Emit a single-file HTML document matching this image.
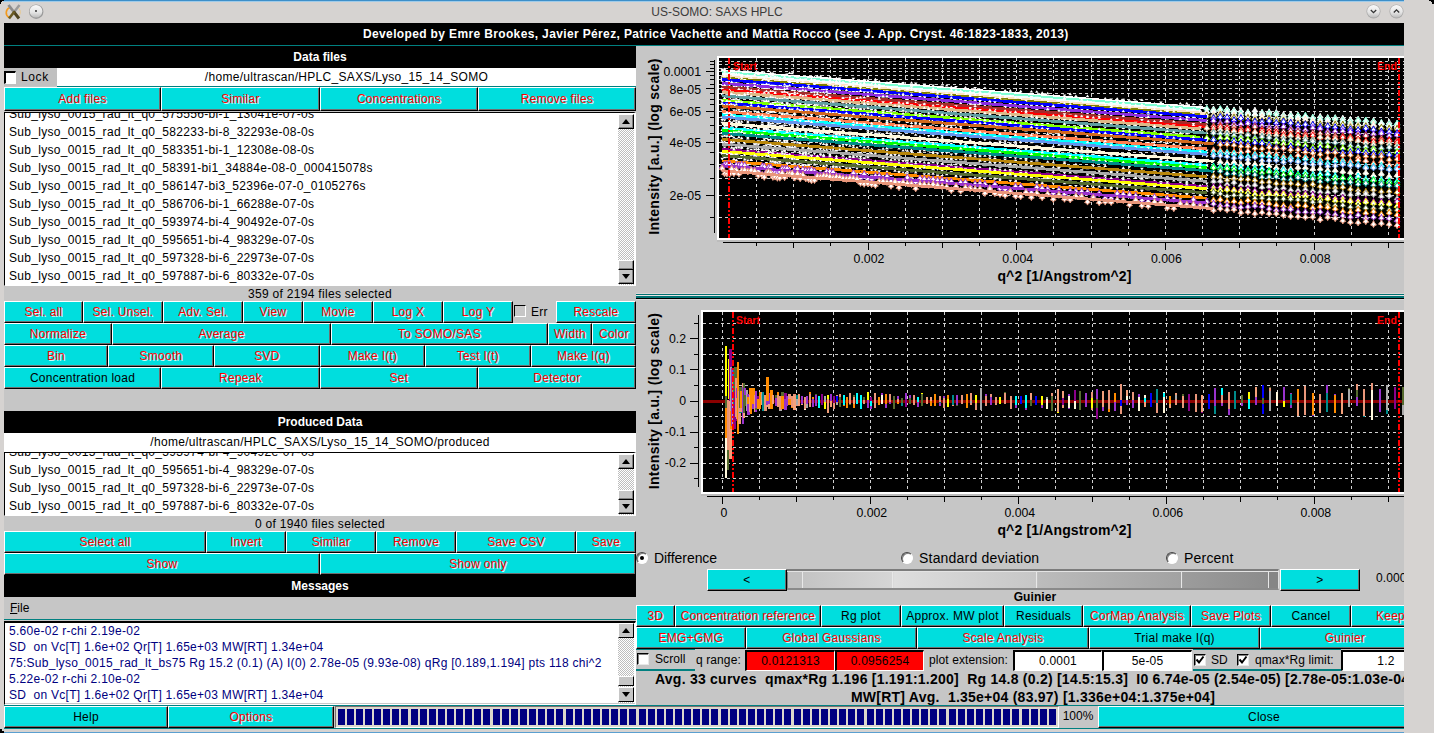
<!DOCTYPE html><html><head><meta charset="utf-8"><style>
*{margin:0;padding:0;box-sizing:border-box}
html,body{width:1434px;height:733px;overflow:hidden;background:#d6d3d1;font-family:"Liberation Sans", sans-serif;font-size:12px;position:relative}
.b{position:absolute;background:#00dede;border-top:1px solid #fff;border-left:1px solid #fff;border-right:1px solid #000;border-bottom:1px solid #000;box-shadow:inset -1px -1px 0 #6e6e6e;text-align:center;white-space:pre;font-size:12px;overflow:hidden;letter-spacing:0.25px}
</style></head><body>

<div style="position:absolute;left:4px;top:0px;width:1400px;height:1px;background:#3d8fc9"></div>
<div style="position:absolute;left:3px;top:1px;width:1401px;height:1px;background:#9fcbe9"></div>
<div style="position:absolute;left:0px;top:2px;width:1434px;height:20px;line-height:20px;text-align:center;white-space:pre;color:#3c3c3c;font-size:12px;">US-SOMO: SAXS HPLC</div>
<div style="position:absolute;left:4px;top:23px;width:1400px;height:708px;background:#c6c6c6"></div>
<div style="position:absolute;left:4px;top:23px;width:1400px;height:22px;line-height:22px;text-align:center;white-space:pre;background:#000;color:#fff;font-weight:bold;"></div>
<div style="position:absolute;left:363px;top:26px;white-space:pre;color:#fff;font-weight:bold;letter-spacing:0.36px;line-height:16px;">Developed by Emre Brookes, Javier Pérez, Patrice Vachette and Mattia Rocco (see J. App. Cryst. 46:1823-1833, 2013)</div>
<div style="position:absolute;left:4px;top:45px;width:1400px;height:1px;background:#008080"></div>
<div style="position:absolute;left:4px;top:46px;width:632px;height:22px;line-height:22px;text-align:center;white-space:pre;background:#000;color:#fff;font-weight:bold;">Data files</div>
<div style="position:absolute;left:4px;top:68px;width:53px;height:18px;background:#c0c0c0"></div>
<div style="position:absolute;left:4px;top:71px;width:12px;height:13px;background:#fff;border-top:2px solid #000;border-left:2px solid #000;border-right:1px solid #fff;border-bottom:1px solid #fff"></div>
<div style="position:absolute;left:21px;top:69px;white-space:pre;line-height:16px;letter-spacing:0.6px">Lock</div>
<div style="position:absolute;left:57px;top:68px;width:579px;height:18px;background:#fff"></div>
<div style="position:absolute;left:57px;top:68px;width:579px;height:18px;line-height:18px;text-align:center;white-space:pre;letter-spacing:0.3px;">/home/ultrascan/HPLC_SAXS/Lyso_15_14_SOMO</div>
<div style="position:absolute;left:57px;top:86px;width:579px;height:1px;background:#008080"></div>
<div class="b" style="left:4px;top:87px;width:157px;height:24px;line-height:22px;color:red;text-shadow:1px 1px 0 rgba(255,255,255,0.85);">Add files</div>
<div class="b" style="left:161px;top:87px;width:159px;height:24px;line-height:22px;color:red;text-shadow:1px 1px 0 rgba(255,255,255,0.85);">Similar</div>
<div class="b" style="left:320px;top:87px;width:158px;height:24px;line-height:22px;color:red;text-shadow:1px 1px 0 rgba(255,255,255,0.85);">Concentrations</div>
<div class="b" style="left:478px;top:87px;width:158px;height:24px;line-height:22px;color:red;text-shadow:1px 1px 0 rgba(255,255,255,0.85);">Remove files</div>
<div style="position:absolute;left:4px;top:112px;width:632px;height:174px;background:#fff;border-top:1px solid #000;border-left:1px solid #000;border-right:2px solid #fff;border-bottom:1px solid #fff;overflow:hidden"><div style="position:absolute;left:4px;top:-8px"><div style="height:18px;line-height:18px;white-space:pre;letter-spacing:0.3px">Sub_lyso_0015_rad_lt_q0_575556-bi-1_13041e-07-0s</div><div style="height:18px;line-height:18px;white-space:pre;letter-spacing:0.3px">Sub_lyso_0015_rad_lt_q0_582233-bi-8_32293e-08-0s</div><div style="height:18px;line-height:18px;white-space:pre;letter-spacing:0.3px">Sub_lyso_0015_rad_lt_q0_583351-bi-1_12308e-08-0s</div><div style="height:18px;line-height:18px;white-space:pre;letter-spacing:0.3px">Sub_lyso_0015_rad_lt_q0_58391-bi1_34884e-08-0_000415078s</div><div style="height:18px;line-height:18px;white-space:pre;letter-spacing:0.3px">Sub_lyso_0015_rad_lt_q0_586147-bi3_52396e-07-0_0105276s</div><div style="height:18px;line-height:18px;white-space:pre;letter-spacing:0.3px">Sub_lyso_0015_rad_lt_q0_586706-bi-1_66288e-07-0s</div><div style="height:18px;line-height:18px;white-space:pre;letter-spacing:0.3px">Sub_lyso_0015_rad_lt_q0_593974-bi-4_90492e-07-0s</div><div style="height:18px;line-height:18px;white-space:pre;letter-spacing:0.3px">Sub_lyso_0015_rad_lt_q0_595651-bi-4_98329e-07-0s</div><div style="height:18px;line-height:18px;white-space:pre;letter-spacing:0.3px">Sub_lyso_0015_rad_lt_q0_597328-bi-6_22973e-07-0s</div><div style="height:18px;line-height:18px;white-space:pre;letter-spacing:0.3px">Sub_lyso_0015_rad_lt_q0_597887-bi-6_80332e-07-0s</div></div></div>
<div style="position:absolute;left:618px;top:114px;width:16px;height:171px;background:repeating-conic-gradient(#bdbdbd 0 25%,#fff 0 50%) 0 0/2px 2px"></div>
<div style="position:absolute;left:618px;top:114px;width:16px;height:15px;background:#c6c6c6;border-top:1px solid #fff;border-left:1px solid #fff;border-right:1px solid #000;border-bottom:1px solid #000;box-shadow:inset -1px -1px 0 #808080"><div style="position:absolute;left:3px;top:4px;width:0;height:0;border-left:4px solid transparent;border-right:4px solid transparent;border-bottom:5px solid #000"></div></div>
<div style="position:absolute;left:618px;top:269px;width:16px;height:15px;background:#c6c6c6;border-top:1px solid #fff;border-left:1px solid #fff;border-right:1px solid #000;border-bottom:1px solid #000;box-shadow:inset -1px -1px 0 #808080"><div style="position:absolute;left:3px;top:4px;width:0;height:0;border-left:4px solid transparent;border-right:4px solid transparent;border-top:5px solid #000"></div></div>
<div style="position:absolute;left:618px;top:260px;width:16px;height:10px;background:#c6c6c6;border-top:1px solid #fff;border-left:1px solid #fff;border-right:1px solid #000;border-bottom:1px solid #000;box-shadow:inset -1px -1px 0 #808080"></div>
<div style="position:absolute;left:4px;top:287px;width:632px;height:15px;line-height:15px;text-align:center;white-space:pre;line-height:15px;letter-spacing:0.3px">359 of 2194 files selected</div>
<div class="b" style="left:4px;top:301px;width:79px;height:22px;line-height:20px;color:red;text-shadow:1px 1px 0 rgba(255,255,255,0.85);">Sel. all</div>
<div class="b" style="left:83px;top:301px;width:80px;height:22px;line-height:20px;color:red;text-shadow:1px 1px 0 rgba(255,255,255,0.85);">Sel. Unsel.</div>
<div class="b" style="left:163px;top:301px;width:80px;height:22px;line-height:20px;color:red;text-shadow:1px 1px 0 rgba(255,255,255,0.85);">Adv. Sel.</div>
<div class="b" style="left:243px;top:301px;width:60px;height:22px;line-height:20px;color:red;text-shadow:1px 1px 0 rgba(255,255,255,0.85);">View</div>
<div class="b" style="left:303px;top:301px;width:70px;height:22px;line-height:20px;color:red;text-shadow:1px 1px 0 rgba(255,255,255,0.85);">Movie</div>
<div class="b" style="left:373px;top:301px;width:70px;height:22px;line-height:20px;color:red;text-shadow:1px 1px 0 rgba(255,255,255,0.85);">Log X</div>
<div class="b" style="left:443px;top:301px;width:70px;height:22px;line-height:20px;color:red;text-shadow:1px 1px 0 rgba(255,255,255,0.85);">Log Y</div>
<div class="b" style="left:556px;top:301px;width:80px;height:22px;line-height:20px;color:red;text-shadow:1px 1px 0 rgba(255,255,255,0.85);">Rescale</div>
<div style="position:absolute;left:514px;top:305px;width:12px;height:12px;background:transparent;border-top:1px solid #000;border-left:1px solid #000;border-right:1px solid #fff;border-bottom:1px solid #fff"></div>
<div style="position:absolute;left:531px;top:304px;white-space:pre;line-height:16px;letter-spacing:0.3px">Err</div>
<div class="b" style="left:4px;top:323px;width:108px;height:22px;line-height:20px;color:red;text-shadow:1px 1px 0 rgba(255,255,255,0.85);">Normalize</div>
<div class="b" style="left:112px;top:323px;width:219px;height:22px;line-height:20px;color:red;text-shadow:1px 1px 0 rgba(255,255,255,0.85);">Average</div>
<div class="b" style="left:331px;top:323px;width:217px;height:22px;line-height:20px;color:red;text-shadow:1px 1px 0 rgba(255,255,255,0.85);">To SOMO/SAS</div>
<div class="b" style="left:548px;top:323px;width:44px;height:22px;line-height:20px;color:red;text-shadow:1px 1px 0 rgba(255,255,255,0.85);">Width</div>
<div class="b" style="left:592px;top:323px;width:44px;height:22px;line-height:20px;color:red;text-shadow:1px 1px 0 rgba(255,255,255,0.85);">Color</div>
<div class="b" style="left:4px;top:345px;width:104px;height:22px;line-height:20px;color:red;text-shadow:1px 1px 0 rgba(255,255,255,0.85);">Bin</div>
<div class="b" style="left:108px;top:345px;width:106px;height:22px;line-height:20px;color:red;text-shadow:1px 1px 0 rgba(255,255,255,0.85);">Smooth</div>
<div class="b" style="left:214px;top:345px;width:106px;height:22px;line-height:20px;color:red;text-shadow:1px 1px 0 rgba(255,255,255,0.85);">SVD</div>
<div class="b" style="left:320px;top:345px;width:105px;height:22px;line-height:20px;color:red;text-shadow:1px 1px 0 rgba(255,255,255,0.85);">Make I(t)</div>
<div class="b" style="left:425px;top:345px;width:106px;height:22px;line-height:20px;color:red;text-shadow:1px 1px 0 rgba(255,255,255,0.85);">Test I(t)</div>
<div class="b" style="left:531px;top:345px;width:105px;height:22px;line-height:20px;color:red;text-shadow:1px 1px 0 rgba(255,255,255,0.85);">Make I(q)</div>
<div class="b" style="left:4px;top:367px;width:157px;height:22px;line-height:20px;color:#000;">Concentration load</div>
<div class="b" style="left:161px;top:367px;width:159px;height:22px;line-height:20px;color:red;text-shadow:1px 1px 0 rgba(255,255,255,0.85);">Repeak</div>
<div class="b" style="left:320px;top:367px;width:158px;height:22px;line-height:20px;color:red;text-shadow:1px 1px 0 rgba(255,255,255,0.85);">Set</div>
<div class="b" style="left:478px;top:367px;width:158px;height:22px;line-height:20px;color:red;text-shadow:1px 1px 0 rgba(255,255,255,0.85);">Detector</div>
<div style="position:absolute;left:4px;top:411px;width:632px;height:22px;line-height:22px;text-align:center;white-space:pre;background:#000;color:#fff;font-weight:bold;">Produced Data</div>
<div style="position:absolute;left:4px;top:433px;width:632px;height:19px;background:#fff"></div>
<div style="position:absolute;left:4px;top:433px;width:632px;height:19px;line-height:19px;text-align:center;white-space:pre;letter-spacing:0.3px;">/home/ultrascan/HPLC_SAXS/Lyso_15_14_SOMO/produced</div>
<div style="position:absolute;left:4px;top:452px;width:632px;height:64px;background:#fff;border-top:1px solid #000;border-left:1px solid #000;border-right:2px solid #fff;border-bottom:1px solid #fff;overflow:hidden"><div style="position:absolute;left:4px;top:-10px"><div style="height:18px;line-height:18px;white-space:pre;letter-spacing:0.3px">Sub_lyso_0015_rad_lt_q0_593974-bi-4_90492e-07-0s</div><div style="height:18px;line-height:18px;white-space:pre;letter-spacing:0.3px">Sub_lyso_0015_rad_lt_q0_595651-bi-4_98329e-07-0s</div><div style="height:18px;line-height:18px;white-space:pre;letter-spacing:0.3px">Sub_lyso_0015_rad_lt_q0_597328-bi-6_22973e-07-0s</div><div style="height:18px;line-height:18px;white-space:pre;letter-spacing:0.3px">Sub_lyso_0015_rad_lt_q0_597887-bi-6_80332e-07-0s</div></div></div>
<div style="position:absolute;left:618px;top:454px;width:16px;height:61px;background:repeating-conic-gradient(#bdbdbd 0 25%,#fff 0 50%) 0 0/2px 2px"></div>
<div style="position:absolute;left:618px;top:454px;width:16px;height:15px;background:#c6c6c6;border-top:1px solid #fff;border-left:1px solid #fff;border-right:1px solid #000;border-bottom:1px solid #000;box-shadow:inset -1px -1px 0 #808080"><div style="position:absolute;left:3px;top:4px;width:0;height:0;border-left:4px solid transparent;border-right:4px solid transparent;border-bottom:5px solid #000"></div></div>
<div style="position:absolute;left:618px;top:499px;width:16px;height:15px;background:#c6c6c6;border-top:1px solid #fff;border-left:1px solid #fff;border-right:1px solid #000;border-bottom:1px solid #000;box-shadow:inset -1px -1px 0 #808080"><div style="position:absolute;left:3px;top:4px;width:0;height:0;border-left:4px solid transparent;border-right:4px solid transparent;border-top:5px solid #000"></div></div>
<div style="position:absolute;left:618px;top:490px;width:16px;height:10px;background:#c6c6c6;border-top:1px solid #fff;border-left:1px solid #fff;border-right:1px solid #000;border-bottom:1px solid #000;box-shadow:inset -1px -1px 0 #808080"></div>
<div style="position:absolute;left:4px;top:517px;width:632px;height:15px;line-height:15px;text-align:center;white-space:pre;line-height:15px;letter-spacing:0.3px">0 of 1940 files selected</div>
<div class="b" style="left:4px;top:531px;width:202px;height:22px;line-height:20px;color:red;text-shadow:1px 1px 0 rgba(255,255,255,0.85);">Select all</div>
<div class="b" style="left:206px;top:531px;width:80px;height:22px;line-height:20px;color:red;text-shadow:1px 1px 0 rgba(255,255,255,0.85);">Invert</div>
<div class="b" style="left:286px;top:531px;width:90px;height:22px;line-height:20px;color:red;text-shadow:1px 1px 0 rgba(255,255,255,0.85);">Similar</div>
<div class="b" style="left:376px;top:531px;width:80px;height:22px;line-height:20px;color:red;text-shadow:1px 1px 0 rgba(255,255,255,0.85);">Remove</div>
<div class="b" style="left:456px;top:531px;width:120px;height:22px;line-height:20px;color:red;text-shadow:1px 1px 0 rgba(255,255,255,0.85);">Save CSV</div>
<div class="b" style="left:576px;top:531px;width:60px;height:22px;line-height:20px;color:red;text-shadow:1px 1px 0 rgba(255,255,255,0.85);">Save</div>
<div class="b" style="left:4px;top:553px;width:316px;height:22px;line-height:20px;color:red;text-shadow:1px 1px 0 rgba(255,255,255,0.85);">Show</div>
<div class="b" style="left:320px;top:553px;width:316px;height:22px;line-height:20px;color:red;text-shadow:1px 1px 0 rgba(255,255,255,0.85);">Show only</div>
<div style="position:absolute;left:4px;top:575px;width:632px;height:22px;line-height:22px;text-align:center;white-space:pre;background:#000;color:#fff;font-weight:bold;">Messages</div>
<div style="position:absolute;left:10px;top:599px;white-space:pre;line-height:18px;"><u>F</u>ile</div>
<div style="position:absolute;left:4px;top:619px;width:632px;height:1px;background:#008080"></div>
<div style="position:absolute;left:4px;top:621px;width:632px;height:84px;background:#fff;border-top:2px solid #000;border-left:1px solid #000;border-right:1px solid #fff;border-bottom:1px solid #fff;box-shadow:inset 0 -1px 0 #c8c8c8;overflow:hidden;color:#000080"><div style="position:absolute;left:4px;top:0px"><div style="height:16px;line-height:16px;white-space:pre;letter-spacing:0.28px">5.60e-02 r-chi 2.19e-02</div><div style="height:16px;line-height:16px;white-space:pre;letter-spacing:0.28px">SD  on Vc[T] 1.6e+02 Qr[T] 1.65e+03 MW[RT] 1.34e+04</div><div style="height:16px;line-height:16px;white-space:pre;letter-spacing:0.28px">75:Sub_lyso_0015_rad_lt_bs75 Rg 15.2 (0.1) (A) I(0) 2.78e-05 (9.93e-08) qRg [0.189,1.194] pts 118 chi^2</div><div style="height:16px;line-height:16px;white-space:pre;letter-spacing:0.28px">5.22e-02 r-chi 2.10e-02</div><div style="height:16px;line-height:16px;white-space:pre;letter-spacing:0.28px">SD  on Vc[T] 1.6e+02 Qr[T] 1.65e+03 MW[RT] 1.34e+04</div></div></div>
<div style="position:absolute;left:618px;top:623px;width:16px;height:80px;background:repeating-conic-gradient(#bdbdbd 0 25%,#fff 0 50%) 0 0/2px 2px"></div>
<div style="position:absolute;left:618px;top:623px;width:16px;height:15px;background:#c6c6c6;border-top:1px solid #fff;border-left:1px solid #fff;border-right:1px solid #000;border-bottom:1px solid #000"><div style="position:absolute;left:3px;top:4px;border-left:4px solid transparent;border-right:4px solid transparent;border-bottom:5px solid #000"></div></div>
<div style="position:absolute;left:618px;top:687px;width:16px;height:15px;background:#c6c6c6;border-top:1px solid #fff;border-left:1px solid #fff;border-right:1px solid #000;border-bottom:1px solid #000"><div style="position:absolute;left:3px;top:4px;border-left:4px solid transparent;border-right:4px solid transparent;border-top:5px solid #000"></div></div>
<div style="position:absolute;left:618px;top:676px;width:16px;height:10px;background:#c6c6c6;border-top:1px solid #fff;border-left:1px solid #fff;border-right:1px solid #000;border-bottom:1px solid #000"></div>
<div style="position:absolute;left:4px;top:705px;width:1400px;height:1px;background:#008080"></div>
<div class="b" style="left:4px;top:706px;width:164px;height:22px;line-height:20px;color:#000;">Help</div>
<div class="b" style="left:168px;top:706px;width:166px;height:22px;line-height:20px;color:red;text-shadow:1px 1px 0 rgba(255,255,255,0.85);">Options</div>
<div style="position:absolute;left:335px;top:706px;width:724px;height:22px;background:#dcd8cc;border-top:1px solid #7a7070;border-left:1px solid #7a7070;border-bottom:1px solid #fff;border-right:1px solid #fff;overflow:hidden"><div style="position:absolute;left:1.5px;top:2px;width:7px;height:16px;background:#000080"></div><div style="position:absolute;left:10.6px;top:2px;width:7px;height:16px;background:#000080"></div><div style="position:absolute;left:19.7px;top:2px;width:7px;height:16px;background:#000080"></div><div style="position:absolute;left:28.9px;top:2px;width:7px;height:16px;background:#000080"></div><div style="position:absolute;left:38.0px;top:2px;width:7px;height:16px;background:#000080"></div><div style="position:absolute;left:47.1px;top:2px;width:7px;height:16px;background:#000080"></div><div style="position:absolute;left:56.2px;top:2px;width:7px;height:16px;background:#000080"></div><div style="position:absolute;left:65.3px;top:2px;width:7px;height:16px;background:#000080"></div><div style="position:absolute;left:74.5px;top:2px;width:7px;height:16px;background:#000080"></div><div style="position:absolute;left:83.6px;top:2px;width:7px;height:16px;background:#000080"></div><div style="position:absolute;left:92.7px;top:2px;width:7px;height:16px;background:#000080"></div><div style="position:absolute;left:101.8px;top:2px;width:7px;height:16px;background:#000080"></div><div style="position:absolute;left:110.9px;top:2px;width:7px;height:16px;background:#000080"></div><div style="position:absolute;left:120.1px;top:2px;width:7px;height:16px;background:#000080"></div><div style="position:absolute;left:129.2px;top:2px;width:7px;height:16px;background:#000080"></div><div style="position:absolute;left:138.3px;top:2px;width:7px;height:16px;background:#000080"></div><div style="position:absolute;left:147.4px;top:2px;width:7px;height:16px;background:#000080"></div><div style="position:absolute;left:156.5px;top:2px;width:7px;height:16px;background:#000080"></div><div style="position:absolute;left:165.7px;top:2px;width:7px;height:16px;background:#000080"></div><div style="position:absolute;left:174.8px;top:2px;width:7px;height:16px;background:#000080"></div><div style="position:absolute;left:183.9px;top:2px;width:7px;height:16px;background:#000080"></div><div style="position:absolute;left:193.0px;top:2px;width:7px;height:16px;background:#000080"></div><div style="position:absolute;left:202.1px;top:2px;width:7px;height:16px;background:#000080"></div><div style="position:absolute;left:211.3px;top:2px;width:7px;height:16px;background:#000080"></div><div style="position:absolute;left:220.4px;top:2px;width:7px;height:16px;background:#000080"></div><div style="position:absolute;left:229.5px;top:2px;width:7px;height:16px;background:#000080"></div><div style="position:absolute;left:238.6px;top:2px;width:7px;height:16px;background:#000080"></div><div style="position:absolute;left:247.7px;top:2px;width:7px;height:16px;background:#000080"></div><div style="position:absolute;left:256.9px;top:2px;width:7px;height:16px;background:#000080"></div><div style="position:absolute;left:266.0px;top:2px;width:7px;height:16px;background:#000080"></div><div style="position:absolute;left:275.1px;top:2px;width:7px;height:16px;background:#000080"></div><div style="position:absolute;left:284.2px;top:2px;width:7px;height:16px;background:#000080"></div><div style="position:absolute;left:293.3px;top:2px;width:7px;height:16px;background:#000080"></div><div style="position:absolute;left:302.5px;top:2px;width:7px;height:16px;background:#000080"></div><div style="position:absolute;left:311.6px;top:2px;width:7px;height:16px;background:#000080"></div><div style="position:absolute;left:320.7px;top:2px;width:7px;height:16px;background:#000080"></div><div style="position:absolute;left:329.8px;top:2px;width:7px;height:16px;background:#000080"></div><div style="position:absolute;left:338.9px;top:2px;width:7px;height:16px;background:#000080"></div><div style="position:absolute;left:348.1px;top:2px;width:7px;height:16px;background:#000080"></div><div style="position:absolute;left:357.2px;top:2px;width:7px;height:16px;background:#000080"></div><div style="position:absolute;left:366.3px;top:2px;width:7px;height:16px;background:#000080"></div><div style="position:absolute;left:375.4px;top:2px;width:7px;height:16px;background:#000080"></div><div style="position:absolute;left:384.5px;top:2px;width:7px;height:16px;background:#000080"></div><div style="position:absolute;left:393.7px;top:2px;width:7px;height:16px;background:#000080"></div><div style="position:absolute;left:402.8px;top:2px;width:7px;height:16px;background:#000080"></div><div style="position:absolute;left:411.9px;top:2px;width:7px;height:16px;background:#000080"></div><div style="position:absolute;left:421.0px;top:2px;width:7px;height:16px;background:#000080"></div><div style="position:absolute;left:430.1px;top:2px;width:7px;height:16px;background:#000080"></div><div style="position:absolute;left:439.3px;top:2px;width:7px;height:16px;background:#000080"></div><div style="position:absolute;left:448.4px;top:2px;width:7px;height:16px;background:#000080"></div><div style="position:absolute;left:457.5px;top:2px;width:7px;height:16px;background:#000080"></div><div style="position:absolute;left:466.6px;top:2px;width:7px;height:16px;background:#000080"></div><div style="position:absolute;left:475.7px;top:2px;width:7px;height:16px;background:#000080"></div><div style="position:absolute;left:484.9px;top:2px;width:7px;height:16px;background:#000080"></div><div style="position:absolute;left:494.0px;top:2px;width:7px;height:16px;background:#000080"></div><div style="position:absolute;left:503.1px;top:2px;width:7px;height:16px;background:#000080"></div><div style="position:absolute;left:512.2px;top:2px;width:7px;height:16px;background:#000080"></div><div style="position:absolute;left:521.3px;top:2px;width:7px;height:16px;background:#000080"></div><div style="position:absolute;left:530.5px;top:2px;width:7px;height:16px;background:#000080"></div><div style="position:absolute;left:539.6px;top:2px;width:7px;height:16px;background:#000080"></div><div style="position:absolute;left:548.7px;top:2px;width:7px;height:16px;background:#000080"></div><div style="position:absolute;left:557.8px;top:2px;width:7px;height:16px;background:#000080"></div><div style="position:absolute;left:566.9px;top:2px;width:7px;height:16px;background:#000080"></div><div style="position:absolute;left:576.1px;top:2px;width:7px;height:16px;background:#000080"></div><div style="position:absolute;left:585.2px;top:2px;width:7px;height:16px;background:#000080"></div><div style="position:absolute;left:594.3px;top:2px;width:7px;height:16px;background:#000080"></div><div style="position:absolute;left:603.4px;top:2px;width:7px;height:16px;background:#000080"></div><div style="position:absolute;left:612.5px;top:2px;width:7px;height:16px;background:#000080"></div><div style="position:absolute;left:621.7px;top:2px;width:7px;height:16px;background:#000080"></div><div style="position:absolute;left:630.8px;top:2px;width:7px;height:16px;background:#000080"></div><div style="position:absolute;left:639.9px;top:2px;width:7px;height:16px;background:#000080"></div><div style="position:absolute;left:649.0px;top:2px;width:7px;height:16px;background:#000080"></div><div style="position:absolute;left:658.1px;top:2px;width:7px;height:16px;background:#000080"></div><div style="position:absolute;left:667.3px;top:2px;width:7px;height:16px;background:#000080"></div><div style="position:absolute;left:676.4px;top:2px;width:7px;height:16px;background:#000080"></div><div style="position:absolute;left:685.5px;top:2px;width:7px;height:16px;background:#000080"></div><div style="position:absolute;left:694.6px;top:2px;width:7px;height:16px;background:#000080"></div><div style="position:absolute;left:703.7px;top:2px;width:7px;height:16px;background:#000080"></div><div style="position:absolute;left:712.9px;top:2px;width:7px;height:16px;background:#000080"></div></div>
<div style="position:absolute;left:1058px;top:706px;width:40px;height:21px;line-height:21px;text-align:center;white-space:pre;">100%</div>
<div class="b" style="left:1098px;top:706px;width:332px;height:22px;line-height:20px;color:#000;">Close</div>
<div style="position:absolute;left:4px;top:728px;width:1400px;height:1px;background:#008080"></div>
<!--PLOTS-->
<div style="position:absolute;left:636px;top:293px;width:768px;height:1px;background:#dcd6d6"></div>
<div style="position:absolute;left:636px;top:294px;width:768px;height:1px;background:#007272"></div>
<div style="position:absolute;left:636px;top:295px;width:768px;height:1px;background:#e6e6e6"></div>
<div style="position:absolute;left:636px;top:296px;width:768px;height:2px;background:#007272"></div>
<div style="position:absolute;left:636px;top:298px;width:768px;height:1px;background:#000"></div>
<div style="position:absolute;left:636px;top:299px;width:768px;height:1px;background:#d8d8d8"></div>
<svg width="768" height="500" style="position:absolute;left:636px;top:46px" viewBox="636 46 768 500"><defs><clipPath id="c1"><rect x="719" y="58" width="685" height="180"/></clipPath><clipPath id="c2"><rect x="703" y="312" width="701" height="180"/></clipPath></defs><rect x="717" y="56" width="700" height="184" fill="#fff"/><rect x="719" y="58" width="700" height="180" fill="#000"/><rect x="717" y="240" width="700" height="2" fill="#bcbcbc"/><g clip-path="url(#c1)"><path d="M756.5 58V238 M793.5 58V238 M830.5 58V238 M868.5 58V238 M905.5 58V238 M942.5 58V238 M979.5 58V238 M1016.5 58V238 M1053.5 58V238 M1091.5 58V238 M1128.5 58V238 M1165.5 58V238 M1202.5 58V238 M1239.5 58V238 M1276.5 58V238 M1314.5 58V238 M1351.5 58V238 M1388.5 58V238 M719 217.5H1404 M719 195.5H1404 M719 178.5H1404 M719 164.5H1404 M719 152.5H1404 M719 142.5H1404 M719 133.5H1404 M719 125.5H1404 M719 117.5H1404 M719 111.5H1404 M719 104.5H1404 M719 99.5H1404 M719 93.5H1404 M719 88.5H1404 M719 84.5H1404 M719 79.5H1404 M719 75.5H1404 M719 71.5H1404 M719 68.5H1404 M719 64.5H1404 M719 61.5H1404" stroke="#d0d0d0" stroke-width="1" stroke-dasharray="3 3"/></g><defs><marker id="m0" markerUnits="userSpaceOnUse" markerWidth="10" markerHeight="10" refX="5" refY="5" overflow="visible"><path d="M5 1.5L6 3.5 7.9 6 6 6.6 5 8.5 4 6.6 2.1 6 4 3.5z" fill="#fff" stroke="#ffffff" stroke-width="1"/></marker><marker id="m1" markerUnits="userSpaceOnUse" markerWidth="10" markerHeight="10" refX="5" refY="5" overflow="visible"><path d="M5 1.5L6 3.5 7.9 6 6 6.6 5 8.5 4 6.6 2.1 6 4 3.5z" fill="#fff" stroke="#7fffd4" stroke-width="1"/></marker><marker id="m2" markerUnits="userSpaceOnUse" markerWidth="10" markerHeight="10" refX="5" refY="5" overflow="visible"><path d="M5 1.5L6 3.5 7.9 6 6 6.6 5 8.5 4 6.6 2.1 6 4 3.5z" fill="#fff" stroke="#f0ffff" stroke-width="1"/></marker><marker id="m3" markerUnits="userSpaceOnUse" markerWidth="10" markerHeight="10" refX="5" refY="5" overflow="visible"><path d="M5 1.5L6 3.5 7.9 6 6 6.6 5 8.5 4 6.6 2.1 6 4 3.5z" fill="#fff" stroke="#ffe4c4" stroke-width="1"/></marker><marker id="m4" markerUnits="userSpaceOnUse" markerWidth="10" markerHeight="10" refX="5" refY="5" overflow="visible"><path d="M5 1.5L6 3.5 7.9 6 6 6.6 5 8.5 4 6.6 2.1 6 4 3.5z" fill="#fff" stroke="#808000" stroke-width="1"/></marker><marker id="m5" markerUnits="userSpaceOnUse" markerWidth="10" markerHeight="10" refX="5" refY="5" overflow="visible"><path d="M5 1.5L6 3.5 7.9 6 6 6.6 5 8.5 4 6.6 2.1 6 4 3.5z" fill="#fff" stroke="#0000ff" stroke-width="1"/></marker><marker id="m6" markerUnits="userSpaceOnUse" markerWidth="10" markerHeight="10" refX="5" refY="5" overflow="visible"><path d="M5 1.5L6 3.5 7.9 6 6 6.6 5 8.5 4 6.6 2.1 6 4 3.5z" fill="#fff" stroke="#8a2be2" stroke-width="1"/></marker><marker id="m7" markerUnits="userSpaceOnUse" markerWidth="10" markerHeight="10" refX="5" refY="5" overflow="visible"><path d="M5 1.5L6 3.5 7.9 6 6 6.6 5 8.5 4 6.6 2.1 6 4 3.5z" fill="#fff" stroke="#a52a2a" stroke-width="1"/></marker><marker id="m8" markerUnits="userSpaceOnUse" markerWidth="10" markerHeight="10" refX="5" refY="5" overflow="visible"><path d="M5 1.5L6 3.5 7.9 6 6 6.6 5 8.5 4 6.6 2.1 6 4 3.5z" fill="#fff" stroke="#ff0000" stroke-width="1"/></marker><marker id="m9" markerUnits="userSpaceOnUse" markerWidth="10" markerHeight="10" refX="5" refY="5" overflow="visible"><path d="M5 1.5L6 3.5 7.9 6 6 6.6 5 8.5 4 6.6 2.1 6 4 3.5z" fill="#fff" stroke="#deb887" stroke-width="1"/></marker><marker id="m10" markerUnits="userSpaceOnUse" markerWidth="10" markerHeight="10" refX="5" refY="5" overflow="visible"><path d="M5 1.5L6 3.5 7.9 6 6 6.6 5 8.5 4 6.6 2.1 6 4 3.5z" fill="#fff" stroke="#5f9ea0" stroke-width="1"/></marker><marker id="m11" markerUnits="userSpaceOnUse" markerWidth="10" markerHeight="10" refX="5" refY="5" overflow="visible"><path d="M5 1.5L6 3.5 7.9 6 6 6.6 5 8.5 4 6.6 2.1 6 4 3.5z" fill="#fff" stroke="#7fff00" stroke-width="1"/></marker><marker id="m12" markerUnits="userSpaceOnUse" markerWidth="10" markerHeight="10" refX="5" refY="5" overflow="visible"><path d="M5 1.5L6 3.5 7.9 6 6 6.6 5 8.5 4 6.6 2.1 6 4 3.5z" fill="#fff" stroke="#0000ff" stroke-width="1"/></marker><marker id="m13" markerUnits="userSpaceOnUse" markerWidth="10" markerHeight="10" refX="5" refY="5" overflow="visible"><path d="M5 1.5L6 3.5 7.9 6 6 6.6 5 8.5 4 6.6 2.1 6 4 3.5z" fill="#fff" stroke="#d2691e" stroke-width="1"/></marker><marker id="m14" markerUnits="userSpaceOnUse" markerWidth="10" markerHeight="10" refX="5" refY="5" overflow="visible"><path d="M5 1.5L6 3.5 7.9 6 6 6.6 5 8.5 4 6.6 2.1 6 4 3.5z" fill="#fff" stroke="#ff7f50" stroke-width="1"/></marker><marker id="m15" markerUnits="userSpaceOnUse" markerWidth="10" markerHeight="10" refX="5" refY="5" overflow="visible"><path d="M5 1.5L6 3.5 7.9 6 6 6.6 5 8.5 4 6.6 2.1 6 4 3.5z" fill="#fff" stroke="#00ffff" stroke-width="1"/></marker><marker id="m16" markerUnits="userSpaceOnUse" markerWidth="10" markerHeight="10" refX="5" refY="5" overflow="visible"><path d="M5 1.5L6 3.5 7.9 6 6 6.6 5 8.5 4 6.6 2.1 6 4 3.5z" fill="#fff" stroke="#6495ed" stroke-width="1"/></marker><marker id="m17" markerUnits="userSpaceOnUse" markerWidth="10" markerHeight="10" refX="5" refY="5" overflow="visible"><path d="M5 1.5L6 3.5 7.9 6 6 6.6 5 8.5 4 6.6 2.1 6 4 3.5z" fill="#fff" stroke="#fff8dc" stroke-width="1"/></marker><marker id="m18" markerUnits="userSpaceOnUse" markerWidth="10" markerHeight="10" refX="5" refY="5" overflow="visible"><path d="M5 1.5L6 3.5 7.9 6 6 6.6 5 8.5 4 6.6 2.1 6 4 3.5z" fill="#fff" stroke="#00ffff" stroke-width="1"/></marker><marker id="m19" markerUnits="userSpaceOnUse" markerWidth="10" markerHeight="10" refX="5" refY="5" overflow="visible"><path d="M5 1.5L6 3.5 7.9 6 6 6.6 5 8.5 4 6.6 2.1 6 4 3.5z" fill="#fff" stroke="#00ff00" stroke-width="1"/></marker><marker id="m20" markerUnits="userSpaceOnUse" markerWidth="10" markerHeight="10" refX="5" refY="5" overflow="visible"><path d="M5 1.5L6 3.5 7.9 6 6 6.6 5 8.5 4 6.6 2.1 6 4 3.5z" fill="#fff" stroke="#008b8b" stroke-width="1"/></marker><marker id="m21" markerUnits="userSpaceOnUse" markerWidth="10" markerHeight="10" refX="5" refY="5" overflow="visible"><path d="M5 1.5L6 3.5 7.9 6 6 6.6 5 8.5 4 6.6 2.1 6 4 3.5z" fill="#fff" stroke="#b8860b" stroke-width="1"/></marker><marker id="m22" markerUnits="userSpaceOnUse" markerWidth="10" markerHeight="10" refX="5" refY="5" overflow="visible"><path d="M5 1.5L6 3.5 7.9 6 6 6.6 5 8.5 4 6.6 2.1 6 4 3.5z" fill="#fff" stroke="#a9a9a9" stroke-width="1"/></marker><marker id="m23" markerUnits="userSpaceOnUse" markerWidth="10" markerHeight="10" refX="5" refY="5" overflow="visible"><path d="M5 1.5L6 3.5 7.9 6 6 6.6 5 8.5 4 6.6 2.1 6 4 3.5z" fill="#fff" stroke="#8b008b" stroke-width="1"/></marker><marker id="m24" markerUnits="userSpaceOnUse" markerWidth="10" markerHeight="10" refX="5" refY="5" overflow="visible"><path d="M5 1.5L6 3.5 7.9 6 6 6.6 5 8.5 4 6.6 2.1 6 4 3.5z" fill="#fff" stroke="#ffff00" stroke-width="1"/></marker><marker id="m25" markerUnits="userSpaceOnUse" markerWidth="10" markerHeight="10" refX="5" refY="5" overflow="visible"><path d="M5 1.5L6 3.5 7.9 6 6 6.6 5 8.5 4 6.6 2.1 6 4 3.5z" fill="#fff" stroke="#556b2f" stroke-width="1"/></marker><marker id="m26" markerUnits="userSpaceOnUse" markerWidth="10" markerHeight="10" refX="5" refY="5" overflow="visible"><path d="M5 1.5L6 3.5 7.9 6 6 6.6 5 8.5 4 6.6 2.1 6 4 3.5z" fill="#fff" stroke="#ff8c00" stroke-width="1"/></marker><marker id="m27" markerUnits="userSpaceOnUse" markerWidth="10" markerHeight="10" refX="5" refY="5" overflow="visible"><path d="M5 1.5L6 3.5 7.9 6 6 6.6 5 8.5 4 6.6 2.1 6 4 3.5z" fill="#fff" stroke="#9932cc" stroke-width="1"/></marker><marker id="m28" markerUnits="userSpaceOnUse" markerWidth="10" markerHeight="10" refX="5" refY="5" overflow="visible"><path d="M5 1.5L6 3.5 7.9 6 6 6.6 5 8.5 4 6.6 2.1 6 4 3.5z" fill="#fff" stroke="#e9967a" stroke-width="1"/></marker><marker id="wd" markerUnits="userSpaceOnUse" markerWidth="10" markerHeight="10" refX="5" refY="5" overflow="visible"><path d="M3.2 4.6H6.8L5 7.2Z" fill="#fff"/></marker><marker id="wu" markerUnits="userSpaceOnUse" markerWidth="10" markerHeight="10" refX="5" refY="5" overflow="visible"><path d="M5 2.8L6.8 5.4H3.2Z" fill="#fff"/></marker></defs><g clip-path="url(#c1)"><polyline points="722.2,69.0 726.9,72.6 729.6,72.8 731.7,69.9 751.2,75.4 754.7,74.9 758.4,75.6 764.3,76.4 766.4,75.6 770.7,77.0 772.9,73.5 777.4,76.8 784.6,77.5 787.1,73.9 794.8,78.4 805.8,80.0 811.5,80.1 823.6,77.5 826.7,77.3 833.1,81.7 836.4,82.5 839.7,78.0 853.4,78.1 867.9,80.0 871.6,84.6 883.1,86.1 887.0,85.6 891.0,81.3 903.1,82.4 915.7,83.0 920.0,87.6 924.3,84.0 933.1,84.8 942.1,86.0 956.0,86.3 960.7,91.7 975.1,87.5 1015.5,95.7 1026.0,96.9 1058.9,98.8 1064.5,94.8 1081.7,101.1 1093.3,101.8 1111.2,98.8 1123.3,99.2 1129.5,101.0 1135.7,101.0 1148.2,105.3 1154.5,106.8 1160.9,101.9 1200.1,106.2" fill="none" stroke="none" marker-start="url(#wd)" marker-mid="url(#wd)" marker-end="url(#wd)"/><polyline points="724.6,69.8 733.9,74.0 736.3,70.2 738.9,70.1 741.7,74.6 744.7,70.1 747.8,75.0 762.3,75.8 768.5,71.7 775.1,77.3 779.8,78.0 782.2,76.8 789.6,73.6 792.2,73.8 797.5,78.0 800.2,78.8 802.9,79.8 808.6,80.0 814.5,80.8 817.4,76.9 820.5,76.9 829.9,77.7 843.0,82.1 846.4,81.8 849.9,82.0 857.0,82.8 860.5,83.8 864.2,80.6 875.4,80.0 879.2,84.4 895.0,86.2 899.0,85.9 907.3,87.2 911.5,83.4 928.7,89.7 937.6,89.6 946.7,86.1 951.3,90.8 965.4,88.1 970.2,91.8 980.0,92.7 984.9,88.7 989.9,93.5 994.9,94.7 1000.0,93.6 1005.1,91.1 1010.3,91.3 1020.7,91.9 1031.4,92.1 1036.8,92.4 1042.2,93.5 1047.7,94.0 1053.3,97.7 1070.2,94.8 1075.9,96.7 1087.5,96.8 1099.2,101.4 1105.2,99.2 1117.2,99.4 1141.9,100.7 1167.3,107.9 1173.8,108.3 1180.3,104.1 1186.8,104.0 1193.4,104.9 1206.8,108.1" fill="none" stroke="none" marker-start="url(#wu)" marker-mid="url(#wu)" marker-end="url(#wu)"/><polyline points="722.2,70.9 722.7,70.9 723.3,71.0 723.9,71.0 724.6,71.1 725.3,71.1 726.1,71.2 726.9,71.3 727.8,71.3 728.7,71.4 729.6,71.5 730.6,71.5 731.7,71.6 732.8,71.7 733.9,71.8 735.1,71.9 736.3,72.0 737.6,72.1 738.9,72.2 740.3,72.3 741.7,72.4 743.2,72.5 744.7,72.6 746.2,72.8 747.8,72.9 749.5,73.0 751.2,73.1 752.9,73.3 754.7,73.4 756.5,73.5 758.4,73.7 760.4,73.8 762.3,74.0 764.3,74.1 766.4,74.3 768.5,74.5 770.7,74.6 772.9,74.8 775.1,75.0 777.4,75.2 779.8,75.3 782.2,75.5 784.6,75.7 787.1,75.9 789.6,76.1 792.2,76.3 794.8,76.5 797.5,76.7 800.2,76.9 802.9,77.1 805.8,77.3 808.6,77.6 811.5,77.8 814.5,78.0 817.4,78.2 820.5,78.5 823.6,78.7 826.7,78.9 829.9,79.2 833.1,79.4 836.4,79.7 839.7,79.9 843.0,80.2 846.4,80.5 849.9,80.7 853.4,81.0 857.0,81.3 860.5,81.6 864.2,81.8 867.9,82.1 871.6,82.4 875.4,82.7 879.2,83.0 883.1,83.3 887.0,83.6 891.0,83.9 895.0,84.2 899.0,84.5 903.1,84.8 907.3,85.2 911.5,85.5 915.7,85.8 920.0,86.1 924.3,86.5 928.7,86.8 933.1,87.1 937.6,87.5 942.1,87.8 946.7,88.2 951.3,88.5 956.0,88.9 960.7,89.3 965.4,89.6 970.2,90.0 975.1,90.4 980.0,90.7 984.9,91.1 989.9,91.5 994.9,91.9 1000.0,92.3 1005.1,92.7 1010.3,93.1 1015.5,93.5 1020.7,93.9 1026.0,94.3 1031.4,94.7 1036.8,95.1 1042.2,95.5 1047.7,96.0 1053.3,96.4 1058.9,96.8 1064.5,97.3 1070.2,97.7 1075.9,98.1 1081.7,98.6 1087.5,99.0 1093.3,99.5 1099.2,99.9 1105.2,100.4 1111.2,100.9 1117.2,101.3 1123.3,101.8 1129.5,102.3 1135.7,102.7 1141.9,103.2 1148.2,103.7 1154.5,104.2 1160.9,104.7 1167.3,105.2 1173.8,105.7 1180.3,106.2 1186.8,106.7 1193.4,107.2 1200.1,107.7 1206.8,108.2" fill="none" stroke="#ffffff" stroke-width="2.8" shape-rendering="crispEdges"/><polyline points="1213.5,109.5 1220.3,109.4 1227.1,109.2 1234.0,110.4 1240.9,111.0 1247.9,112.3 1254.9,110.7 1262.0,112.7 1269.1,112.2 1276.3,112.8 1283.5,115.0 1290.7,114.7 1298.0,115.4 1305.4,116.6 1312.8,117.7 1320.2,116.8 1327.7,117.9 1335.2,118.1 1342.8,118.7 1350.4,119.9 1358.1,119.7 1365.8,120.6 1373.5,121.0 1381.4,123.1 1389.2,122.9 1397.1,124.1" fill="none" stroke="none" marker-start="url(#m0)" marker-mid="url(#m0)" marker-end="url(#m0)"/><polyline points="722.2,70.1 724.6,71.1 726.9,74.4 731.7,71.5 736.3,75.2 744.7,76.6 751.2,73.2 766.4,73.3 768.5,77.6 777.4,78.7 789.6,79.8 792.2,76.6 794.8,76.0 797.5,75.8 800.2,80.1 808.6,77.3 811.5,76.5 817.4,77.1 843.0,83.3 849.9,81.0 860.5,81.1 864.2,85.1 883.1,86.4 895.0,88.2 907.3,88.9 911.5,85.3 928.7,91.0 937.6,86.6 942.1,86.5 956.0,92.4 960.7,89.3 970.2,93.1 989.9,91.7 994.9,95.5 1000.0,96.5 1005.1,96.1 1026.0,97.4 1031.4,93.5 1058.9,99.7 1070.2,97.3 1075.9,101.6 1081.7,102.7 1087.5,99.1 1093.3,103.4 1117.2,105.7 1135.7,101.4 1160.9,103.9 1173.8,109.3 1180.3,110.1 1186.8,106.8" fill="none" stroke="none" marker-start="url(#wd)" marker-mid="url(#wd)" marker-end="url(#wd)"/><polyline points="729.6,74.3 733.9,71.9 738.9,71.4 741.7,75.4 747.8,71.8 754.7,77.5 758.4,73.2 762.3,73.0 764.3,73.3 770.7,73.5 772.9,73.9 775.1,74.9 779.8,78.2 782.2,79.5 784.6,75.9 787.1,75.6 802.9,80.6 805.8,81.3 814.5,77.8 820.5,82.9 823.6,81.8 826.7,79.1 829.9,79.2 833.1,83.8 836.4,79.0 839.7,84.2 846.4,83.8 853.4,84.9 857.0,84.5 867.9,84.8 871.6,86.5 875.4,81.4 879.2,82.1 887.0,83.2 891.0,83.6 899.0,84.3 903.1,83.7 915.7,89.2 920.0,89.2 924.3,90.5 933.1,91.4 946.7,91.7 951.3,87.7 965.4,92.9 975.1,93.8 980.0,90.5 984.9,94.0 1010.3,93.0 1015.5,93.2 1020.7,93.6 1036.8,98.5 1042.2,95.2 1047.7,99.9 1053.3,99.6 1064.5,97.4 1099.2,104.3 1105.2,103.1 1111.2,105.1 1123.3,100.8 1129.5,102.3 1141.9,106.1 1148.2,104.0 1154.5,104.1 1167.3,109.5 1193.4,110.8 1200.1,107.3" fill="none" stroke="none" marker-start="url(#wu)" marker-mid="url(#wu)" marker-end="url(#wu)"/><polyline points="722.2,72.4 722.7,72.4 723.3,72.5 723.9,72.5 724.6,72.6 725.3,72.6 726.1,72.7 726.9,72.8 727.8,72.8 728.7,72.9 729.6,73.0 730.6,73.0 731.7,73.1 732.8,73.2 733.9,73.3 735.1,73.4 736.3,73.5 737.6,73.6 738.9,73.7 740.3,73.8 741.7,73.9 743.2,74.0 744.7,74.1 746.2,74.3 747.8,74.4 749.5,74.5 751.2,74.6 752.9,74.8 754.7,74.9 756.5,75.0 758.4,75.2 760.4,75.3 762.3,75.5 764.3,75.6 766.4,75.8 768.5,76.0 770.7,76.1 772.9,76.3 775.1,76.5 777.4,76.7 779.8,76.8 782.2,77.0 784.6,77.2 787.1,77.4 789.6,77.6 792.2,77.8 794.8,78.0 797.5,78.2 800.2,78.4 802.9,78.6 805.8,78.8 808.6,79.1 811.5,79.3 814.5,79.5 817.4,79.7 820.5,80.0 823.6,80.2 826.7,80.4 829.9,80.7 833.1,80.9 836.4,81.2 839.7,81.4 843.0,81.7 846.4,82.0 849.9,82.2 853.4,82.5 857.0,82.8 860.5,83.1 864.2,83.3 867.9,83.6 871.6,83.9 875.4,84.2 879.2,84.5 883.1,84.8 887.0,85.1 891.0,85.4 895.0,85.7 899.0,86.0 903.1,86.3 907.3,86.7 911.5,87.0 915.7,87.3 920.0,87.6 924.3,88.0 928.7,88.3 933.1,88.6 937.6,89.0 942.1,89.3 946.7,89.7 951.3,90.0 956.0,90.4 960.7,90.8 965.4,91.1 970.2,91.5 975.1,91.9 980.0,92.2 984.9,92.6 989.9,93.0 994.9,93.4 1000.0,93.8 1005.1,94.2 1010.3,94.6 1015.5,95.0 1020.7,95.4 1026.0,95.8 1031.4,96.2 1036.8,96.6 1042.2,97.0 1047.7,97.5 1053.3,97.9 1058.9,98.3 1064.5,98.8 1070.2,99.2 1075.9,99.6 1081.7,100.1 1087.5,100.5 1093.3,101.0 1099.2,101.4 1105.2,101.9 1111.2,102.4 1117.2,102.8 1123.3,103.3 1129.5,103.8 1135.7,104.2 1141.9,104.7 1148.2,105.2 1154.5,105.7 1160.9,106.2 1167.3,106.7 1173.8,107.2 1180.3,107.7 1186.8,108.2 1193.4,108.7 1200.1,109.2" fill="none" stroke="#7fffd4" stroke-width="2.8" shape-rendering="crispEdges"/><polyline points="1206.8,108.8 1213.5,110.6 1220.3,109.2 1227.1,110.7 1234.0,111.7 1240.9,113.8 1247.9,113.4 1254.9,114.7 1262.0,113.9 1269.1,113.7 1276.3,114.3 1283.5,117.1 1290.7,116.9 1298.0,116.2 1305.4,115.8 1312.8,117.9 1320.2,119.0 1327.7,118.8 1335.2,118.9 1342.8,120.8 1350.4,122.2 1358.1,120.5 1365.8,120.5 1373.5,122.1 1381.4,123.0 1389.2,124.4 1397.1,123.5" fill="none" stroke="none" marker-start="url(#m1)" marker-mid="url(#m1)" marker-end="url(#m1)"/><polyline points="726.9,76.3 731.7,73.1 733.9,73.0 741.7,74.4 744.7,78.2 747.8,78.9 751.2,78.2 766.4,75.3 768.5,79.3 770.7,75.6 775.1,76.2 777.4,81.0 782.2,80.9 800.2,83.1 802.9,82.0 805.8,78.9 808.6,83.0 814.5,79.4 820.5,84.4 823.6,80.8 829.9,79.9 833.1,81.1 839.7,80.6 853.4,82.2 857.0,82.2 860.5,82.9 867.9,83.8 879.2,84.2 883.1,88.2 887.0,89.2 891.0,89.7 895.0,89.9 903.1,90.3 907.3,90.2 911.5,86.7 920.0,92.1 924.3,92.6 937.6,92.8 946.7,90.4 965.4,95.4 989.9,92.6 994.9,94.1 1000.0,98.0 1005.1,97.7 1015.5,98.4 1026.0,100.0 1031.4,96.5 1036.8,97.1 1047.7,101.8 1053.3,101.4 1058.9,101.7 1087.5,105.0 1093.3,104.6 1099.2,105.6 1105.2,105.7 1111.2,102.4 1135.7,108.7 1180.3,107.5 1200.1,113.4" fill="none" stroke="none" marker-start="url(#wd)" marker-mid="url(#wd)" marker-end="url(#wd)"/><polyline points="722.2,77.3 724.6,72.1 729.6,73.2 736.3,78.2 738.9,77.0 754.7,75.4 758.4,74.6 762.3,79.0 764.3,79.0 772.9,76.0 779.8,81.7 784.6,77.5 787.1,81.3 789.6,76.9 792.2,82.1 794.8,82.4 797.5,77.4 811.5,79.9 817.4,83.1 826.7,83.9 836.4,81.5 843.0,85.4 846.4,85.3 849.9,81.9 864.2,83.5 871.6,84.4 875.4,84.9 899.0,89.9 915.7,91.3 928.7,92.2 933.1,89.2 942.1,93.4 951.3,90.7 956.0,94.9 960.7,91.5 970.2,92.3 975.1,91.0 980.0,92.7 984.9,96.3 1010.3,99.3 1020.7,98.9 1042.2,100.5 1064.5,98.5 1070.2,104.0 1075.9,103.8 1081.7,100.4 1117.2,102.6 1123.3,103.6 1129.5,107.5 1141.9,105.1 1148.2,109.4 1154.5,109.6 1160.9,110.9 1167.3,106.6 1173.8,107.9 1186.8,111.6 1193.4,112.8" fill="none" stroke="none" marker-start="url(#wu)" marker-mid="url(#wu)" marker-end="url(#wu)"/><polyline points="722.2,74.4 722.7,74.4 723.3,74.5 723.9,74.5 724.6,74.6 725.3,74.6 726.1,74.7 726.9,74.8 727.8,74.8 728.7,74.9 729.6,75.0 730.6,75.0 731.7,75.1 732.8,75.2 733.9,75.3 735.1,75.4 736.3,75.5 737.6,75.6 738.9,75.7 740.3,75.8 741.7,75.9 743.2,76.0 744.7,76.1 746.2,76.3 747.8,76.4 749.5,76.5 751.2,76.6 752.9,76.8 754.7,76.9 756.5,77.0 758.4,77.2 760.4,77.3 762.3,77.5 764.3,77.6 766.4,77.8 768.5,78.0 770.7,78.1 772.9,78.3 775.1,78.5 777.4,78.7 779.8,78.8 782.2,79.0 784.6,79.2 787.1,79.4 789.6,79.6 792.2,79.8 794.8,80.0 797.5,80.2 800.2,80.4 802.9,80.6 805.8,80.8 808.6,81.1 811.5,81.3 814.5,81.5 817.4,81.7 820.5,82.0 823.6,82.2 826.7,82.4 829.9,82.7 833.1,82.9 836.4,83.2 839.7,83.4 843.0,83.7 846.4,84.0 849.9,84.2 853.4,84.5 857.0,84.8 860.5,85.1 864.2,85.3 867.9,85.6 871.6,85.9 875.4,86.2 879.2,86.5 883.1,86.8 887.0,87.1 891.0,87.4 895.0,87.7 899.0,88.0 903.1,88.3 907.3,88.7 911.5,89.0 915.7,89.3 920.0,89.6 924.3,90.0 928.7,90.3 933.1,90.6 937.6,91.0 942.1,91.3 946.7,91.7 951.3,92.0 956.0,92.4 960.7,92.8 965.4,93.1 970.2,93.5 975.1,93.9 980.0,94.2 984.9,94.6 989.9,95.0 994.9,95.4 1000.0,95.8 1005.1,96.2 1010.3,96.6 1015.5,97.0 1020.7,97.4 1026.0,97.8 1031.4,98.2 1036.8,98.6 1042.2,99.0 1047.7,99.5 1053.3,99.9 1058.9,100.3 1064.5,100.8 1070.2,101.2 1075.9,101.6 1081.7,102.1 1087.5,102.5 1093.3,103.0 1099.2,103.4 1105.2,103.9 1111.2,104.4 1117.2,104.8 1123.3,105.3 1129.5,105.8 1135.7,106.2 1141.9,106.7 1148.2,107.2 1154.5,107.7 1160.9,108.2 1167.3,108.7 1173.8,109.2 1180.3,109.7 1186.8,110.2 1193.4,110.7 1200.1,111.2" fill="none" stroke="#f0ffff" stroke-width="2.8" shape-rendering="crispEdges"/><polyline points="1206.8,112.0 1213.5,111.3 1220.3,113.2 1227.1,113.2 1234.0,112.7 1240.9,115.8 1247.9,114.1 1254.9,114.3 1262.0,114.7 1269.1,117.0 1276.3,118.3 1283.5,118.6 1290.7,117.9 1298.0,118.1 1305.4,117.8 1312.8,120.4 1320.2,120.7 1327.7,120.6 1335.2,122.2 1342.8,122.1 1350.4,124.3 1358.1,124.2 1365.8,123.3 1373.5,126.0 1381.4,123.8 1389.2,126.0 1397.1,126.2" fill="none" stroke="none" marker-start="url(#m2)" marker-mid="url(#m2)" marker-end="url(#m2)"/><polyline points="722.2,78.4 729.6,75.6 731.7,74.1 741.7,75.4 744.7,80.6 751.2,76.6 758.4,81.1 764.3,81.8 766.4,81.8 768.5,78.0 770.7,77.9 779.8,82.1 782.2,83.6 784.6,83.9 789.6,79.9 792.2,78.7 794.8,84.2 808.6,81.0 811.5,85.5 814.5,85.3 817.4,81.9 820.5,85.0 823.6,81.3 826.7,86.6 829.9,87.1 833.1,82.4 836.4,83.0 839.7,86.9 846.4,83.2 853.4,88.3 867.9,89.9 871.6,90.3 875.4,86.7 883.1,86.5 887.0,86.2 891.0,91.3 915.7,88.7 920.0,93.7 928.7,93.4 942.1,95.3 946.7,91.9 951.3,96.6 970.2,92.7 975.1,93.7 980.0,93.5 1000.0,95.1 1026.0,100.8 1036.8,102.2 1047.7,98.9 1064.5,101.2 1075.9,101.3 1093.3,102.0 1099.2,106.9 1105.2,103.5 1111.2,104.6 1123.3,105.5 1129.5,110.1 1141.9,106.2 1154.5,107.4 1160.9,112.3 1180.3,109.5 1186.8,110.0 1206.8,113.6" fill="none" stroke="none" marker-start="url(#wd)" marker-mid="url(#wd)" marker-end="url(#wd)"/><polyline points="724.6,74.3 726.9,78.1 733.9,79.3 736.3,74.5 738.9,74.7 747.8,76.3 754.7,76.6 762.3,80.8 772.9,81.8 775.1,77.8 777.4,78.0 787.1,79.7 797.5,83.7 800.2,79.9 802.9,80.7 805.8,84.6 843.0,82.8 849.9,84.4 857.0,84.3 860.5,88.9 864.2,84.4 879.2,86.8 895.0,91.6 899.0,91.9 903.1,92.6 907.3,92.0 911.5,88.9 924.3,93.4 933.1,90.5 937.6,95.1 956.0,91.3 960.7,96.5 965.4,93.5 984.9,94.6 989.9,98.8 994.9,99.7 1005.1,99.8 1010.3,96.7 1015.5,101.2 1020.7,101.5 1031.4,101.8 1042.2,102.8 1053.3,103.2 1058.9,104.8 1070.2,105.5 1081.7,106.2 1087.5,102.0 1117.2,108.4 1135.7,105.8 1148.2,110.5 1167.3,108.3 1173.8,112.9 1193.4,110.1 1200.1,110.9" fill="none" stroke="none" marker-start="url(#wu)" marker-mid="url(#wu)" marker-end="url(#wu)"/><polyline points="722.2,76.2 722.7,76.2 723.3,76.3 723.9,76.3 724.6,76.4 725.3,76.4 726.1,76.5 726.9,76.6 727.8,76.6 728.7,76.7 729.6,76.8 730.6,76.8 731.7,76.9 732.8,77.0 733.9,77.1 735.1,77.2 736.3,77.3 737.6,77.4 738.9,77.5 740.3,77.6 741.7,77.7 743.2,77.8 744.7,77.9 746.2,78.1 747.8,78.2 749.5,78.3 751.2,78.4 752.9,78.6 754.7,78.7 756.5,78.8 758.4,79.0 760.4,79.1 762.3,79.3 764.3,79.4 766.4,79.6 768.5,79.8 770.7,79.9 772.9,80.1 775.1,80.3 777.4,80.5 779.8,80.6 782.2,80.8 784.6,81.0 787.1,81.2 789.6,81.4 792.2,81.6 794.8,81.8 797.5,82.0 800.2,82.2 802.9,82.4 805.8,82.6 808.6,82.9 811.5,83.1 814.5,83.3 817.4,83.5 820.5,83.8 823.6,84.0 826.7,84.2 829.9,84.5 833.1,84.7 836.4,85.0 839.7,85.2 843.0,85.5 846.4,85.8 849.9,86.0 853.4,86.3 857.0,86.6 860.5,86.9 864.2,87.1 867.9,87.4 871.6,87.7 875.4,88.0 879.2,88.3 883.1,88.6 887.0,88.9 891.0,89.2 895.0,89.5 899.0,89.8 903.1,90.1 907.3,90.5 911.5,90.8 915.7,91.1 920.0,91.4 924.3,91.8 928.7,92.1 933.1,92.4 937.6,92.8 942.1,93.1 946.7,93.5 951.3,93.8 956.0,94.2 960.7,94.6 965.4,94.9 970.2,95.3 975.1,95.7 980.0,96.0 984.9,96.4 989.9,96.8 994.9,97.2 1000.0,97.6 1005.1,98.0 1010.3,98.4 1015.5,98.8 1020.7,99.2 1026.0,99.6 1031.4,100.0 1036.8,100.4 1042.2,100.8 1047.7,101.3 1053.3,101.7 1058.9,102.1 1064.5,102.6 1070.2,103.0 1075.9,103.4 1081.7,103.9 1087.5,104.3 1093.3,104.8 1099.2,105.2 1105.2,105.7 1111.2,106.2 1117.2,106.6 1123.3,107.1 1129.5,107.6 1135.7,108.0 1141.9,108.5 1148.2,109.0 1154.5,109.5 1160.9,110.0 1167.3,110.5 1173.8,111.0 1180.3,111.5 1186.8,112.0 1193.4,112.5 1200.1,113.0 1206.8,113.5" fill="none" stroke="#ffe4c4" stroke-width="2.8" shape-rendering="crispEdges"/><polyline points="1213.5,115.2 1220.3,113.0 1227.1,116.2 1234.0,115.5 1240.9,116.4 1247.9,117.3 1254.9,118.4 1262.0,117.4 1269.1,118.1 1276.3,120.4 1283.5,118.1 1290.7,120.5 1298.0,121.1 1305.4,119.7 1312.8,122.1 1320.2,123.0 1327.7,124.3 1335.2,123.0 1342.8,125.7 1350.4,124.8 1358.1,125.3 1365.8,127.2 1373.5,125.0 1381.4,127.8 1389.2,128.2 1397.1,127.9" fill="none" stroke="none" marker-start="url(#m3)" marker-mid="url(#m3)" marker-end="url(#m3)"/><polyline points="722.2,80.1 729.6,81.1 731.7,80.8 736.3,81.4 738.9,80.7 744.7,81.4 747.8,82.4 772.9,80.4 775.1,83.8 782.2,84.4 784.6,80.9 792.2,81.5 800.2,86.1 805.8,86.3 808.6,87.1 811.5,83.1 814.5,83.2 820.5,84.2 833.1,89.2 836.4,85.1 839.7,84.7 843.0,88.7 846.4,85.6 857.0,91.1 867.9,87.5 875.4,88.0 879.2,87.2 903.1,93.3 920.0,90.4 933.1,91.6 937.6,91.7 946.7,93.2 951.3,97.3 956.0,93.9 960.7,97.7 965.4,94.2 970.2,94.6 1026.0,102.7 1031.4,98.9 1036.8,105.0 1047.7,101.1 1053.3,106.1 1064.5,105.7 1070.2,102.7 1075.9,107.2 1081.7,106.8 1093.3,107.7 1099.2,108.5 1117.2,105.9 1135.7,112.2 1148.2,108.5 1167.3,110.1 1193.4,115.6 1200.1,116.3" fill="none" stroke="none" marker-start="url(#wd)" marker-mid="url(#wd)" marker-end="url(#wd)"/><polyline points="724.6,76.3 726.9,81.1 733.9,81.0 741.7,76.8 751.2,78.4 754.7,82.8 758.4,78.1 762.3,83.5 764.3,79.3 766.4,84.0 768.5,83.5 770.7,80.1 777.4,84.0 779.8,80.7 787.1,85.4 789.6,81.4 794.8,82.1 797.5,80.8 802.9,82.5 817.4,83.4 823.6,88.4 826.7,88.0 829.9,83.5 849.9,84.8 853.4,86.5 860.5,85.8 864.2,86.2 871.6,90.7 883.1,92.5 887.0,93.1 891.0,88.9 895.0,92.8 899.0,89.7 907.3,89.6 911.5,90.5 915.7,90.2 924.3,92.1 928.7,96.5 942.1,97.5 975.1,95.4 980.0,96.1 984.9,99.7 989.9,96.8 994.9,100.7 1000.0,97.6 1005.1,97.9 1010.3,101.5 1015.5,98.2 1020.7,98.7 1042.2,99.8 1058.9,101.2 1087.5,107.5 1105.2,106.0 1111.2,105.8 1123.3,106.6 1129.5,106.5 1141.9,108.7 1154.5,110.0 1160.9,114.3 1173.8,114.4 1180.3,114.5 1186.8,116.4" fill="none" stroke="none" marker-start="url(#wu)" marker-mid="url(#wu)" marker-end="url(#wu)"/><polyline points="722.2,77.9 722.7,77.9 723.3,78.0 723.9,78.0 724.6,78.1 725.3,78.1 726.1,78.2 726.9,78.3 727.8,78.3 728.7,78.4 729.6,78.5 730.6,78.5 731.7,78.6 732.8,78.7 733.9,78.8 735.1,78.9 736.3,79.0 737.6,79.1 738.9,79.2 740.3,79.3 741.7,79.4 743.2,79.5 744.7,79.6 746.2,79.8 747.8,79.9 749.5,80.0 751.2,80.1 752.9,80.3 754.7,80.4 756.5,80.5 758.4,80.7 760.4,80.8 762.3,81.0 764.3,81.1 766.4,81.3 768.5,81.5 770.7,81.6 772.9,81.8 775.1,82.0 777.4,82.2 779.8,82.3 782.2,82.5 784.6,82.7 787.1,82.9 789.6,83.1 792.2,83.3 794.8,83.5 797.5,83.7 800.2,83.9 802.9,84.1 805.8,84.3 808.6,84.6 811.5,84.8 814.5,85.0 817.4,85.2 820.5,85.5 823.6,85.7 826.7,85.9 829.9,86.2 833.1,86.4 836.4,86.7 839.7,86.9 843.0,87.2 846.4,87.5 849.9,87.7 853.4,88.0 857.0,88.3 860.5,88.6 864.2,88.8 867.9,89.1 871.6,89.4 875.4,89.7 879.2,90.0 883.1,90.3 887.0,90.6 891.0,90.9 895.0,91.2 899.0,91.5 903.1,91.8 907.3,92.2 911.5,92.5 915.7,92.8 920.0,93.1 924.3,93.5 928.7,93.8 933.1,94.1 937.6,94.5 942.1,94.8 946.7,95.2 951.3,95.5 956.0,95.9 960.7,96.3 965.4,96.6 970.2,97.0 975.1,97.4 980.0,97.7 984.9,98.1 989.9,98.5 994.9,98.9 1000.0,99.3 1005.1,99.7 1010.3,100.1 1015.5,100.5 1020.7,100.9 1026.0,101.3 1031.4,101.7 1036.8,102.1 1042.2,102.5 1047.7,103.0 1053.3,103.4 1058.9,103.8 1064.5,104.3 1070.2,104.7 1075.9,105.1 1081.7,105.6 1087.5,106.0 1093.3,106.5 1099.2,106.9 1105.2,107.4 1111.2,107.9 1117.2,108.3 1123.3,108.8 1129.5,109.3 1135.7,109.7 1141.9,110.2 1148.2,110.7 1154.5,111.2 1160.9,111.7 1167.3,112.2 1173.8,112.7 1180.3,113.2 1186.8,113.7 1193.4,114.2 1200.1,114.7" fill="none" stroke="#808000" stroke-width="2.8" shape-rendering="crispEdges"/><polyline points="1206.8,115.4 1213.5,117.3 1220.3,114.8 1227.1,117.5 1234.0,117.6 1240.9,119.0 1247.9,118.0 1254.9,120.4 1262.0,121.0 1269.1,118.7 1276.3,120.2 1283.5,120.4 1290.7,122.9 1298.0,123.7 1305.4,123.8 1312.8,124.7 1320.2,124.4 1327.7,126.0 1335.2,124.6 1342.8,124.6 1350.4,127.2 1358.1,126.9 1365.8,126.2 1373.5,129.3 1381.4,127.7 1389.2,128.7 1397.1,128.8" fill="none" stroke="none" marker-start="url(#m4)" marker-mid="url(#m4)" marker-end="url(#m4)"/><polyline points="724.6,78.0 729.6,78.0 733.9,83.0 744.7,79.4 751.2,84.0 758.4,84.9 764.3,84.5 768.5,80.2 770.7,82.0 772.9,85.6 775.1,85.3 777.4,85.9 784.6,85.6 787.1,86.5 789.6,82.3 792.2,83.5 794.8,87.1 800.2,87.5 802.9,88.2 805.8,88.3 808.6,84.7 811.5,88.2 814.5,84.0 817.4,85.4 820.5,89.4 829.9,85.7 836.4,86.0 843.0,86.4 846.4,86.5 849.9,91.7 857.0,92.5 864.2,88.9 875.4,93.5 879.2,90.1 883.1,90.6 887.0,90.7 891.0,95.1 895.0,95.4 903.1,94.9 907.3,91.9 911.5,92.8 924.3,97.3 928.7,94.1 933.1,97.9 946.7,95.3 960.7,100.7 980.0,97.4 989.9,101.3 1005.1,100.1 1015.5,103.5 1026.0,100.1 1031.4,105.9 1042.2,105.7 1047.7,106.4 1058.9,103.6 1075.9,108.9 1081.7,105.0 1093.3,106.6 1099.2,110.1 1117.2,112.0 1141.9,114.0 1167.3,111.4 1186.8,116.5 1200.1,118.7" fill="none" stroke="none" marker-start="url(#wd)" marker-mid="url(#wd)" marker-end="url(#wd)"/><polyline points="722.2,81.0 726.9,81.8 731.7,81.7 736.3,82.2 738.9,79.6 741.7,79.1 747.8,83.9 754.7,83.8 762.3,81.2 766.4,80.1 779.8,86.0 782.2,86.0 797.5,82.6 823.6,89.6 826.7,90.1 833.1,86.1 839.7,86.7 853.4,86.8 860.5,87.8 867.9,93.4 871.6,88.8 899.0,90.8 915.7,91.7 920.0,92.9 937.6,94.1 942.1,94.8 951.3,95.4 956.0,99.2 965.4,101.1 970.2,97.0 975.1,101.3 984.9,102.4 994.9,99.1 1000.0,99.1 1010.3,103.6 1020.7,104.3 1036.8,105.9 1053.3,106.3 1064.5,104.2 1070.2,104.9 1087.5,110.2 1105.2,110.8 1111.2,107.7 1123.3,107.7 1129.5,108.1 1135.7,113.5 1148.2,114.4 1154.5,115.0 1160.9,111.9 1173.8,112.1 1180.3,117.2 1193.4,114.1 1206.8,117.4" fill="none" stroke="none" marker-start="url(#wu)" marker-mid="url(#wu)" marker-end="url(#wu)"/><polyline points="722.2,79.5 722.7,79.5 723.3,79.6 723.9,79.6 724.6,79.7 725.3,79.7 726.1,79.8 726.9,79.9 727.8,79.9 728.7,80.0 729.6,80.1 730.6,80.1 731.7,80.2 732.8,80.3 733.9,80.4 735.1,80.5 736.3,80.6 737.6,80.7 738.9,80.8 740.3,80.9 741.7,81.0 743.2,81.1 744.7,81.2 746.2,81.4 747.8,81.5 749.5,81.6 751.2,81.7 752.9,81.9 754.7,82.0 756.5,82.1 758.4,82.3 760.4,82.4 762.3,82.6 764.3,82.7 766.4,82.9 768.5,83.1 770.7,83.2 772.9,83.4 775.1,83.6 777.4,83.8 779.8,83.9 782.2,84.1 784.6,84.3 787.1,84.5 789.6,84.7 792.2,84.9 794.8,85.1 797.5,85.3 800.2,85.5 802.9,85.7 805.8,85.9 808.6,86.2 811.5,86.4 814.5,86.6 817.4,86.8 820.5,87.1 823.6,87.3 826.7,87.5 829.9,87.8 833.1,88.0 836.4,88.3 839.7,88.5 843.0,88.8 846.4,89.1 849.9,89.3 853.4,89.6 857.0,89.9 860.5,90.2 864.2,90.4 867.9,90.7 871.6,91.0 875.4,91.3 879.2,91.6 883.1,91.9 887.0,92.2 891.0,92.5 895.0,92.8 899.0,93.1 903.1,93.4 907.3,93.8 911.5,94.1 915.7,94.4 920.0,94.7 924.3,95.1 928.7,95.4 933.1,95.7 937.6,96.1 942.1,96.4 946.7,96.8 951.3,97.1 956.0,97.5 960.7,97.9 965.4,98.2 970.2,98.6 975.1,99.0 980.0,99.3 984.9,99.7 989.9,100.1 994.9,100.5 1000.0,100.9 1005.1,101.3 1010.3,101.7 1015.5,102.1 1020.7,102.5 1026.0,102.9 1031.4,103.3 1036.8,103.7 1042.2,104.1 1047.7,104.6 1053.3,105.0 1058.9,105.4 1064.5,105.9 1070.2,106.3 1075.9,106.7 1081.7,107.2 1087.5,107.6 1093.3,108.1 1099.2,108.5 1105.2,109.0 1111.2,109.5 1117.2,109.9 1123.3,110.4 1129.5,110.9 1135.7,111.3 1141.9,111.8 1148.2,112.3 1154.5,112.8 1160.9,113.3 1167.3,113.8 1173.8,114.3 1180.3,114.8 1186.8,115.3 1193.4,115.8 1200.1,116.3 1206.8,116.8" fill="none" stroke="#0000ff" stroke-width="2.8" shape-rendering="crispEdges"/><polyline points="1213.5,118.2 1220.3,117.0 1227.1,117.4 1234.0,120.2 1240.9,118.1 1247.9,121.4 1254.9,121.6 1262.0,122.0 1269.1,120.7 1276.3,123.0 1283.5,121.5 1290.7,122.8 1298.0,125.0 1305.4,124.3 1312.8,124.7 1320.2,126.9 1327.7,126.2 1335.2,127.3 1342.8,127.9 1350.4,129.3 1358.1,130.1 1365.8,128.3 1373.5,129.5 1381.4,131.5 1389.2,131.8 1397.1,133.1" fill="none" stroke="none" marker-start="url(#m5)" marker-mid="url(#m5)" marker-end="url(#m5)"/><polyline points="722.2,84.6 724.6,85.0 726.9,86.0 733.9,86.0 736.3,85.8 747.8,83.8 751.2,87.8 754.7,83.2 758.4,87.3 762.3,84.1 768.5,84.1 770.7,85.2 772.9,85.2 775.1,89.5 787.1,85.7 792.2,90.9 811.5,87.8 814.5,92.8 817.4,88.3 826.7,89.2 843.0,94.9 853.4,91.3 857.0,91.6 864.2,91.6 867.9,92.0 875.4,92.8 879.2,93.4 883.1,97.8 891.0,94.9 895.0,94.7 907.3,95.6 920.0,96.3 924.3,96.7 942.1,98.6 946.7,103.0 965.4,100.8 970.2,100.8 980.0,100.5 984.9,104.9 994.9,101.7 1000.0,103.2 1015.5,108.0 1020.7,109.1 1026.0,105.5 1031.4,105.1 1036.8,110.2 1047.7,111.0 1064.5,107.8 1075.9,108.3 1081.7,109.4 1093.3,114.1 1105.2,114.0 1111.2,115.0 1117.2,112.1 1129.5,113.0 1141.9,117.4 1154.5,113.8 1160.9,114.4 1167.3,119.8 1173.8,116.3 1180.3,121.1 1186.8,116.4 1193.4,117.2 1206.8,120.1" fill="none" stroke="none" marker-start="url(#wd)" marker-mid="url(#wd)" marker-end="url(#wd)"/><polyline points="729.6,86.5 731.7,82.7 738.9,86.2 741.7,87.5 744.7,87.5 764.3,89.3 766.4,84.8 777.4,88.9 779.8,89.8 782.2,90.8 784.6,85.2 789.6,86.1 794.8,91.1 797.5,91.9 800.2,91.6 802.9,87.8 805.8,91.8 808.6,87.3 820.5,93.0 823.6,92.9 829.9,93.2 833.1,90.3 836.4,90.0 839.7,90.8 846.4,90.8 849.9,95.5 860.5,91.5 871.6,92.1 887.0,93.8 899.0,95.1 903.1,94.8 911.5,95.5 915.7,100.9 928.7,100.7 933.1,102.1 937.6,97.3 951.3,98.4 956.0,102.7 960.7,104.2 975.1,100.4 989.9,101.9 1005.1,107.8 1010.3,108.1 1042.2,106.6 1053.3,106.4 1058.9,111.1 1070.2,108.4 1087.5,113.9 1099.2,115.1 1123.3,111.9 1135.7,116.4 1148.2,113.2 1200.1,122.9" fill="none" stroke="none" marker-start="url(#wu)" marker-mid="url(#wu)" marker-end="url(#wu)"/><polyline points="722.2,83.3 722.7,83.3 723.3,83.4 723.9,83.4 724.6,83.5 725.3,83.5 726.1,83.6 726.9,83.7 727.8,83.7 728.7,83.8 729.6,83.9 730.6,83.9 731.7,84.0 732.8,84.1 733.9,84.2 735.1,84.3 736.3,84.4 737.6,84.5 738.9,84.6 740.3,84.7 741.7,84.8 743.2,84.9 744.7,85.0 746.2,85.2 747.8,85.3 749.5,85.4 751.2,85.5 752.9,85.7 754.7,85.8 756.5,85.9 758.4,86.1 760.4,86.2 762.3,86.4 764.3,86.5 766.4,86.7 768.5,86.9 770.7,87.0 772.9,87.2 775.1,87.4 777.4,87.6 779.8,87.7 782.2,87.9 784.6,88.1 787.1,88.3 789.6,88.5 792.2,88.7 794.8,88.9 797.5,89.1 800.2,89.3 802.9,89.5 805.8,89.7 808.6,90.0 811.5,90.2 814.5,90.4 817.4,90.6 820.5,90.9 823.6,91.1 826.7,91.3 829.9,91.6 833.1,91.8 836.4,92.1 839.7,92.3 843.0,92.6 846.4,92.9 849.9,93.1 853.4,93.4 857.0,93.7 860.5,94.0 864.2,94.2 867.9,94.5 871.6,94.8 875.4,95.1 879.2,95.4 883.1,95.7 887.0,96.0 891.0,96.3 895.0,96.6 899.0,96.9 903.1,97.2 907.3,97.6 911.5,97.9 915.7,98.2 920.0,98.5 924.3,98.9 928.7,99.2 933.1,99.5 937.6,99.9 942.1,100.2 946.7,100.6 951.3,100.9 956.0,101.3 960.7,101.7 965.4,102.0 970.2,102.4 975.1,102.8 980.0,103.1 984.9,103.5 989.9,103.9 994.9,104.3 1000.0,104.7 1005.1,105.1 1010.3,105.5 1015.5,105.9 1020.7,106.3 1026.0,106.7 1031.4,107.1 1036.8,107.5 1042.2,107.9 1047.7,108.4 1053.3,108.8 1058.9,109.2 1064.5,109.7 1070.2,110.1 1075.9,110.5 1081.7,111.0 1087.5,111.4 1093.3,111.9 1099.2,112.3 1105.2,112.8 1111.2,113.3 1117.2,113.7 1123.3,114.2 1129.5,114.7 1135.7,115.1 1141.9,115.6 1148.2,116.1 1154.5,116.6 1160.9,117.1 1167.3,117.6 1173.8,118.1 1180.3,118.6 1186.8,119.1 1193.4,119.6 1200.1,120.1 1206.8,120.6" fill="none" stroke="#8a2be2" stroke-width="2.8" shape-rendering="crispEdges"/><polyline points="1213.5,120.7 1220.3,122.8 1227.1,121.4 1234.0,124.0 1240.9,124.0 1247.9,123.3 1254.9,125.1 1262.0,125.5 1269.1,126.8 1276.3,127.0 1283.5,126.7 1290.7,128.5 1298.0,128.8 1305.4,130.0 1312.8,127.9 1320.2,128.6 1327.7,131.4 1335.2,131.3 1342.8,131.1 1350.4,131.7 1358.1,133.5 1365.8,134.6 1373.5,134.1 1381.4,133.3 1389.2,135.8 1397.1,134.9" fill="none" stroke="none" marker-start="url(#m6)" marker-mid="url(#m6)" marker-end="url(#m6)"/><polyline points="729.6,86.4 736.3,89.8 738.9,91.2 744.7,87.4 747.8,86.4 758.4,88.4 764.3,91.7 766.4,88.5 768.5,92.0 770.7,93.1 777.4,88.8 782.2,89.5 794.8,95.5 797.5,94.1 800.2,90.7 811.5,92.2 814.5,91.6 817.4,92.0 829.9,93.3 843.0,98.5 849.9,98.8 857.0,100.3 860.5,100.2 871.6,101.0 879.2,96.9 891.0,98.2 899.0,102.8 903.1,103.0 907.3,99.3 915.7,103.6 924.3,100.8 937.6,100.9 946.7,107.0 956.0,107.3 965.4,107.9 970.2,103.6 975.1,104.2 984.9,108.8 989.9,106.0 1005.1,106.5 1015.5,112.0 1036.8,109.4 1042.2,114.2 1053.3,111.4 1064.5,111.2 1070.2,116.5 1087.5,116.5 1099.2,118.9 1117.2,120.2 1129.5,120.7 1141.9,121.3 1154.5,123.2 1167.3,123.2 1173.8,124.5 1200.1,122.1" fill="none" stroke="none" marker-start="url(#wd)" marker-mid="url(#wd)" marker-end="url(#wd)"/><polyline points="722.2,88.7 724.6,85.9 726.9,88.8 731.7,89.4 733.9,90.3 741.7,90.0 751.2,90.6 754.7,86.7 762.3,91.6 772.9,93.7 775.1,89.0 779.8,90.3 784.6,89.5 787.1,89.2 789.6,93.6 792.2,91.1 802.9,91.0 805.8,91.4 808.6,96.6 820.5,97.1 823.6,93.3 826.7,92.3 833.1,98.2 836.4,97.5 839.7,98.5 846.4,99.0 853.4,99.3 864.2,100.6 867.9,96.7 875.4,101.8 883.1,96.9 887.0,97.0 895.0,102.8 911.5,103.7 920.0,104.1 928.7,105.2 933.1,104.7 942.1,105.7 951.3,106.8 960.7,104.2 980.0,104.3 994.9,110.7 1000.0,109.9 1010.3,110.7 1020.7,112.1 1026.0,108.8 1031.4,113.8 1047.7,109.7 1058.9,111.2 1075.9,115.6 1081.7,113.6 1093.3,114.0 1105.2,118.2 1111.2,118.4 1123.3,116.6 1135.7,121.7 1148.2,117.5 1160.9,123.2 1180.3,119.6 1186.8,120.0 1193.4,124.7 1206.8,123.0" fill="none" stroke="none" marker-start="url(#wu)" marker-mid="url(#wu)" marker-end="url(#wu)"/><polyline points="722.2,87.1 722.7,87.1 723.3,87.2 723.9,87.2 724.6,87.3 725.3,87.3 726.1,87.4 726.9,87.5 727.8,87.5 728.7,87.6 729.6,87.7 730.6,87.7 731.7,87.8 732.8,87.9 733.9,88.0 735.1,88.1 736.3,88.2 737.6,88.3 738.9,88.4 740.3,88.5 741.7,88.6 743.2,88.7 744.7,88.8 746.2,89.0 747.8,89.1 749.5,89.2 751.2,89.3 752.9,89.5 754.7,89.6 756.5,89.7 758.4,89.9 760.4,90.0 762.3,90.2 764.3,90.3 766.4,90.5 768.5,90.7 770.7,90.8 772.9,91.0 775.1,91.2 777.4,91.4 779.8,91.5 782.2,91.7 784.6,91.9 787.1,92.1 789.6,92.3 792.2,92.5 794.8,92.7 797.5,92.9 800.2,93.1 802.9,93.3 805.8,93.5 808.6,93.8 811.5,94.0 814.5,94.2 817.4,94.4 820.5,94.7 823.6,94.9 826.7,95.1 829.9,95.4 833.1,95.6 836.4,95.9 839.7,96.1 843.0,96.4 846.4,96.7 849.9,96.9 853.4,97.2 857.0,97.5 860.5,97.8 864.2,98.0 867.9,98.3 871.6,98.6 875.4,98.9 879.2,99.2 883.1,99.5 887.0,99.8 891.0,100.1 895.0,100.4 899.0,100.7 903.1,101.0 907.3,101.4 911.5,101.7 915.7,102.0 920.0,102.3 924.3,102.7 928.7,103.0 933.1,103.3 937.6,103.7 942.1,104.0 946.7,104.4 951.3,104.7 956.0,105.1 960.7,105.5 965.4,105.8 970.2,106.2 975.1,106.6 980.0,106.9 984.9,107.3 989.9,107.7 994.9,108.1 1000.0,108.5 1005.1,108.9 1010.3,109.3 1015.5,109.7 1020.7,110.1 1026.0,110.5 1031.4,110.9 1036.8,111.3 1042.2,111.7 1047.7,112.2 1053.3,112.6 1058.9,113.0 1064.5,113.5 1070.2,113.9 1075.9,114.3 1081.7,114.8 1087.5,115.2 1093.3,115.7 1099.2,116.1 1105.2,116.6 1111.2,117.1 1117.2,117.5 1123.3,118.0 1129.5,118.5 1135.7,118.9 1141.9,119.4 1148.2,119.9 1154.5,120.4 1160.9,120.9 1167.3,121.4 1173.8,121.9 1180.3,122.4 1186.8,122.9 1193.4,123.4 1200.1,123.9 1206.8,124.4" fill="none" stroke="#a52a2a" stroke-width="2.8" shape-rendering="crispEdges"/><polyline points="1213.5,125.8 1220.3,125.1 1227.1,126.1 1234.0,126.6 1240.9,128.4 1247.9,128.5 1254.9,126.7 1262.0,129.1 1269.1,129.3 1276.3,129.8 1283.5,131.6 1290.7,130.8 1298.0,131.6 1305.4,133.5 1312.8,132.6 1320.2,133.4 1327.7,134.1 1335.2,135.7 1342.8,135.8 1350.4,136.6 1358.1,136.1 1365.8,135.6 1373.5,138.3 1381.4,138.5 1389.2,139.8 1397.1,140.4" fill="none" stroke="none" marker-start="url(#m7)" marker-mid="url(#m7)" marker-end="url(#m7)"/><polyline points="722.2,88.4 726.9,91.5 741.7,89.6 744.7,94.2 754.7,90.5 775.1,91.9 782.2,91.6 787.1,92.2 789.6,93.7 792.2,93.3 800.2,94.4 805.8,98.2 808.6,94.9 811.5,95.4 820.5,95.2 823.6,96.4 829.9,99.5 836.4,97.5 843.0,97.9 846.4,98.0 853.4,102.5 867.9,102.4 871.6,104.1 875.4,100.2 883.1,103.6 895.0,104.6 899.0,106.3 903.1,106.4 907.3,102.2 911.5,106.9 920.0,107.6 924.3,103.9 937.6,104.6 951.3,110.4 956.0,105.6 960.7,110.6 965.4,111.2 970.2,107.3 994.9,109.1 1000.0,113.5 1005.1,113.5 1010.3,113.6 1020.7,111.5 1031.4,111.8 1036.8,117.0 1042.2,116.0 1053.3,117.1 1058.9,118.6 1064.5,113.6 1070.2,114.8 1075.9,115.9 1081.7,116.2 1087.5,116.1 1093.3,120.9 1099.2,116.1 1111.2,122.2 1117.2,118.2 1123.3,122.7 1141.9,119.5 1148.2,124.7 1180.3,126.4 1186.8,127.7 1193.4,123.4 1206.8,127.5" fill="none" stroke="none" marker-start="url(#wd)" marker-mid="url(#wd)" marker-end="url(#wd)"/><polyline points="724.6,91.5 729.6,93.1 731.7,92.3 733.9,92.1 736.3,92.5 738.9,89.7 747.8,89.3 751.2,90.9 758.4,90.9 762.3,94.7 764.3,94.5 766.4,91.9 768.5,95.1 770.7,91.9 772.9,92.3 777.4,97.0 779.8,96.2 784.6,92.3 794.8,93.1 797.5,94.3 802.9,99.0 814.5,95.4 817.4,94.6 826.7,95.4 833.1,100.6 839.7,101.5 849.9,98.3 857.0,98.7 860.5,98.2 864.2,97.9 879.2,99.4 887.0,104.8 891.0,105.2 915.7,103.5 928.7,108.0 933.1,108.3 942.1,109.4 946.7,109.8 975.1,106.6 980.0,111.7 984.9,112.1 989.9,112.6 1015.5,114.4 1026.0,111.5 1047.7,117.7 1105.2,120.8 1129.5,123.1 1135.7,124.5 1154.5,121.9 1160.9,121.5 1167.3,125.9 1173.8,122.2 1200.1,128.1" fill="none" stroke="none" marker-start="url(#wu)" marker-mid="url(#wu)" marker-end="url(#wu)"/><polyline points="722.2,89.9 722.7,89.9 723.3,90.0 723.9,90.0 724.6,90.1 725.3,90.1 726.1,90.2 726.9,90.3 727.8,90.3 728.7,90.4 729.6,90.5 730.6,90.5 731.7,90.6 732.8,90.7 733.9,90.8 735.1,90.9 736.3,91.0 737.6,91.1 738.9,91.2 740.3,91.3 741.7,91.4 743.2,91.5 744.7,91.6 746.2,91.8 747.8,91.9 749.5,92.0 751.2,92.1 752.9,92.3 754.7,92.4 756.5,92.5 758.4,92.7 760.4,92.8 762.3,93.0 764.3,93.1 766.4,93.3 768.5,93.5 770.7,93.6 772.9,93.8 775.1,94.0 777.4,94.2 779.8,94.3 782.2,94.5 784.6,94.7 787.1,94.9 789.6,95.1 792.2,95.3 794.8,95.5 797.5,95.7 800.2,95.9 802.9,96.1 805.8,96.3 808.6,96.6 811.5,96.8 814.5,97.0 817.4,97.2 820.5,97.5 823.6,97.7 826.7,97.9 829.9,98.2 833.1,98.4 836.4,98.7 839.7,98.9 843.0,99.2 846.4,99.5 849.9,99.7 853.4,100.0 857.0,100.3 860.5,100.6 864.2,100.8 867.9,101.1 871.6,101.4 875.4,101.7 879.2,102.0 883.1,102.3 887.0,102.6 891.0,102.9 895.0,103.2 899.0,103.5 903.1,103.8 907.3,104.2 911.5,104.5 915.7,104.8 920.0,105.1 924.3,105.5 928.7,105.8 933.1,106.1 937.6,106.5 942.1,106.8 946.7,107.2 951.3,107.5 956.0,107.9 960.7,108.3 965.4,108.6 970.2,109.0 975.1,109.4 980.0,109.7 984.9,110.1 989.9,110.5 994.9,110.9 1000.0,111.3 1005.1,111.7 1010.3,112.1 1015.5,112.5 1020.7,112.9 1026.0,113.3 1031.4,113.7 1036.8,114.1 1042.2,114.5 1047.7,115.0 1053.3,115.4 1058.9,115.8 1064.5,116.3 1070.2,116.7 1075.9,117.1 1081.7,117.6 1087.5,118.0 1093.3,118.5 1099.2,118.9 1105.2,119.4 1111.2,119.9 1117.2,120.3 1123.3,120.8 1129.5,121.3 1135.7,121.7 1141.9,122.2 1148.2,122.7 1154.5,123.2 1160.9,123.7 1167.3,124.2 1173.8,124.7 1180.3,125.2 1186.8,125.7 1193.4,126.2 1200.1,126.7 1206.8,127.2" fill="none" stroke="#ff0000" stroke-width="2.8" shape-rendering="crispEdges"/><polyline points="1213.5,128.0 1220.3,126.8 1227.1,128.5 1234.0,130.2 1240.9,130.4 1247.9,129.8 1254.9,131.9 1262.0,131.0 1269.1,132.3 1276.3,132.5 1283.5,134.9 1290.7,134.4 1298.0,135.5 1305.4,135.7 1312.8,135.3 1320.2,137.8 1327.7,137.5 1335.2,138.1 1342.8,137.4 1350.4,137.6 1358.1,139.5 1365.8,141.0 1373.5,141.5 1381.4,140.7 1389.2,140.6 1397.1,142.5" fill="none" stroke="none" marker-start="url(#m8)" marker-mid="url(#m8)" marker-end="url(#m8)"/><polyline points="722.2,93.6 724.6,90.9 726.9,95.2 736.3,94.7 744.7,95.3 747.8,92.3 751.2,92.3 754.7,92.0 758.4,97.3 762.3,93.8 782.2,98.0 784.6,95.0 789.6,94.4 802.9,95.4 808.6,101.2 814.5,100.5 820.5,100.8 826.7,98.5 833.1,102.8 836.4,102.8 839.7,99.8 853.4,99.3 860.5,105.1 864.2,100.3 867.9,101.3 883.1,101.6 891.0,102.4 895.0,104.1 911.5,104.6 920.0,104.7 928.7,109.5 937.6,111.1 951.3,107.4 965.4,109.4 980.0,109.4 1010.3,111.9 1020.7,117.3 1031.4,114.5 1036.8,117.9 1070.2,121.7 1135.7,122.1 1141.9,122.8 1160.9,127.4 1167.3,125.0 1173.8,125.0 1180.3,130.0 1186.8,129.0 1200.1,126.7" fill="none" stroke="none" marker-start="url(#wd)" marker-mid="url(#wd)" marker-end="url(#wd)"/><polyline points="729.6,91.0 731.7,94.6 733.9,95.3 738.9,95.6 741.7,95.7 764.3,93.3 766.4,97.6 768.5,93.4 770.7,98.6 772.9,97.3 775.1,93.7 777.4,99.0 779.8,98.9 787.1,99.0 792.2,99.4 794.8,94.9 797.5,99.9 800.2,96.2 805.8,96.0 811.5,100.3 817.4,97.9 823.6,97.8 829.9,97.6 843.0,98.6 846.4,104.3 849.9,99.6 857.0,104.4 871.6,101.1 875.4,106.2 879.2,106.3 887.0,106.0 899.0,103.3 903.1,104.3 907.3,103.7 915.7,108.5 924.3,104.8 933.1,106.2 942.1,106.4 946.7,107.8 956.0,111.4 960.7,113.1 970.2,109.0 975.1,109.4 984.9,114.2 989.9,110.5 994.9,111.8 1000.0,114.9 1005.1,111.4 1015.5,112.5 1026.0,113.0 1042.2,118.1 1047.7,119.6 1053.3,116.2 1058.9,116.5 1064.5,116.3 1075.9,116.5 1081.7,116.9 1087.5,117.7 1093.3,118.2 1099.2,118.4 1105.2,124.1 1111.2,120.4 1117.2,124.4 1123.3,121.3 1129.5,126.0 1148.2,121.9 1154.5,127.8 1193.4,125.6" fill="none" stroke="none" marker-start="url(#wu)" marker-mid="url(#wu)" marker-end="url(#wu)"/><polyline points="722.2,92.0 722.7,92.0 723.3,92.1 723.9,92.1 724.6,92.2 725.3,92.2 726.1,92.3 726.9,92.4 727.8,92.4 728.7,92.5 729.6,92.6 730.6,92.6 731.7,92.7 732.8,92.8 733.9,92.9 735.1,93.0 736.3,93.1 737.6,93.2 738.9,93.3 740.3,93.4 741.7,93.5 743.2,93.6 744.7,93.7 746.2,93.9 747.8,94.0 749.5,94.1 751.2,94.2 752.9,94.4 754.7,94.5 756.5,94.6 758.4,94.8 760.4,94.9 762.3,95.1 764.3,95.2 766.4,95.4 768.5,95.6 770.7,95.7 772.9,95.9 775.1,96.1 777.4,96.3 779.8,96.4 782.2,96.6 784.6,96.8 787.1,97.0 789.6,97.2 792.2,97.4 794.8,97.6 797.5,97.8 800.2,98.0 802.9,98.2 805.8,98.4 808.6,98.7 811.5,98.9 814.5,99.1 817.4,99.3 820.5,99.6 823.6,99.8 826.7,100.0 829.9,100.3 833.1,100.5 836.4,100.8 839.7,101.0 843.0,101.3 846.4,101.6 849.9,101.8 853.4,102.1 857.0,102.4 860.5,102.7 864.2,102.9 867.9,103.2 871.6,103.5 875.4,103.8 879.2,104.1 883.1,104.4 887.0,104.7 891.0,105.0 895.0,105.3 899.0,105.6 903.1,105.9 907.3,106.3 911.5,106.6 915.7,106.9 920.0,107.2 924.3,107.6 928.7,107.9 933.1,108.2 937.6,108.6 942.1,108.9 946.7,109.3 951.3,109.6 956.0,110.0 960.7,110.4 965.4,110.7 970.2,111.1 975.1,111.5 980.0,111.8 984.9,112.2 989.9,112.6 994.9,113.0 1000.0,113.4 1005.1,113.8 1010.3,114.2 1015.5,114.6 1020.7,115.0 1026.0,115.4 1031.4,115.8 1036.8,116.2 1042.2,116.6 1047.7,117.1 1053.3,117.5 1058.9,117.9 1064.5,118.4 1070.2,118.8 1075.9,119.2 1081.7,119.7 1087.5,120.1 1093.3,120.6 1099.2,121.0 1105.2,121.5 1111.2,122.0 1117.2,122.4 1123.3,122.9 1129.5,123.4 1135.7,123.8 1141.9,124.3 1148.2,124.8 1154.5,125.3 1160.9,125.8 1167.3,126.3 1173.8,126.8 1180.3,127.3 1186.8,127.8 1193.4,128.3 1200.1,128.8" fill="none" stroke="#deb887" stroke-width="2.8" shape-rendering="crispEdges"/><polyline points="1206.8,128.1 1213.5,130.9 1220.3,129.8 1227.1,131.4 1234.0,131.1 1240.9,132.2 1247.9,134.1 1254.9,132.1 1262.0,133.8 1269.1,134.8 1276.3,135.0 1283.5,136.9 1290.7,135.8 1298.0,138.0 1305.4,137.8 1312.8,139.3 1320.2,137.1 1327.7,138.1 1335.2,138.9 1342.8,141.5 1350.4,139.3 1358.1,140.7 1365.8,142.8 1373.5,144.3 1381.4,142.3 1389.2,143.8 1397.1,145.2" fill="none" stroke="none" marker-start="url(#m9)" marker-mid="url(#m9)" marker-end="url(#m9)"/><polyline points="722.2,93.7 726.9,94.6 733.9,94.4 738.9,94.7 741.7,95.3 754.7,100.1 758.4,96.3 764.3,100.7 766.4,100.5 768.5,97.6 782.2,101.9 792.2,99.0 794.8,99.9 802.9,104.7 805.8,99.6 808.6,105.3 817.4,100.3 826.7,105.2 829.9,106.7 839.7,107.6 849.9,103.0 853.4,108.2 871.6,108.9 883.1,110.5 903.1,107.6 907.3,112.9 920.0,113.5 942.1,115.0 956.0,115.6 960.7,115.9 965.4,116.9 975.1,112.4 980.0,118.3 994.9,119.1 1000.0,114.6 1015.5,116.2 1026.0,120.4 1053.3,120.1 1064.5,119.3 1081.7,125.2 1105.2,126.6 1111.2,123.4 1117.2,127.6 1129.5,128.6 1135.7,125.2 1141.9,130.0 1148.2,127.0 1160.9,128.3 1167.3,128.5" fill="none" stroke="none" marker-start="url(#wd)" marker-mid="url(#wd)" marker-end="url(#wd)"/><polyline points="724.6,98.5 729.6,94.3 731.7,94.4 736.3,99.3 744.7,94.9 747.8,95.0 751.2,96.8 762.3,100.4 770.7,97.4 772.9,98.1 775.1,98.4 777.4,102.3 779.8,102.4 784.6,98.4 787.1,103.6 789.6,98.2 797.5,103.1 800.2,104.3 811.5,104.0 814.5,105.7 820.5,104.7 823.6,100.9 833.1,102.4 836.4,106.9 843.0,103.2 846.4,107.5 857.0,108.0 860.5,108.8 864.2,104.3 867.9,104.8 875.4,110.2 879.2,105.9 887.0,106.5 891.0,111.3 895.0,106.2 899.0,106.6 911.5,108.5 915.7,112.5 924.3,108.5 928.7,109.0 933.1,110.8 937.6,109.7 946.7,115.3 951.3,115.6 970.2,113.0 984.9,113.7 989.9,114.6 1005.1,120.2 1010.3,116.4 1020.7,121.2 1031.4,117.0 1036.8,117.6 1042.2,118.9 1047.7,119.2 1058.9,120.4 1070.2,120.6 1075.9,120.9 1087.5,126.6 1093.3,125.7 1099.2,123.2 1123.3,128.5 1154.5,126.5 1173.8,133.1 1180.3,128.8 1186.8,133.7 1193.4,130.9 1200.1,131.2 1206.8,133.5" fill="none" stroke="none" marker-start="url(#wu)" marker-mid="url(#wu)" marker-end="url(#wu)"/><polyline points="722.2,95.8 722.7,95.8 723.3,95.9 723.9,95.9 724.6,96.0 725.3,96.0 726.1,96.1 726.9,96.2 727.8,96.2 728.7,96.3 729.6,96.4 730.6,96.4 731.7,96.5 732.8,96.6 733.9,96.7 735.1,96.8 736.3,96.9 737.6,97.0 738.9,97.1 740.3,97.2 741.7,97.3 743.2,97.4 744.7,97.5 746.2,97.7 747.8,97.8 749.5,97.9 751.2,98.0 752.9,98.2 754.7,98.3 756.5,98.4 758.4,98.6 760.4,98.7 762.3,98.9 764.3,99.0 766.4,99.2 768.5,99.4 770.7,99.5 772.9,99.7 775.1,99.9 777.4,100.1 779.8,100.2 782.2,100.4 784.6,100.6 787.1,100.8 789.6,101.0 792.2,101.2 794.8,101.4 797.5,101.6 800.2,101.8 802.9,102.0 805.8,102.2 808.6,102.5 811.5,102.7 814.5,102.9 817.4,103.1 820.5,103.4 823.6,103.6 826.7,103.8 829.9,104.1 833.1,104.3 836.4,104.6 839.7,104.8 843.0,105.1 846.4,105.4 849.9,105.6 853.4,105.9 857.0,106.2 860.5,106.5 864.2,106.7 867.9,107.0 871.6,107.3 875.4,107.6 879.2,107.9 883.1,108.2 887.0,108.5 891.0,108.8 895.0,109.1 899.0,109.4 903.1,109.7 907.3,110.1 911.5,110.4 915.7,110.7 920.0,111.0 924.3,111.4 928.7,111.7 933.1,112.0 937.6,112.4 942.1,112.7 946.7,113.1 951.3,113.4 956.0,113.8 960.7,114.2 965.4,114.5 970.2,114.9 975.1,115.3 980.0,115.6 984.9,116.0 989.9,116.4 994.9,116.8 1000.0,117.2 1005.1,117.6 1010.3,118.0 1015.5,118.4 1020.7,118.8 1026.0,119.2 1031.4,119.6 1036.8,120.0 1042.2,120.4 1047.7,120.9 1053.3,121.3 1058.9,121.7 1064.5,122.2 1070.2,122.6 1075.9,123.0 1081.7,123.5 1087.5,123.9 1093.3,124.4 1099.2,124.8 1105.2,125.3 1111.2,125.8 1117.2,126.2 1123.3,126.7 1129.5,127.2 1135.7,127.6 1141.9,128.1 1148.2,128.6 1154.5,129.1 1160.9,129.6 1167.3,130.1 1173.8,130.6 1180.3,131.1 1186.8,131.6 1193.4,132.1 1200.1,132.6 1206.8,133.1" fill="none" stroke="#5f9ea0" stroke-width="2.8" shape-rendering="crispEdges"/><polyline points="1213.5,132.8 1220.3,133.4 1227.1,134.5 1234.0,135.4 1240.9,136.6 1247.9,134.9 1254.9,137.7 1262.0,136.7 1269.1,137.5 1276.3,139.2 1283.5,139.9 1290.7,140.2 1298.0,141.8 1305.4,140.1 1312.8,141.1 1320.2,142.8 1327.7,142.1 1335.2,142.4 1342.8,143.2 1350.4,145.6 1358.1,146.4 1365.8,146.6 1373.5,148.0 1381.4,148.1 1389.2,147.2 1397.1,147.9" fill="none" stroke="none" marker-start="url(#m10)" marker-mid="url(#m10)" marker-end="url(#m10)"/><polyline points="722.2,102.9 724.6,102.2 726.9,103.1 729.6,98.3 733.9,98.9 736.3,100.1 738.9,100.1 741.7,104.4 744.7,103.9 758.4,101.2 762.3,101.9 764.3,105.8 770.7,105.4 772.9,102.4 777.4,107.2 782.2,103.4 784.6,106.7 787.1,102.6 789.6,103.8 792.2,107.9 794.8,104.0 800.2,104.2 808.6,104.4 817.4,105.0 820.5,105.9 826.7,107.0 833.1,110.4 839.7,107.5 843.0,111.0 849.9,107.8 857.0,108.7 860.5,109.5 864.2,108.6 871.6,109.4 875.4,110.5 879.2,115.3 883.1,110.8 887.0,111.1 895.0,115.1 920.0,117.4 924.3,117.7 933.1,118.0 946.7,115.8 951.3,120.5 960.7,120.8 965.4,117.1 989.9,122.8 1010.3,124.4 1020.7,124.9 1026.0,121.0 1031.4,121.9 1036.8,127.2 1042.2,123.3 1047.7,123.3 1058.9,127.7 1070.2,129.1 1075.9,129.5 1081.7,126.3 1093.3,130.4 1099.2,131.3 1111.2,131.7 1117.2,129.1 1123.3,133.0 1129.5,133.2 1141.9,131.2 1148.2,131.8 1160.9,135.8 1186.8,134.9 1193.4,139.3" fill="none" stroke="none" marker-start="url(#wd)" marker-mid="url(#wd)" marker-end="url(#wd)"/><polyline points="731.7,103.9 747.8,104.7 751.2,105.1 754.7,105.1 766.4,101.5 768.5,102.0 775.1,103.0 779.8,106.2 797.5,103.9 802.9,109.5 805.8,105.3 811.5,108.6 814.5,106.0 823.6,106.1 829.9,111.3 836.4,111.4 846.4,107.4 853.4,108.4 867.9,108.8 891.0,110.7 899.0,115.5 903.1,111.4 907.3,116.5 911.5,112.1 915.7,113.8 928.7,114.0 937.6,114.8 942.1,115.3 956.0,120.4 970.2,117.4 975.1,118.5 980.0,123.1 984.9,122.0 994.9,123.7 1000.0,124.5 1005.1,120.9 1015.5,125.8 1053.3,128.2 1064.5,124.5 1087.5,130.8 1105.2,131.1 1135.7,133.5 1154.5,132.1 1167.3,131.9 1173.8,132.7 1180.3,133.7 1200.1,139.1" fill="none" stroke="none" marker-start="url(#wu)" marker-mid="url(#wu)" marker-end="url(#wu)"/><polyline points="722.2,100.4 722.7,100.4 723.3,100.5 723.9,100.5 724.6,100.6 725.3,100.6 726.1,100.7 726.9,100.8 727.8,100.8 728.7,100.9 729.6,101.0 730.6,101.0 731.7,101.1 732.8,101.2 733.9,101.3 735.1,101.4 736.3,101.5 737.6,101.6 738.9,101.7 740.3,101.8 741.7,101.9 743.2,102.0 744.7,102.1 746.2,102.3 747.8,102.4 749.5,102.5 751.2,102.6 752.9,102.8 754.7,102.9 756.5,103.0 758.4,103.2 760.4,103.3 762.3,103.5 764.3,103.6 766.4,103.8 768.5,104.0 770.7,104.1 772.9,104.3 775.1,104.5 777.4,104.7 779.8,104.8 782.2,105.0 784.6,105.2 787.1,105.4 789.6,105.6 792.2,105.8 794.8,106.0 797.5,106.2 800.2,106.4 802.9,106.6 805.8,106.8 808.6,107.1 811.5,107.3 814.5,107.5 817.4,107.7 820.5,108.0 823.6,108.2 826.7,108.4 829.9,108.7 833.1,108.9 836.4,109.2 839.7,109.4 843.0,109.7 846.4,110.0 849.9,110.2 853.4,110.5 857.0,110.8 860.5,111.1 864.2,111.3 867.9,111.6 871.6,111.9 875.4,112.2 879.2,112.5 883.1,112.8 887.0,113.1 891.0,113.4 895.0,113.7 899.0,114.0 903.1,114.3 907.3,114.7 911.5,115.0 915.7,115.3 920.0,115.6 924.3,116.0 928.7,116.3 933.1,116.6 937.6,117.0 942.1,117.3 946.7,117.7 951.3,118.0 956.0,118.4 960.7,118.8 965.4,119.1 970.2,119.5 975.1,119.9 980.0,120.2 984.9,120.6 989.9,121.0 994.9,121.4 1000.0,121.8 1005.1,122.2 1010.3,122.6 1015.5,123.0 1020.7,123.4 1026.0,123.8 1031.4,124.2 1036.8,124.6 1042.2,125.0 1047.7,125.5 1053.3,125.9 1058.9,126.3 1064.5,126.8 1070.2,127.2 1075.9,127.6 1081.7,128.1 1087.5,128.5 1093.3,129.0 1099.2,129.4 1105.2,129.9 1111.2,130.4 1117.2,130.8 1123.3,131.3 1129.5,131.8 1135.7,132.2 1141.9,132.7 1148.2,133.2 1154.5,133.7 1160.9,134.2 1167.3,134.7 1173.8,135.2 1180.3,135.7 1186.8,136.2 1193.4,136.7 1200.1,137.2" fill="none" stroke="#7fff00" stroke-width="2.8" shape-rendering="crispEdges"/><polyline points="1206.8,138.1 1213.5,138.9 1220.3,137.8 1227.1,138.2 1234.0,139.3 1240.9,139.2 1247.9,140.0 1254.9,140.1 1262.0,141.6 1269.1,143.4 1276.3,142.3 1283.5,143.8 1290.7,143.3 1298.0,144.1 1305.4,145.2 1312.8,147.7 1320.2,145.9 1327.7,146.3 1335.2,149.3 1342.8,148.2 1350.4,149.1 1358.1,149.8 1365.8,150.5 1373.5,149.7 1381.4,152.4 1389.2,153.8 1397.1,152.1" fill="none" stroke="none" marker-start="url(#m11)" marker-mid="url(#m11)" marker-end="url(#m11)"/><polyline points="722.2,100.5 729.6,101.2 731.7,106.4 736.3,101.2 741.7,101.7 747.8,106.3 751.2,102.3 754.7,108.2 758.4,104.0 764.3,108.1 766.4,108.5 775.1,105.3 777.4,104.7 782.2,105.4 797.5,107.0 800.2,110.3 808.6,112.3 811.5,108.6 814.5,107.1 817.4,108.9 820.5,108.8 836.4,113.8 839.7,113.8 843.0,109.4 846.4,109.6 849.9,114.2 864.2,112.4 867.9,112.7 887.0,113.7 891.0,113.1 895.0,114.6 899.0,118.1 915.7,114.9 933.1,120.5 937.6,122.0 946.7,122.7 951.3,118.5 965.4,123.4 980.0,120.7 994.9,122.1 1031.4,124.4 1042.2,125.4 1047.7,130.9 1064.5,131.2 1070.2,131.0 1087.5,129.2 1093.3,133.1 1105.2,134.5 1111.2,134.5 1135.7,132.4 1141.9,132.7 1148.2,134.3 1186.8,140.6 1200.1,142.4" fill="none" stroke="none" marker-start="url(#wd)" marker-mid="url(#wd)" marker-end="url(#wd)"/><polyline points="724.6,104.9 726.9,101.6 733.9,105.4 738.9,102.0 744.7,106.8 762.3,107.4 768.5,108.5 770.7,104.5 772.9,105.0 779.8,105.4 784.6,105.6 787.1,105.4 789.6,105.8 792.2,111.1 794.8,106.1 802.9,110.8 805.8,107.3 823.6,113.1 826.7,112.8 829.9,109.9 833.1,112.8 853.4,115.1 857.0,116.0 860.5,115.2 871.6,112.9 875.4,112.5 879.2,117.0 883.1,112.9 903.1,114.2 907.3,119.1 911.5,120.0 920.0,116.2 924.3,115.7 928.7,117.3 942.1,122.1 956.0,122.5 960.7,119.8 970.2,119.6 975.1,125.1 984.9,120.5 989.9,121.8 1000.0,122.2 1005.1,122.6 1010.3,123.5 1015.5,123.5 1020.7,127.2 1026.0,127.5 1036.8,125.6 1053.3,130.0 1058.9,130.4 1075.9,128.8 1081.7,127.7 1099.2,129.6 1117.2,134.7 1123.3,131.8 1129.5,131.9 1154.5,137.8 1160.9,134.5 1167.3,139.0 1173.8,139.6 1180.3,139.6 1193.4,137.8 1206.8,140.7" fill="none" stroke="none" marker-start="url(#wu)" marker-mid="url(#wu)" marker-end="url(#wu)"/><polyline points="722.2,102.9 722.7,102.9 723.3,103.0 723.9,103.0 724.6,103.1 725.3,103.1 726.1,103.2 726.9,103.3 727.8,103.3 728.7,103.4 729.6,103.5 730.6,103.5 731.7,103.6 732.8,103.7 733.9,103.8 735.1,103.9 736.3,104.0 737.6,104.1 738.9,104.2 740.3,104.3 741.7,104.4 743.2,104.5 744.7,104.6 746.2,104.8 747.8,104.9 749.5,105.0 751.2,105.1 752.9,105.3 754.7,105.4 756.5,105.5 758.4,105.7 760.4,105.8 762.3,106.0 764.3,106.1 766.4,106.3 768.5,106.5 770.7,106.6 772.9,106.8 775.1,107.0 777.4,107.2 779.8,107.3 782.2,107.5 784.6,107.7 787.1,107.9 789.6,108.1 792.2,108.3 794.8,108.5 797.5,108.7 800.2,108.9 802.9,109.1 805.8,109.3 808.6,109.6 811.5,109.8 814.5,110.0 817.4,110.2 820.5,110.5 823.6,110.7 826.7,110.9 829.9,111.2 833.1,111.4 836.4,111.7 839.7,111.9 843.0,112.2 846.4,112.5 849.9,112.7 853.4,113.0 857.0,113.3 860.5,113.6 864.2,113.8 867.9,114.1 871.6,114.4 875.4,114.7 879.2,115.0 883.1,115.3 887.0,115.6 891.0,115.9 895.0,116.2 899.0,116.5 903.1,116.8 907.3,117.2 911.5,117.5 915.7,117.8 920.0,118.1 924.3,118.5 928.7,118.8 933.1,119.1 937.6,119.5 942.1,119.8 946.7,120.2 951.3,120.5 956.0,120.9 960.7,121.3 965.4,121.6 970.2,122.0 975.1,122.4 980.0,122.7 984.9,123.1 989.9,123.5 994.9,123.9 1000.0,124.3 1005.1,124.7 1010.3,125.1 1015.5,125.5 1020.7,125.9 1026.0,126.3 1031.4,126.7 1036.8,127.1 1042.2,127.5 1047.7,128.0 1053.3,128.4 1058.9,128.8 1064.5,129.3 1070.2,129.7 1075.9,130.1 1081.7,130.6 1087.5,131.0 1093.3,131.5 1099.2,131.9 1105.2,132.4 1111.2,132.9 1117.2,133.3 1123.3,133.8 1129.5,134.3 1135.7,134.7 1141.9,135.2 1148.2,135.7 1154.5,136.2 1160.9,136.7 1167.3,137.2 1173.8,137.7 1180.3,138.2 1186.8,138.7 1193.4,139.2 1200.1,139.7 1206.8,140.2" fill="none" stroke="#0000ff" stroke-width="2.8" shape-rendering="crispEdges"/><polyline points="1213.5,139.7 1220.3,142.5 1227.1,142.6 1234.0,141.2 1240.9,142.6 1247.9,144.1 1254.9,142.5 1262.0,143.2 1269.1,144.8 1276.3,147.1 1283.5,148.0 1290.7,146.5 1298.0,148.9 1305.4,149.1 1312.8,150.0 1320.2,149.7 1327.7,151.5 1335.2,151.1 1342.8,152.7 1350.4,152.1 1358.1,151.5 1365.8,153.2 1373.5,153.7 1381.4,153.9 1389.2,154.6 1397.1,155.7" fill="none" stroke="none" marker-start="url(#m12)" marker-mid="url(#m12)" marker-end="url(#m12)"/><polyline points="726.9,103.8 729.6,103.7 738.9,109.4 744.7,106.2 747.8,110.2 754.7,110.8 762.3,110.7 764.3,107.8 770.7,111.3 772.9,111.4 777.4,109.0 779.8,107.7 782.2,113.0 792.2,109.0 794.8,114.2 800.2,109.7 802.9,113.9 805.8,110.0 817.4,111.0 826.7,111.4 833.1,112.3 839.7,113.5 843.0,114.1 849.9,117.9 857.0,118.6 864.2,114.2 879.2,120.9 891.0,121.1 899.0,121.2 915.7,122.7 924.3,119.9 928.7,120.5 937.6,121.2 960.7,126.2 975.1,123.5 989.9,124.3 1000.0,125.7 1005.1,130.1 1015.5,126.8 1036.8,127.8 1047.7,128.5 1053.3,134.1 1064.5,133.9 1081.7,131.9 1148.2,136.0 1160.9,141.2 1186.8,140.5 1200.1,141.5 1213.5,142.5" fill="none" stroke="none" marker-start="url(#wd)" marker-mid="url(#wd)" marker-end="url(#wd)"/><polyline points="722.2,104.2 724.6,108.2 731.7,105.0 733.9,105.5 736.3,105.2 741.7,108.9 751.2,106.0 758.4,107.0 766.4,107.1 768.5,111.4 775.1,112.7 784.6,108.8 787.1,113.6 789.6,109.9 797.5,109.4 808.6,111.2 811.5,114.6 814.5,111.0 820.5,115.7 823.6,115.8 829.9,113.0 836.4,113.1 846.4,113.6 853.4,114.6 860.5,114.9 867.9,115.0 871.6,116.2 875.4,120.1 883.1,115.7 887.0,120.9 895.0,116.7 903.1,117.1 907.3,122.5 911.5,118.7 920.0,123.8 933.1,124.1 942.1,125.8 946.7,125.3 951.3,125.7 956.0,121.7 965.4,122.9 970.2,126.6 980.0,123.8 984.9,123.7 994.9,125.2 1010.3,129.9 1020.7,126.3 1026.0,131.0 1031.4,127.7 1042.2,128.9 1058.9,134.5 1070.2,131.3 1075.9,131.2 1087.5,136.0 1093.3,133.2 1099.2,133.6 1105.2,133.5 1111.2,138.6 1117.2,133.6 1123.3,134.9 1129.5,135.2 1135.7,135.2 1141.9,140.6 1154.5,137.0 1167.3,137.4 1173.8,138.4 1180.3,139.6 1193.4,140.7 1206.8,142.5" fill="none" stroke="none" marker-start="url(#wu)" marker-mid="url(#wu)" marker-end="url(#wu)"/><polyline points="722.2,106.0 722.7,106.0 723.3,106.1 723.9,106.1 724.6,106.2 725.3,106.2 726.1,106.3 726.9,106.4 727.8,106.4 728.7,106.5 729.6,106.6 730.6,106.6 731.7,106.7 732.8,106.8 733.9,106.9 735.1,107.0 736.3,107.1 737.6,107.2 738.9,107.3 740.3,107.4 741.7,107.5 743.2,107.6 744.7,107.7 746.2,107.9 747.8,108.0 749.5,108.1 751.2,108.2 752.9,108.4 754.7,108.5 756.5,108.6 758.4,108.8 760.4,108.9 762.3,109.1 764.3,109.2 766.4,109.4 768.5,109.6 770.7,109.7 772.9,109.9 775.1,110.1 777.4,110.3 779.8,110.4 782.2,110.6 784.6,110.8 787.1,111.0 789.6,111.2 792.2,111.4 794.8,111.6 797.5,111.8 800.2,112.0 802.9,112.2 805.8,112.4 808.6,112.7 811.5,112.9 814.5,113.1 817.4,113.3 820.5,113.6 823.6,113.8 826.7,114.0 829.9,114.3 833.1,114.5 836.4,114.8 839.7,115.0 843.0,115.3 846.4,115.6 849.9,115.8 853.4,116.1 857.0,116.4 860.5,116.7 864.2,116.9 867.9,117.2 871.6,117.5 875.4,117.8 879.2,118.1 883.1,118.4 887.0,118.7 891.0,119.0 895.0,119.3 899.0,119.6 903.1,119.9 907.3,120.3 911.5,120.6 915.7,120.9 920.0,121.2 924.3,121.6 928.7,121.9 933.1,122.2 937.6,122.6 942.1,122.9 946.7,123.3 951.3,123.6 956.0,124.0 960.7,124.4 965.4,124.7 970.2,125.1 975.1,125.5 980.0,125.8 984.9,126.2 989.9,126.6 994.9,127.0 1000.0,127.4 1005.1,127.8 1010.3,128.2 1015.5,128.6 1020.7,129.0 1026.0,129.4 1031.4,129.8 1036.8,130.2 1042.2,130.6 1047.7,131.1 1053.3,131.5 1058.9,131.9 1064.5,132.4 1070.2,132.8 1075.9,133.2 1081.7,133.7 1087.5,134.1 1093.3,134.6 1099.2,135.0 1105.2,135.5 1111.2,136.0 1117.2,136.4 1123.3,136.9 1129.5,137.4 1135.7,137.8 1141.9,138.3 1148.2,138.8 1154.5,139.3 1160.9,139.8 1167.3,140.3 1173.8,140.8 1180.3,141.3 1186.8,141.8 1193.4,142.3 1200.1,142.8 1206.8,143.3 1213.5,143.9" fill="none" stroke="#d2691e" stroke-width="2.8" shape-rendering="crispEdges"/><polyline points="1220.3,144.4 1227.1,144.2 1234.0,144.9 1240.9,146.0 1247.9,146.3 1254.9,148.2 1262.0,148.5 1269.1,147.2 1276.3,148.1 1283.5,148.0 1290.7,149.6 1298.0,149.5 1305.4,152.0 1312.8,152.9 1320.2,154.2 1327.7,152.3 1335.2,152.3 1342.8,155.2 1350.4,154.8 1358.1,157.1 1365.8,156.0 1373.5,156.3 1381.4,156.2 1389.2,159.6 1397.1,158.9" fill="none" stroke="none" marker-start="url(#m13)" marker-mid="url(#m13)" marker-end="url(#m13)"/><polyline points="722.2,108.9 731.7,113.9 733.9,109.6 738.9,111.6 741.7,111.2 747.8,114.8 754.7,116.0 762.3,117.6 768.5,112.8 772.9,118.2 777.4,118.1 784.6,113.7 787.1,114.6 789.6,114.7 792.2,114.6 800.2,119.3 808.6,116.4 814.5,121.2 817.4,116.1 823.6,118.2 833.1,118.5 839.7,118.8 857.0,123.4 860.5,123.9 864.2,124.0 867.9,120.4 871.6,125.3 895.0,127.4 903.1,128.0 924.3,125.1 928.7,129.0 946.7,126.3 970.2,128.8 975.1,128.5 1015.5,131.5 1020.7,137.0 1031.4,137.6 1081.7,142.0 1087.5,141.0 1093.3,142.5 1111.2,139.8 1117.2,143.9 1123.3,144.8 1135.7,140.7 1141.9,146.7 1148.2,142.5 1193.4,145.3 1206.8,150.0" fill="none" stroke="none" marker-start="url(#wd)" marker-mid="url(#wd)" marker-end="url(#wd)"/><polyline points="724.6,113.3 726.9,114.1 729.6,113.6 736.3,111.3 744.7,111.6 751.2,115.7 758.4,112.5 764.3,116.1 766.4,113.4 770.7,112.7 775.1,117.7 779.8,113.4 782.2,114.7 794.8,114.3 797.5,120.2 802.9,119.4 805.8,115.2 811.5,116.5 820.5,117.3 826.7,117.7 829.9,122.1 836.4,122.0 843.0,118.2 846.4,118.7 849.9,119.2 853.4,123.8 875.4,120.8 879.2,125.0 883.1,126.0 887.0,122.5 891.0,126.9 899.0,127.2 907.3,128.6 911.5,123.6 915.7,124.0 920.0,125.3 933.1,130.7 937.6,130.2 942.1,126.3 951.3,127.7 956.0,128.3 960.7,128.7 965.4,132.8 980.0,133.1 984.9,134.1 989.9,134.1 994.9,130.8 1000.0,134.5 1005.1,136.3 1010.3,132.4 1026.0,137.6 1036.8,133.0 1042.2,138.1 1047.7,134.6 1053.3,138.5 1058.9,135.6 1064.5,135.9 1070.2,141.0 1075.9,137.4 1099.2,143.0 1105.2,138.5 1129.5,141.2 1154.5,142.6 1160.9,147.1 1167.3,143.5 1173.8,144.9 1180.3,144.4 1186.8,146.1 1200.1,146.0" fill="none" stroke="none" marker-start="url(#wu)" marker-mid="url(#wu)" marker-end="url(#wu)"/><polyline points="722.2,111.6 722.7,111.6 723.3,111.7 723.9,111.7 724.6,111.8 725.3,111.8 726.1,111.9 726.9,112.0 727.8,112.0 728.7,112.1 729.6,112.2 730.6,112.2 731.7,112.3 732.8,112.4 733.9,112.5 735.1,112.6 736.3,112.7 737.6,112.8 738.9,112.9 740.3,113.0 741.7,113.1 743.2,113.2 744.7,113.3 746.2,113.5 747.8,113.6 749.5,113.7 751.2,113.8 752.9,114.0 754.7,114.1 756.5,114.2 758.4,114.4 760.4,114.5 762.3,114.7 764.3,114.8 766.4,115.0 768.5,115.2 770.7,115.3 772.9,115.5 775.1,115.7 777.4,115.9 779.8,116.0 782.2,116.2 784.6,116.4 787.1,116.6 789.6,116.8 792.2,117.0 794.8,117.2 797.5,117.4 800.2,117.6 802.9,117.8 805.8,118.0 808.6,118.3 811.5,118.5 814.5,118.7 817.4,118.9 820.5,119.2 823.6,119.4 826.7,119.6 829.9,119.9 833.1,120.1 836.4,120.4 839.7,120.6 843.0,120.9 846.4,121.2 849.9,121.4 853.4,121.7 857.0,122.0 860.5,122.3 864.2,122.5 867.9,122.8 871.6,123.1 875.4,123.4 879.2,123.7 883.1,124.0 887.0,124.3 891.0,124.6 895.0,124.9 899.0,125.2 903.1,125.5 907.3,125.9 911.5,126.2 915.7,126.5 920.0,126.8 924.3,127.2 928.7,127.5 933.1,127.8 937.6,128.2 942.1,128.5 946.7,128.9 951.3,129.2 956.0,129.6 960.7,130.0 965.4,130.3 970.2,130.7 975.1,131.1 980.0,131.4 984.9,131.8 989.9,132.2 994.9,132.6 1000.0,133.0 1005.1,133.4 1010.3,133.8 1015.5,134.2 1020.7,134.6 1026.0,135.0 1031.4,135.4 1036.8,135.8 1042.2,136.2 1047.7,136.7 1053.3,137.1 1058.9,137.5 1064.5,138.0 1070.2,138.4 1075.9,138.8 1081.7,139.3 1087.5,139.7 1093.3,140.2 1099.2,140.6 1105.2,141.1 1111.2,141.6 1117.2,142.0 1123.3,142.5 1129.5,143.0 1135.7,143.4 1141.9,143.9 1148.2,144.4 1154.5,144.9 1160.9,145.4 1167.3,145.9 1173.8,146.4 1180.3,146.9 1186.8,147.4 1193.4,147.9 1200.1,148.4 1206.8,148.9" fill="none" stroke="#ff7f50" stroke-width="2.8" shape-rendering="crispEdges"/><polyline points="1213.5,150.3 1220.3,150.7 1227.1,152.1 1234.0,152.0 1240.9,152.1 1247.9,151.1 1254.9,153.8 1262.0,154.5 1269.1,152.8 1276.3,154.4 1283.5,156.4 1290.7,157.3 1298.0,155.3 1305.4,156.8 1312.8,158.7 1320.2,159.7 1327.7,158.2 1335.2,159.0 1342.8,160.2 1350.4,161.6 1358.1,159.9 1365.8,160.8 1373.5,163.7 1381.4,161.6 1389.2,165.0 1397.1,165.1" fill="none" stroke="none" marker-start="url(#m14)" marker-mid="url(#m14)" marker-end="url(#m14)"/><polyline points="722.2,117.0 724.6,113.3 733.9,114.4 741.7,118.1 744.7,119.0 758.4,115.1 764.3,119.9 766.4,116.1 768.5,119.9 772.9,120.0 775.1,121.1 777.4,120.9 784.6,122.4 789.6,117.8 794.8,118.9 797.5,122.9 800.2,118.5 811.5,124.1 820.5,120.2 823.6,120.9 829.9,125.3 860.5,123.7 864.2,123.4 867.9,128.3 879.2,125.2 883.1,129.4 891.0,129.6 907.3,130.4 920.0,131.7 924.3,133.2 937.6,129.8 946.7,129.5 951.3,135.2 956.0,130.4 965.4,135.0 984.9,132.8 1005.1,138.7 1020.7,140.0 1026.0,136.6 1047.7,141.7 1093.3,140.6 1111.2,143.0 1117.2,147.2 1123.3,147.5 1129.5,147.7 1135.7,147.9 1148.2,146.1 1160.9,151.1 1167.3,146.9 1173.8,147.8 1200.1,149.9 1206.8,152.5" fill="none" stroke="none" marker-start="url(#wd)" marker-mid="url(#wd)" marker-end="url(#wd)"/><polyline points="726.9,113.2 729.6,113.6 731.7,117.8 736.3,118.4 738.9,118.4 747.8,114.4 751.2,119.6 754.7,119.3 762.3,116.0 770.7,117.2 779.8,117.6 782.2,120.9 787.1,122.3 792.2,122.7 802.9,118.9 805.8,122.8 808.6,122.7 814.5,124.4 817.4,123.8 826.7,125.0 833.1,124.7 836.4,121.4 839.7,121.6 843.0,126.4 846.4,126.4 849.9,127.2 853.4,122.9 857.0,123.2 871.6,124.0 875.4,129.2 887.0,124.6 895.0,126.4 899.0,126.2 903.1,126.8 911.5,126.5 915.7,131.3 928.7,133.2 933.1,132.7 942.1,130.0 960.7,134.8 970.2,135.3 975.1,136.1 980.0,132.7 989.9,137.5 994.9,137.9 1000.0,134.4 1010.3,139.0 1015.5,135.8 1031.4,135.9 1036.8,137.5 1042.2,138.0 1053.3,142.1 1058.9,139.2 1064.5,139.2 1070.2,143.1 1075.9,143.3 1081.7,144.3 1087.5,144.4 1099.2,141.8 1105.2,141.6 1141.9,149.8 1154.5,145.7 1180.3,148.7 1186.8,152.4 1193.4,149.2" fill="none" stroke="none" marker-start="url(#wu)" marker-mid="url(#wu)" marker-end="url(#wu)"/><polyline points="722.2,114.8 722.7,114.8 723.3,114.9 723.9,114.9 724.6,115.0 725.3,115.0 726.1,115.1 726.9,115.2 727.8,115.2 728.7,115.3 729.6,115.4 730.6,115.4 731.7,115.5 732.8,115.6 733.9,115.7 735.1,115.8 736.3,115.9 737.6,116.0 738.9,116.1 740.3,116.2 741.7,116.3 743.2,116.4 744.7,116.5 746.2,116.7 747.8,116.8 749.5,116.9 751.2,117.0 752.9,117.2 754.7,117.3 756.5,117.4 758.4,117.6 760.4,117.7 762.3,117.9 764.3,118.0 766.4,118.2 768.5,118.4 770.7,118.5 772.9,118.7 775.1,118.9 777.4,119.1 779.8,119.2 782.2,119.4 784.6,119.6 787.1,119.8 789.6,120.0 792.2,120.2 794.8,120.4 797.5,120.6 800.2,120.8 802.9,121.0 805.8,121.2 808.6,121.5 811.5,121.7 814.5,121.9 817.4,122.1 820.5,122.4 823.6,122.6 826.7,122.8 829.9,123.1 833.1,123.3 836.4,123.6 839.7,123.8 843.0,124.1 846.4,124.4 849.9,124.6 853.4,124.9 857.0,125.2 860.5,125.5 864.2,125.7 867.9,126.0 871.6,126.3 875.4,126.6 879.2,126.9 883.1,127.2 887.0,127.5 891.0,127.8 895.0,128.1 899.0,128.4 903.1,128.7 907.3,129.1 911.5,129.4 915.7,129.7 920.0,130.0 924.3,130.4 928.7,130.7 933.1,131.0 937.6,131.4 942.1,131.7 946.7,132.1 951.3,132.4 956.0,132.8 960.7,133.2 965.4,133.5 970.2,133.9 975.1,134.3 980.0,134.6 984.9,135.0 989.9,135.4 994.9,135.8 1000.0,136.2 1005.1,136.6 1010.3,137.0 1015.5,137.4 1020.7,137.8 1026.0,138.2 1031.4,138.6 1036.8,139.0 1042.2,139.4 1047.7,139.9 1053.3,140.3 1058.9,140.7 1064.5,141.2 1070.2,141.6 1075.9,142.0 1081.7,142.5 1087.5,142.9 1093.3,143.4 1099.2,143.8 1105.2,144.3 1111.2,144.8 1117.2,145.2 1123.3,145.7 1129.5,146.2 1135.7,146.6 1141.9,147.1 1148.2,147.6 1154.5,148.1 1160.9,148.6 1167.3,149.1 1173.8,149.6 1180.3,150.1 1186.8,150.6 1193.4,151.1 1200.1,151.6 1206.8,152.1" fill="none" stroke="#00ffff" stroke-width="2.8" shape-rendering="crispEdges"/><polyline points="1213.5,153.7 1220.3,153.1 1227.1,153.1 1234.0,153.9 1240.9,155.9 1247.9,156.6 1254.9,155.1 1262.0,155.6 1269.1,156.3 1276.3,157.3 1283.5,158.7 1290.7,158.0 1298.0,160.4 1305.4,158.8 1312.8,161.4 1320.2,161.6 1327.7,163.2 1335.2,161.2 1342.8,162.1 1350.4,164.0 1358.1,164.5 1365.8,166.6 1373.5,166.4 1381.4,165.7 1389.2,168.5 1397.1,167.5" fill="none" stroke="none" marker-start="url(#m15)" marker-mid="url(#m15)" marker-end="url(#m15)"/><polyline points="722.2,119.3 724.6,119.6 726.9,115.5 733.9,116.2 738.9,121.0 741.7,117.1 744.7,116.1 747.8,121.0 766.4,118.6 768.5,122.2 770.7,123.2 784.6,124.8 789.6,123.8 792.2,123.8 794.8,120.1 800.2,120.2 802.9,125.9 805.8,121.1 823.6,127.8 829.9,127.0 833.1,123.8 836.4,128.4 839.7,128.6 853.4,124.3 857.0,126.1 875.4,130.4 883.1,127.9 891.0,132.8 907.3,130.1 911.5,129.1 915.7,130.3 924.3,130.1 928.7,135.3 933.1,135.1 937.6,131.7 951.3,132.6 956.0,133.2 960.7,133.4 975.1,134.4 984.9,139.1 994.9,136.7 1000.0,141.0 1005.1,140.6 1010.3,136.8 1020.7,141.9 1036.8,139.5 1053.3,140.8 1064.5,145.9 1070.2,145.9 1081.7,147.0 1093.3,146.9 1117.2,146.1 1123.3,145.2 1135.7,146.2 1141.9,147.8 1148.2,147.4 1154.5,148.5 1167.3,154.2 1173.8,153.1 1180.3,150.0 1186.8,155.0 1193.4,156.2 1206.8,155.6" fill="none" stroke="none" marker-start="url(#wd)" marker-mid="url(#wd)" marker-end="url(#wd)"/><polyline points="729.6,119.5 731.7,115.4 736.3,121.0 751.2,120.9 754.7,121.0 758.4,118.0 762.3,123.1 764.3,117.8 772.9,123.9 775.1,119.8 777.4,124.2 779.8,123.6 782.2,120.3 787.1,123.3 797.5,124.7 808.6,121.6 811.5,122.5 814.5,126.9 817.4,121.8 820.5,126.2 826.7,127.1 843.0,123.6 846.4,128.3 849.9,129.2 860.5,129.5 864.2,125.7 867.9,131.1 871.6,126.3 879.2,127.0 887.0,131.2 895.0,131.9 899.0,133.3 903.1,128.7 920.0,130.3 942.1,135.9 946.7,132.7 965.4,138.5 970.2,133.7 980.0,135.5 989.9,138.9 1015.5,142.1 1026.0,137.7 1031.4,142.9 1042.2,144.1 1047.7,139.7 1058.9,145.4 1075.9,141.6 1087.5,142.9 1099.2,148.3 1105.2,144.7 1111.2,145.6 1129.5,150.7 1160.9,149.4 1200.1,152.1" fill="none" stroke="none" marker-start="url(#wu)" marker-mid="url(#wu)" marker-end="url(#wu)"/><polyline points="722.2,117.1 722.7,117.1 723.3,117.2 723.9,117.2 724.6,117.3 725.3,117.3 726.1,117.4 726.9,117.5 727.8,117.5 728.7,117.6 729.6,117.7 730.6,117.7 731.7,117.8 732.8,117.9 733.9,118.0 735.1,118.1 736.3,118.2 737.6,118.3 738.9,118.4 740.3,118.5 741.7,118.6 743.2,118.7 744.7,118.8 746.2,119.0 747.8,119.1 749.5,119.2 751.2,119.3 752.9,119.5 754.7,119.6 756.5,119.7 758.4,119.9 760.4,120.0 762.3,120.2 764.3,120.3 766.4,120.5 768.5,120.7 770.7,120.8 772.9,121.0 775.1,121.2 777.4,121.4 779.8,121.5 782.2,121.7 784.6,121.9 787.1,122.1 789.6,122.3 792.2,122.5 794.8,122.7 797.5,122.9 800.2,123.1 802.9,123.3 805.8,123.5 808.6,123.8 811.5,124.0 814.5,124.2 817.4,124.4 820.5,124.7 823.6,124.9 826.7,125.1 829.9,125.4 833.1,125.6 836.4,125.9 839.7,126.1 843.0,126.4 846.4,126.7 849.9,126.9 853.4,127.2 857.0,127.5 860.5,127.8 864.2,128.0 867.9,128.3 871.6,128.6 875.4,128.9 879.2,129.2 883.1,129.5 887.0,129.8 891.0,130.1 895.0,130.4 899.0,130.7 903.1,131.0 907.3,131.4 911.5,131.7 915.7,132.0 920.0,132.3 924.3,132.7 928.7,133.0 933.1,133.3 937.6,133.7 942.1,134.0 946.7,134.4 951.3,134.7 956.0,135.1 960.7,135.5 965.4,135.8 970.2,136.2 975.1,136.6 980.0,136.9 984.9,137.3 989.9,137.7 994.9,138.1 1000.0,138.5 1005.1,138.9 1010.3,139.3 1015.5,139.7 1020.7,140.1 1026.0,140.5 1031.4,140.9 1036.8,141.3 1042.2,141.7 1047.7,142.2 1053.3,142.6 1058.9,143.0 1064.5,143.5 1070.2,143.9 1075.9,144.3 1081.7,144.8 1087.5,145.2 1093.3,145.7 1099.2,146.1 1105.2,146.6 1111.2,147.1 1117.2,147.5 1123.3,148.0 1129.5,148.5 1135.7,148.9 1141.9,149.4 1148.2,149.9 1154.5,150.4 1160.9,150.9 1167.3,151.4 1173.8,151.9 1180.3,152.4 1186.8,152.9 1193.4,153.4 1200.1,153.9 1206.8,154.4" fill="none" stroke="#6495ed" stroke-width="2.8" shape-rendering="crispEdges"/><polyline points="1213.5,155.6 1220.3,155.4 1227.1,156.3 1234.0,157.7 1240.9,157.3 1247.9,159.3 1254.9,156.8 1262.0,160.3 1269.1,160.3 1276.3,160.1 1283.5,161.9 1290.7,160.2 1298.0,161.5 1305.4,163.3 1312.8,164.2 1320.2,163.4 1327.7,166.0 1335.2,165.5 1342.8,164.2 1350.4,165.1 1358.1,165.6 1365.8,167.8 1373.5,167.6 1381.4,168.1 1389.2,169.3 1397.1,168.8" fill="none" stroke="none" marker-start="url(#m16)" marker-mid="url(#m16)" marker-end="url(#m16)"/><polyline points="722.2,122.1 724.6,125.5 726.9,122.3 731.7,122.2 744.7,127.0 751.2,127.0 754.7,128.6 762.3,124.3 766.4,128.5 768.5,124.2 770.7,125.4 772.9,125.1 779.8,129.8 784.6,130.8 789.6,130.0 792.2,126.3 794.8,130.2 797.5,127.0 800.2,130.9 805.8,131.7 808.6,128.2 811.5,128.2 814.5,132.0 833.1,134.8 843.0,129.9 849.9,131.8 864.2,137.0 871.6,132.2 875.4,133.1 879.2,132.9 883.1,138.4 895.0,138.1 899.0,135.1 907.3,139.9 924.3,137.4 933.1,142.5 951.3,143.1 960.7,143.3 980.0,141.4 994.9,142.4 1000.0,142.3 1010.3,143.0 1015.5,143.7 1036.8,145.7 1042.2,149.3 1047.7,150.0 1058.9,151.6 1064.5,148.4 1075.9,148.0 1081.7,149.0 1093.3,153.8 1099.2,150.4 1105.2,155.3 1135.7,157.6 1148.2,158.2 1173.8,160.3 1180.3,157.5 1186.8,156.9 1200.1,162.3 1206.8,161.2 1213.5,160.3" fill="none" stroke="none" marker-start="url(#wd)" marker-mid="url(#wd)" marker-end="url(#wd)"/><polyline points="729.6,121.8 733.9,121.4 736.3,123.1 738.9,122.9 741.7,122.3 747.8,123.0 758.4,128.2 764.3,128.7 775.1,125.9 777.4,129.7 782.2,126.5 787.1,129.7 802.9,128.1 817.4,127.9 820.5,133.4 823.6,129.9 826.7,132.7 829.9,130.4 836.4,134.7 839.7,135.3 846.4,134.4 853.4,135.2 857.0,136.3 860.5,135.3 867.9,133.3 887.0,133.5 891.0,134.7 903.1,135.9 911.5,140.4 915.7,135.4 920.0,137.3 928.7,142.2 937.6,138.2 942.1,138.3 946.7,142.2 956.0,139.6 965.4,144.5 970.2,140.8 975.1,145.3 984.9,145.0 989.9,142.6 1005.1,143.6 1020.7,148.3 1026.0,148.6 1031.4,149.5 1053.3,146.9 1070.2,147.7 1087.5,149.4 1111.2,154.8 1117.2,155.6 1123.3,155.7 1129.5,157.2 1141.9,154.4 1154.5,154.1 1160.9,159.9 1167.3,154.9 1193.4,157.4" fill="none" stroke="none" marker-start="url(#wu)" marker-mid="url(#wu)" marker-end="url(#wu)"/><polyline points="722.2,123.4 722.7,123.4 723.3,123.5 723.9,123.5 724.6,123.6 725.3,123.6 726.1,123.7 726.9,123.8 727.8,123.8 728.7,123.9 729.6,124.0 730.6,124.0 731.7,124.1 732.8,124.2 733.9,124.3 735.1,124.4 736.3,124.5 737.6,124.6 738.9,124.7 740.3,124.8 741.7,124.9 743.2,125.0 744.7,125.1 746.2,125.3 747.8,125.4 749.5,125.5 751.2,125.6 752.9,125.8 754.7,125.9 756.5,126.0 758.4,126.2 760.4,126.3 762.3,126.5 764.3,126.6 766.4,126.8 768.5,127.0 770.7,127.1 772.9,127.3 775.1,127.5 777.4,127.7 779.8,127.8 782.2,128.0 784.6,128.2 787.1,128.4 789.6,128.6 792.2,128.8 794.8,129.0 797.5,129.2 800.2,129.4 802.9,129.6 805.8,129.8 808.6,130.1 811.5,130.3 814.5,130.5 817.4,130.7 820.5,131.0 823.6,131.2 826.7,131.4 829.9,131.7 833.1,131.9 836.4,132.2 839.7,132.4 843.0,132.7 846.4,133.0 849.9,133.2 853.4,133.5 857.0,133.8 860.5,134.1 864.2,134.3 867.9,134.6 871.6,134.9 875.4,135.2 879.2,135.5 883.1,135.8 887.0,136.1 891.0,136.4 895.0,136.7 899.0,137.0 903.1,137.3 907.3,137.7 911.5,138.0 915.7,138.3 920.0,138.6 924.3,139.0 928.7,139.3 933.1,139.6 937.6,140.0 942.1,140.3 946.7,140.7 951.3,141.0 956.0,141.4 960.7,141.8 965.4,142.1 970.2,142.5 975.1,142.9 980.0,143.2 984.9,143.6 989.9,144.0 994.9,144.4 1000.0,144.8 1005.1,145.2 1010.3,145.6 1015.5,146.0 1020.7,146.4 1026.0,146.8 1031.4,147.2 1036.8,147.6 1042.2,148.0 1047.7,148.5 1053.3,148.9 1058.9,149.3 1064.5,149.8 1070.2,150.2 1075.9,150.6 1081.7,151.1 1087.5,151.5 1093.3,152.0 1099.2,152.4 1105.2,152.9 1111.2,153.4 1117.2,153.8 1123.3,154.3 1129.5,154.8 1135.7,155.2 1141.9,155.7 1148.2,156.2 1154.5,156.7 1160.9,157.2 1167.3,157.7 1173.8,158.2 1180.3,158.7 1186.8,159.2 1193.4,159.7 1200.1,160.2 1206.8,160.7 1213.5,161.3" fill="none" stroke="#fff8dc" stroke-width="2.8" shape-rendering="crispEdges"/><polyline points="1220.3,162.1 1227.1,163.5 1234.0,162.3 1240.9,164.8 1247.9,162.9 1254.9,164.5 1262.0,164.1 1269.1,166.1 1276.3,168.0 1283.5,168.5 1290.7,169.2 1298.0,167.6 1305.4,167.9 1312.8,169.2 1320.2,168.9 1327.7,170.5 1335.2,170.6 1342.8,171.7 1350.4,172.4 1358.1,173.4 1365.8,172.9 1373.5,175.7 1381.4,174.1 1389.2,176.4 1397.1,175.4" fill="none" stroke="none" marker-start="url(#m17)" marker-mid="url(#m17)" marker-end="url(#m17)"/><polyline points="724.6,130.0 731.7,126.7 733.9,131.1 736.3,126.3 738.9,130.7 747.8,128.3 762.3,132.5 764.3,129.3 766.4,129.8 770.7,130.0 775.1,133.4 777.4,129.7 779.8,130.3 782.2,130.6 787.1,130.4 789.6,131.8 792.2,131.6 794.8,131.9 808.6,133.1 811.5,133.7 817.4,132.5 820.5,132.7 829.9,134.9 833.1,139.3 846.4,136.1 853.4,136.4 857.0,140.5 860.5,140.7 867.9,137.9 883.1,141.9 887.0,142.9 891.0,138.6 903.1,144.5 911.5,140.9 915.7,144.3 924.3,141.7 928.7,145.5 942.1,146.6 946.7,143.1 951.3,144.4 956.0,147.8 970.2,148.7 975.1,145.1 980.0,146.4 994.9,151.8 1010.3,151.5 1020.7,152.8 1031.4,149.7 1036.8,154.0 1047.7,151.2 1053.3,155.9 1058.9,151.6 1064.5,153.1 1070.2,156.9 1075.9,153.0 1081.7,153.9 1087.5,154.0 1093.3,155.0 1099.2,155.4 1105.2,159.3 1129.5,162.0 1135.7,157.6 1148.2,163.6 1180.3,166.2 1200.1,162.8 1206.8,164.8" fill="none" stroke="none" marker-start="url(#wd)" marker-mid="url(#wd)" marker-end="url(#wd)"/><polyline points="722.2,130.5 726.9,126.0 729.6,130.6 741.7,131.2 744.7,131.0 751.2,127.5 754.7,132.5 758.4,129.3 768.5,130.0 772.9,129.4 784.6,135.4 797.5,130.9 800.2,135.4 802.9,137.0 805.8,132.2 814.5,132.8 823.6,138.0 826.7,133.4 836.4,135.3 839.7,134.8 843.0,135.9 849.9,136.5 864.2,136.7 871.6,142.2 875.4,142.1 879.2,142.3 895.0,138.6 899.0,143.3 907.3,145.0 920.0,141.1 933.1,145.9 937.6,147.3 960.7,148.0 965.4,148.2 984.9,150.9 989.9,150.9 1000.0,151.4 1005.1,151.5 1015.5,152.5 1026.0,150.0 1042.2,150.1 1111.2,156.4 1117.2,159.6 1123.3,156.1 1141.9,161.8 1154.5,163.7 1160.9,159.0 1167.3,160.9 1173.8,165.6 1186.8,166.2 1193.4,161.7" fill="none" stroke="none" marker-start="url(#wu)" marker-mid="url(#wu)" marker-end="url(#wu)"/><polyline points="722.2,128.0 722.7,128.0 723.3,128.1 723.9,128.1 724.6,128.2 725.3,128.2 726.1,128.3 726.9,128.4 727.8,128.4 728.7,128.5 729.6,128.6 730.6,128.6 731.7,128.7 732.8,128.8 733.9,128.9 735.1,129.0 736.3,129.1 737.6,129.2 738.9,129.3 740.3,129.4 741.7,129.5 743.2,129.6 744.7,129.7 746.2,129.9 747.8,130.0 749.5,130.1 751.2,130.2 752.9,130.4 754.7,130.5 756.5,130.6 758.4,130.8 760.4,130.9 762.3,131.1 764.3,131.2 766.4,131.4 768.5,131.6 770.7,131.7 772.9,131.9 775.1,132.1 777.4,132.3 779.8,132.4 782.2,132.6 784.6,132.8 787.1,133.0 789.6,133.2 792.2,133.4 794.8,133.6 797.5,133.8 800.2,134.0 802.9,134.2 805.8,134.4 808.6,134.7 811.5,134.9 814.5,135.1 817.4,135.3 820.5,135.6 823.6,135.8 826.7,136.0 829.9,136.3 833.1,136.5 836.4,136.8 839.7,137.0 843.0,137.3 846.4,137.6 849.9,137.8 853.4,138.1 857.0,138.4 860.5,138.7 864.2,138.9 867.9,139.2 871.6,139.5 875.4,139.8 879.2,140.1 883.1,140.4 887.0,140.7 891.0,141.0 895.0,141.3 899.0,141.6 903.1,141.9 907.3,142.3 911.5,142.6 915.7,142.9 920.0,143.2 924.3,143.6 928.7,143.9 933.1,144.2 937.6,144.6 942.1,144.9 946.7,145.3 951.3,145.6 956.0,146.0 960.7,146.4 965.4,146.7 970.2,147.1 975.1,147.5 980.0,147.8 984.9,148.2 989.9,148.6 994.9,149.0 1000.0,149.4 1005.1,149.8 1010.3,150.2 1015.5,150.6 1020.7,151.0 1026.0,151.4 1031.4,151.8 1036.8,152.2 1042.2,152.6 1047.7,153.1 1053.3,153.5 1058.9,153.9 1064.5,154.4 1070.2,154.8 1075.9,155.2 1081.7,155.7 1087.5,156.1 1093.3,156.6 1099.2,157.0 1105.2,157.5 1111.2,158.0 1117.2,158.4 1123.3,158.9 1129.5,159.4 1135.7,159.8 1141.9,160.3 1148.2,160.8 1154.5,161.3 1160.9,161.8 1167.3,162.3 1173.8,162.8 1180.3,163.3 1186.8,163.8 1193.4,164.3 1200.1,164.8 1206.8,165.3" fill="none" stroke="#00ffff" stroke-width="2.8" shape-rendering="crispEdges"/><polyline points="1213.5,166.4 1220.3,167.1 1227.1,166.9 1234.0,166.9 1240.9,167.9 1247.9,169.4 1254.9,168.5 1262.0,168.8 1269.1,170.5 1276.3,171.6 1283.5,170.3 1290.7,171.6 1298.0,174.4 1305.4,172.8 1312.8,175.0 1320.2,174.2 1327.7,174.1 1335.2,176.0 1342.8,177.9 1350.4,178.2 1358.1,176.5 1365.8,179.2 1373.5,179.6 1381.4,179.8 1389.2,181.1 1397.1,181.3" fill="none" stroke="none" marker-start="url(#m18)" marker-mid="url(#m18)" marker-end="url(#m18)"/><polyline points="722.2,132.5 724.6,128.0 726.9,128.1 729.6,132.4 733.9,128.9 741.7,130.2 744.7,133.8 751.2,134.0 762.3,134.8 764.3,131.3 768.5,136.4 772.9,135.7 779.8,136.6 784.6,133.9 802.9,138.1 808.6,138.7 811.5,135.6 817.4,140.3 820.5,139.2 823.6,136.6 826.7,136.3 843.0,138.1 849.9,137.4 853.4,142.3 857.0,142.5 864.2,139.4 867.9,139.8 871.6,143.2 879.2,145.3 887.0,141.0 891.0,140.9 903.1,142.8 911.5,147.1 915.7,143.4 920.0,148.3 937.6,144.8 946.7,149.2 956.0,151.2 975.1,147.0 984.9,148.3 989.9,153.8 1000.0,150.5 1010.3,150.5 1015.5,151.6 1026.0,156.3 1036.8,152.5 1047.7,157.0 1053.3,153.5 1064.5,159.5 1070.2,155.1 1081.7,156.0 1087.5,156.7 1093.3,161.5 1105.2,161.4 1117.2,158.9 1123.3,163.9 1135.7,164.1 1141.9,164.7 1148.2,165.0 1154.5,166.2 1160.9,161.3 1167.3,167.2 1173.8,168.0 1193.4,163.9" fill="none" stroke="none" marker-start="url(#wd)" marker-mid="url(#wd)" marker-end="url(#wd)"/><polyline points="731.7,132.9 736.3,132.8 738.9,134.4 747.8,134.8 754.7,130.2 758.4,130.6 766.4,136.5 770.7,136.1 775.1,133.1 777.4,132.0 782.2,136.3 787.1,132.6 789.6,138.4 792.2,137.0 794.8,134.5 797.5,138.9 800.2,138.7 805.8,134.5 814.5,139.7 829.9,140.0 833.1,136.9 836.4,137.4 839.7,141.0 846.4,138.7 860.5,143.4 875.4,139.7 883.1,140.6 895.0,140.8 899.0,142.2 907.3,141.8 924.3,144.4 928.7,147.6 933.1,144.8 942.1,148.9 951.3,150.3 960.7,150.8 965.4,147.3 970.2,147.9 980.0,148.5 994.9,154.0 1005.1,150.6 1020.7,152.0 1031.4,156.8 1042.2,152.9 1058.9,153.8 1075.9,159.5 1099.2,160.9 1111.2,162.6 1129.5,163.6 1180.3,162.9 1186.8,164.6 1200.1,165.1 1206.8,166.3" fill="none" stroke="none" marker-start="url(#wu)" marker-mid="url(#wu)" marker-end="url(#wu)"/><polyline points="722.2,130.4 722.7,130.4 723.3,130.5 723.9,130.5 724.6,130.6 725.3,130.6 726.1,130.7 726.9,130.8 727.8,130.8 728.7,130.9 729.6,131.0 730.6,131.0 731.7,131.1 732.8,131.2 733.9,131.3 735.1,131.4 736.3,131.5 737.6,131.6 738.9,131.7 740.3,131.8 741.7,131.9 743.2,132.0 744.7,132.1 746.2,132.3 747.8,132.4 749.5,132.5 751.2,132.6 752.9,132.8 754.7,132.9 756.5,133.0 758.4,133.2 760.4,133.3 762.3,133.5 764.3,133.6 766.4,133.8 768.5,134.0 770.7,134.1 772.9,134.3 775.1,134.5 777.4,134.7 779.8,134.8 782.2,135.0 784.6,135.2 787.1,135.4 789.6,135.6 792.2,135.8 794.8,136.0 797.5,136.2 800.2,136.4 802.9,136.6 805.8,136.8 808.6,137.1 811.5,137.3 814.5,137.5 817.4,137.7 820.5,138.0 823.6,138.2 826.7,138.4 829.9,138.7 833.1,138.9 836.4,139.2 839.7,139.4 843.0,139.7 846.4,140.0 849.9,140.2 853.4,140.5 857.0,140.8 860.5,141.1 864.2,141.3 867.9,141.6 871.6,141.9 875.4,142.2 879.2,142.5 883.1,142.8 887.0,143.1 891.0,143.4 895.0,143.7 899.0,144.0 903.1,144.3 907.3,144.7 911.5,145.0 915.7,145.3 920.0,145.6 924.3,146.0 928.7,146.3 933.1,146.6 937.6,147.0 942.1,147.3 946.7,147.7 951.3,148.0 956.0,148.4 960.7,148.8 965.4,149.1 970.2,149.5 975.1,149.9 980.0,150.2 984.9,150.6 989.9,151.0 994.9,151.4 1000.0,151.8 1005.1,152.2 1010.3,152.6 1015.5,153.0 1020.7,153.4 1026.0,153.8 1031.4,154.2 1036.8,154.6 1042.2,155.0 1047.7,155.5 1053.3,155.9 1058.9,156.3 1064.5,156.8 1070.2,157.2 1075.9,157.6 1081.7,158.1 1087.5,158.5 1093.3,159.0 1099.2,159.4 1105.2,159.9 1111.2,160.4 1117.2,160.8 1123.3,161.3 1129.5,161.8 1135.7,162.2 1141.9,162.7 1148.2,163.2 1154.5,163.7 1160.9,164.2 1167.3,164.7 1173.8,165.2 1180.3,165.7 1186.8,166.2 1193.4,166.7 1200.1,167.2 1206.8,167.7" fill="none" stroke="#00ff00" stroke-width="2.8" shape-rendering="crispEdges"/><polyline points="1213.5,167.6 1220.3,168.9 1227.1,168.4 1234.0,169.4 1240.9,171.9 1247.9,171.0 1254.9,170.9 1262.0,172.7 1269.1,171.7 1276.3,173.6 1283.5,174.6 1290.7,173.4 1298.0,175.5 1305.4,175.4 1312.8,177.4 1320.2,177.6 1327.7,179.2 1335.2,178.8 1342.8,178.1 1350.4,178.8 1358.1,181.1 1365.8,182.0 1373.5,180.3 1381.4,182.1 1389.2,182.3 1397.1,183.6" fill="none" stroke="none" marker-start="url(#m19)" marker-mid="url(#m19)" marker-end="url(#m19)"/><polyline points="722.2,135.8 726.9,135.7 729.6,136.0 736.3,131.9 744.7,132.8 754.7,134.5 758.4,134.4 762.3,134.2 764.3,138.7 768.5,139.3 772.9,135.8 777.4,140.2 779.8,140.2 782.2,136.6 784.6,140.4 787.1,140.1 794.8,141.7 802.9,137.2 808.6,142.9 814.5,138.9 820.5,143.1 823.6,138.6 826.7,144.2 829.9,140.3 833.1,139.3 836.4,140.0 839.7,145.1 843.0,144.1 846.4,144.3 853.4,145.1 864.2,141.9 875.4,143.3 879.2,144.2 895.0,144.7 903.1,145.8 907.3,145.7 920.0,150.0 937.6,152.9 942.1,152.2 946.7,152.2 951.3,153.9 956.0,153.5 965.4,154.5 970.2,155.1 989.9,155.5 994.9,155.8 1015.5,157.6 1026.0,158.5 1042.2,155.7 1058.9,158.0 1064.5,162.0 1093.3,160.7 1111.2,161.7 1117.2,162.3 1129.5,166.1 1141.9,168.2 1148.2,164.8 1167.3,165.1 1173.8,166.7 1186.8,170.6 1193.4,168.1 1213.5,171.1" fill="none" stroke="none" marker-start="url(#wd)" marker-mid="url(#wd)" marker-end="url(#wd)"/><polyline points="724.6,136.4 731.7,136.5 733.9,133.0 738.9,132.2 741.7,132.5 747.8,137.9 751.2,134.3 766.4,138.5 770.7,140.0 775.1,135.8 789.6,136.5 792.2,140.5 797.5,137.1 800.2,136.6 805.8,137.1 811.5,142.3 817.4,138.5 849.9,141.8 857.0,141.6 860.5,146.4 867.9,147.0 871.6,143.0 883.1,143.6 887.0,148.6 891.0,148.1 899.0,149.1 911.5,150.7 915.7,145.8 924.3,150.9 928.7,151.1 933.1,152.5 960.7,149.2 975.1,154.8 980.0,155.2 984.9,156.3 1000.0,153.2 1005.1,157.9 1010.3,157.6 1020.7,158.8 1031.4,154.7 1036.8,160.4 1047.7,157.3 1053.3,156.8 1070.2,157.9 1075.9,158.1 1081.7,158.6 1087.5,160.0 1099.2,160.9 1105.2,161.6 1123.3,162.9 1135.7,163.1 1154.5,164.6 1160.9,165.3 1180.3,166.5 1200.1,168.2 1206.8,170.3" fill="none" stroke="none" marker-start="url(#wu)" marker-mid="url(#wu)" marker-end="url(#wu)"/><polyline points="722.2,133.4 722.7,133.4 723.3,133.5 723.9,133.5 724.6,133.6 725.3,133.6 726.1,133.7 726.9,133.8 727.8,133.8 728.7,133.9 729.6,134.0 730.6,134.0 731.7,134.1 732.8,134.2 733.9,134.3 735.1,134.4 736.3,134.5 737.6,134.6 738.9,134.7 740.3,134.8 741.7,134.9 743.2,135.0 744.7,135.1 746.2,135.3 747.8,135.4 749.5,135.5 751.2,135.6 752.9,135.8 754.7,135.9 756.5,136.0 758.4,136.2 760.4,136.3 762.3,136.5 764.3,136.6 766.4,136.8 768.5,137.0 770.7,137.1 772.9,137.3 775.1,137.5 777.4,137.7 779.8,137.8 782.2,138.0 784.6,138.2 787.1,138.4 789.6,138.6 792.2,138.8 794.8,139.0 797.5,139.2 800.2,139.4 802.9,139.6 805.8,139.8 808.6,140.1 811.5,140.3 814.5,140.5 817.4,140.7 820.5,141.0 823.6,141.2 826.7,141.4 829.9,141.7 833.1,141.9 836.4,142.2 839.7,142.4 843.0,142.7 846.4,143.0 849.9,143.2 853.4,143.5 857.0,143.8 860.5,144.1 864.2,144.3 867.9,144.6 871.6,144.9 875.4,145.2 879.2,145.5 883.1,145.8 887.0,146.1 891.0,146.4 895.0,146.7 899.0,147.0 903.1,147.3 907.3,147.7 911.5,148.0 915.7,148.3 920.0,148.6 924.3,149.0 928.7,149.3 933.1,149.6 937.6,150.0 942.1,150.3 946.7,150.7 951.3,151.0 956.0,151.4 960.7,151.8 965.4,152.1 970.2,152.5 975.1,152.9 980.0,153.2 984.9,153.6 989.9,154.0 994.9,154.4 1000.0,154.8 1005.1,155.2 1010.3,155.6 1015.5,156.0 1020.7,156.4 1026.0,156.8 1031.4,157.2 1036.8,157.6 1042.2,158.0 1047.7,158.5 1053.3,158.9 1058.9,159.3 1064.5,159.8 1070.2,160.2 1075.9,160.6 1081.7,161.1 1087.5,161.5 1093.3,162.0 1099.2,162.4 1105.2,162.9 1111.2,163.4 1117.2,163.8 1123.3,164.3 1129.5,164.8 1135.7,165.2 1141.9,165.7 1148.2,166.2 1154.5,166.7 1160.9,167.2 1167.3,167.7 1173.8,168.2 1180.3,168.7 1186.8,169.2 1193.4,169.7 1200.1,170.2 1206.8,170.7 1213.5,171.3" fill="none" stroke="#008b8b" stroke-width="2.8" shape-rendering="crispEdges"/><polyline points="1220.3,170.8 1227.1,173.4 1234.0,173.2 1240.9,174.8 1247.9,173.0 1254.9,174.5 1262.0,176.9 1269.1,176.7 1276.3,176.4 1283.5,178.8 1290.7,179.3 1298.0,177.4 1305.4,179.0 1312.8,178.7 1320.2,181.3 1327.7,179.4 1335.2,182.7 1342.8,183.1 1350.4,181.9 1358.1,184.0 1365.8,183.2 1373.5,184.8 1381.4,184.1 1389.2,185.2 1397.1,185.5" fill="none" stroke="none" marker-start="url(#m20)" marker-mid="url(#m20)" marker-end="url(#m20)"/><polyline points="726.9,142.6 736.3,138.6 751.2,140.3 754.7,143.7 758.4,140.6 762.3,140.4 764.3,140.6 766.4,144.6 782.2,142.1 784.6,141.8 789.6,146.7 792.2,143.4 805.8,144.4 811.5,148.0 817.4,145.4 820.5,148.3 833.1,146.0 846.4,150.2 853.4,147.1 860.5,152.3 867.9,153.4 875.4,152.6 879.2,149.6 887.0,149.9 895.0,154.5 911.5,151.5 915.7,155.9 928.7,154.1 937.6,157.8 942.1,158.6 946.7,158.3 965.4,156.6 989.9,158.0 994.9,158.5 1005.1,159.1 1015.5,160.1 1026.0,160.0 1031.4,161.1 1036.8,162.0 1058.9,167.4 1064.5,163.4 1070.2,167.6 1081.7,169.6 1093.3,165.4 1099.2,166.7 1111.2,171.5 1117.2,171.7 1129.5,172.6 1135.7,173.7 1141.9,173.6 1148.2,173.7 1154.5,170.6 1167.3,172.0 1173.8,172.5 1180.3,172.5" fill="none" stroke="none" marker-start="url(#wd)" marker-mid="url(#wd)" marker-end="url(#wd)"/><polyline points="722.2,140.8 724.6,142.4 729.6,142.5 731.7,142.3 733.9,138.1 738.9,137.8 741.7,138.8 744.7,142.9 747.8,139.2 768.5,144.9 770.7,144.9 772.9,145.7 775.1,140.9 777.4,145.7 779.8,146.7 787.1,142.4 794.8,147.1 797.5,143.0 800.2,143.5 802.9,147.6 808.6,148.6 814.5,147.7 823.6,144.6 826.7,145.0 829.9,149.3 836.4,150.6 839.7,147.1 843.0,147.4 849.9,146.4 857.0,148.1 864.2,148.2 871.6,149.6 883.1,149.4 891.0,155.3 899.0,155.8 903.1,151.2 907.3,151.3 920.0,152.5 924.3,156.9 933.1,154.0 951.3,158.6 956.0,159.9 960.7,159.5 970.2,156.1 975.1,157.1 980.0,156.8 984.9,161.9 1000.0,163.1 1010.3,163.0 1020.7,163.6 1042.2,165.2 1047.7,162.4 1053.3,163.0 1075.9,164.9 1087.5,168.8 1105.2,166.5 1123.3,168.5 1160.9,171.3 1186.8,176.9 1193.4,174.1 1200.1,179.0 1206.8,175.6" fill="none" stroke="none" marker-start="url(#wu)" marker-mid="url(#wu)" marker-end="url(#wu)"/><polyline points="722.2,139.4 722.7,139.4 723.3,139.5 723.9,139.5 724.6,139.6 725.3,139.6 726.1,139.7 726.9,139.8 727.8,139.8 728.7,139.9 729.6,140.0 730.6,140.0 731.7,140.1 732.8,140.2 733.9,140.3 735.1,140.4 736.3,140.5 737.6,140.6 738.9,140.7 740.3,140.8 741.7,140.9 743.2,141.0 744.7,141.1 746.2,141.3 747.8,141.4 749.5,141.5 751.2,141.6 752.9,141.8 754.7,141.9 756.5,142.0 758.4,142.2 760.4,142.3 762.3,142.5 764.3,142.6 766.4,142.8 768.5,143.0 770.7,143.1 772.9,143.3 775.1,143.5 777.4,143.7 779.8,143.8 782.2,144.0 784.6,144.2 787.1,144.4 789.6,144.6 792.2,144.8 794.8,145.0 797.5,145.2 800.2,145.4 802.9,145.6 805.8,145.8 808.6,146.1 811.5,146.3 814.5,146.5 817.4,146.7 820.5,147.0 823.6,147.2 826.7,147.4 829.9,147.7 833.1,147.9 836.4,148.2 839.7,148.4 843.0,148.7 846.4,149.0 849.9,149.2 853.4,149.5 857.0,149.8 860.5,150.1 864.2,150.3 867.9,150.6 871.6,150.9 875.4,151.2 879.2,151.5 883.1,151.8 887.0,152.1 891.0,152.4 895.0,152.7 899.0,153.0 903.1,153.3 907.3,153.7 911.5,154.0 915.7,154.3 920.0,154.6 924.3,155.0 928.7,155.3 933.1,155.6 937.6,156.0 942.1,156.3 946.7,156.7 951.3,157.0 956.0,157.4 960.7,157.8 965.4,158.1 970.2,158.5 975.1,158.9 980.0,159.2 984.9,159.6 989.9,160.0 994.9,160.4 1000.0,160.8 1005.1,161.2 1010.3,161.6 1015.5,162.0 1020.7,162.4 1026.0,162.8 1031.4,163.2 1036.8,163.6 1042.2,164.0 1047.7,164.5 1053.3,164.9 1058.9,165.3 1064.5,165.8 1070.2,166.2 1075.9,166.6 1081.7,167.1 1087.5,167.5 1093.3,168.0 1099.2,168.4 1105.2,168.9 1111.2,169.4 1117.2,169.8 1123.3,170.3 1129.5,170.8 1135.7,171.2 1141.9,171.7 1148.2,172.2 1154.5,172.7 1160.9,173.2 1167.3,173.7 1173.8,174.2 1180.3,174.7 1186.8,175.2 1193.4,175.7 1200.1,176.2 1206.8,176.7" fill="none" stroke="#b8860b" stroke-width="2.8" shape-rendering="crispEdges"/><polyline points="1213.5,176.4 1220.3,176.7 1227.1,179.8 1234.0,178.5 1240.9,179.0 1247.9,179.1 1254.9,180.1 1262.0,181.9 1269.1,181.7 1276.3,183.3 1283.5,183.3 1290.7,183.2 1298.0,184.1 1305.4,185.5 1312.8,184.1 1320.2,186.3 1327.7,187.3 1335.2,187.6 1342.8,187.1 1350.4,189.1 1358.1,190.2 1365.8,191.7 1373.5,189.6 1381.4,191.4 1389.2,191.2 1397.1,192.3" fill="none" stroke="none" marker-start="url(#m21)" marker-mid="url(#m21)" marker-end="url(#m21)"/><polyline points="724.6,146.8 726.9,142.9 736.3,147.2 738.9,143.6 741.7,147.1 751.2,149.1 754.7,144.0 758.4,144.0 762.3,148.7 764.3,145.6 766.4,149.7 768.5,150.5 772.9,149.5 775.1,146.0 782.2,151.0 787.1,146.4 794.8,147.7 797.5,148.2 802.9,148.6 805.8,152.6 808.6,148.8 811.5,149.1 814.5,153.0 817.4,149.7 820.5,153.9 829.9,153.7 836.4,151.0 846.4,150.9 849.9,156.1 853.4,157.1 860.5,156.5 864.2,157.7 867.9,154.0 871.6,153.3 879.2,154.8 891.0,155.1 899.0,159.6 903.1,160.5 911.5,160.0 915.7,161.1 920.0,161.4 924.3,158.1 928.7,162.6 937.6,162.7 942.1,163.3 946.7,158.5 960.7,161.1 994.9,162.5 1005.1,163.8 1015.5,164.7 1020.7,165.7 1031.4,165.5 1036.8,167.0 1042.2,166.4 1058.9,167.2 1064.5,172.4 1081.7,170.6 1099.2,170.7 1123.3,172.8 1160.9,175.8 1167.3,176.6 1200.1,179.0 1206.8,182.9" fill="none" stroke="none" marker-start="url(#wd)" marker-mid="url(#wd)" marker-end="url(#wd)"/><polyline points="722.2,142.6 729.6,142.8 731.7,143.2 733.9,142.9 744.7,144.3 747.8,148.9 770.7,145.4 777.4,150.7 779.8,149.7 784.6,150.7 789.6,148.1 792.2,147.6 800.2,151.5 823.6,150.5 826.7,150.4 833.1,150.3 839.7,150.4 843.0,156.1 857.0,157.2 875.4,154.2 883.1,158.8 887.0,154.5 895.0,160.2 907.3,160.6 933.1,162.8 951.3,159.7 956.0,164.9 965.4,160.0 970.2,165.7 975.1,165.5 980.0,161.3 984.9,165.9 989.9,162.7 1000.0,167.4 1010.3,164.7 1026.0,165.3 1047.7,170.7 1053.3,168.2 1070.2,173.0 1075.9,173.2 1087.5,175.0 1093.3,175.2 1105.2,175.8 1111.2,172.6 1117.2,177.4 1129.5,172.7 1135.7,177.2 1141.9,179.1 1148.2,178.2 1154.5,176.1 1173.8,181.2 1180.3,177.0 1186.8,182.0 1193.4,182.1" fill="none" stroke="none" marker-start="url(#wu)" marker-mid="url(#wu)" marker-end="url(#wu)"/><polyline points="722.2,144.1 722.7,144.1 723.3,144.2 723.9,144.2 724.6,144.3 725.3,144.3 726.1,144.4 726.9,144.5 727.8,144.5 728.7,144.6 729.6,144.7 730.6,144.7 731.7,144.8 732.8,144.9 733.9,145.0 735.1,145.1 736.3,145.2 737.6,145.3 738.9,145.4 740.3,145.5 741.7,145.6 743.2,145.7 744.7,145.8 746.2,146.0 747.8,146.1 749.5,146.2 751.2,146.3 752.9,146.5 754.7,146.6 756.5,146.7 758.4,146.9 760.4,147.0 762.3,147.2 764.3,147.3 766.4,147.5 768.5,147.7 770.7,147.8 772.9,148.0 775.1,148.2 777.4,148.4 779.8,148.5 782.2,148.7 784.6,148.9 787.1,149.1 789.6,149.3 792.2,149.5 794.8,149.7 797.5,149.9 800.2,150.1 802.9,150.3 805.8,150.5 808.6,150.8 811.5,151.0 814.5,151.2 817.4,151.4 820.5,151.7 823.6,151.9 826.7,152.1 829.9,152.4 833.1,152.6 836.4,152.9 839.7,153.1 843.0,153.4 846.4,153.7 849.9,153.9 853.4,154.2 857.0,154.5 860.5,154.8 864.2,155.0 867.9,155.3 871.6,155.6 875.4,155.9 879.2,156.2 883.1,156.5 887.0,156.8 891.0,157.1 895.0,157.4 899.0,157.7 903.1,158.0 907.3,158.4 911.5,158.7 915.7,159.0 920.0,159.3 924.3,159.7 928.7,160.0 933.1,160.3 937.6,160.7 942.1,161.0 946.7,161.4 951.3,161.7 956.0,162.1 960.7,162.5 965.4,162.8 970.2,163.2 975.1,163.6 980.0,163.9 984.9,164.3 989.9,164.7 994.9,165.1 1000.0,165.5 1005.1,165.9 1010.3,166.3 1015.5,166.7 1020.7,167.1 1026.0,167.5 1031.4,167.9 1036.8,168.3 1042.2,168.7 1047.7,169.2 1053.3,169.6 1058.9,170.0 1064.5,170.5 1070.2,170.9 1075.9,171.3 1081.7,171.8 1087.5,172.2 1093.3,172.7 1099.2,173.1 1105.2,173.6 1111.2,174.1 1117.2,174.5 1123.3,175.0 1129.5,175.5 1135.7,175.9 1141.9,176.4 1148.2,176.9 1154.5,177.4 1160.9,177.9 1167.3,178.4 1173.8,178.9 1180.3,179.4 1186.8,179.9 1193.4,180.4 1200.1,180.9 1206.8,181.4" fill="none" stroke="#a9a9a9" stroke-width="2.8" shape-rendering="crispEdges"/><polyline points="1213.5,181.3 1220.3,181.1 1227.1,184.4 1234.0,182.4 1240.9,185.2 1247.9,185.2 1254.9,184.8 1262.0,187.2 1269.1,186.5 1276.3,188.9 1283.5,188.1 1290.7,190.0 1298.0,190.5 1305.4,189.4 1312.8,191.0 1320.2,191.8 1327.7,192.2 1335.2,190.8 1342.8,193.6 1350.4,194.5 1358.1,193.3 1365.8,193.6 1373.5,194.2 1381.4,196.4 1389.2,195.6 1397.1,198.7" fill="none" stroke="none" marker-start="url(#m22)" marker-mid="url(#m22)" marker-end="url(#m22)"/><polyline points="722.2,152.3 724.6,151.5 733.9,147.6 736.3,152.4 744.7,153.5 747.8,153.0 754.7,149.0 764.3,150.1 766.4,154.2 772.9,150.5 775.1,151.6 787.1,156.7 789.6,157.4 792.2,156.7 811.5,154.8 817.4,158.7 826.7,159.4 833.1,160.4 843.0,157.1 846.4,161.0 857.0,158.5 860.5,158.7 864.2,158.4 879.2,163.4 883.1,163.9 895.0,164.8 899.0,164.4 907.3,161.9 920.0,166.5 937.6,168.6 942.1,165.1 946.7,168.7 965.4,170.2 994.9,168.6 1000.0,173.5 1010.3,169.3 1020.7,170.4 1026.0,170.8 1031.4,171.7 1047.7,173.2 1058.9,173.8 1064.5,177.4 1070.2,178.0 1081.7,178.7 1087.5,179.3 1093.3,180.0 1105.2,177.0 1111.2,181.0 1129.5,182.3 1148.2,184.5 1160.9,181.5 1167.3,181.6 1180.3,182.0 1193.4,182.9" fill="none" stroke="none" marker-start="url(#wd)" marker-mid="url(#wd)" marker-end="url(#wd)"/><polyline points="726.9,152.2 729.6,151.5 731.7,148.3 738.9,148.2 741.7,148.3 751.2,153.1 758.4,149.6 762.3,150.5 768.5,151.1 770.7,155.8 777.4,156.1 779.8,156.3 782.2,155.4 784.6,152.0 794.8,152.2 797.5,158.0 800.2,154.0 802.9,153.7 805.8,153.2 808.6,154.1 814.5,158.1 820.5,155.1 823.6,155.5 829.9,155.2 836.4,156.9 839.7,161.2 849.9,157.4 853.4,157.1 867.9,157.9 871.6,163.5 875.4,162.7 887.0,159.3 891.0,160.5 903.1,165.3 911.5,162.1 915.7,166.7 924.3,163.2 928.7,163.7 933.1,167.7 951.3,165.3 956.0,168.7 960.7,166.3 970.2,171.1 975.1,170.4 980.0,168.0 984.9,171.0 989.9,168.8 1005.1,172.6 1015.5,174.1 1036.8,171.0 1042.2,176.5 1053.3,172.5 1075.9,178.5 1099.2,180.8 1117.2,181.9 1123.3,178.1 1135.7,178.5 1141.9,179.1 1154.5,181.3 1173.8,186.0 1186.8,183.3 1200.1,188.4 1206.8,186.1" fill="none" stroke="none" marker-start="url(#wu)" marker-mid="url(#wu)" marker-end="url(#wu)"/><polyline points="722.2,149.4 722.7,149.4 723.3,149.5 723.9,149.5 724.6,149.6 725.3,149.6 726.1,149.7 726.9,149.8 727.8,149.8 728.7,149.9 729.6,150.0 730.6,150.0 731.7,150.1 732.8,150.2 733.9,150.3 735.1,150.4 736.3,150.5 737.6,150.6 738.9,150.7 740.3,150.8 741.7,150.9 743.2,151.0 744.7,151.1 746.2,151.3 747.8,151.4 749.5,151.5 751.2,151.6 752.9,151.8 754.7,151.9 756.5,152.0 758.4,152.2 760.4,152.3 762.3,152.5 764.3,152.6 766.4,152.8 768.5,153.0 770.7,153.1 772.9,153.3 775.1,153.5 777.4,153.7 779.8,153.8 782.2,154.0 784.6,154.2 787.1,154.4 789.6,154.6 792.2,154.8 794.8,155.0 797.5,155.2 800.2,155.4 802.9,155.6 805.8,155.8 808.6,156.1 811.5,156.3 814.5,156.5 817.4,156.7 820.5,157.0 823.6,157.2 826.7,157.4 829.9,157.7 833.1,157.9 836.4,158.2 839.7,158.4 843.0,158.7 846.4,159.0 849.9,159.2 853.4,159.5 857.0,159.8 860.5,160.1 864.2,160.3 867.9,160.6 871.6,160.9 875.4,161.2 879.2,161.5 883.1,161.8 887.0,162.1 891.0,162.4 895.0,162.7 899.0,163.0 903.1,163.3 907.3,163.7 911.5,164.0 915.7,164.3 920.0,164.6 924.3,165.0 928.7,165.3 933.1,165.6 937.6,166.0 942.1,166.3 946.7,166.7 951.3,167.0 956.0,167.4 960.7,167.8 965.4,168.1 970.2,168.5 975.1,168.9 980.0,169.2 984.9,169.6 989.9,170.0 994.9,170.4 1000.0,170.8 1005.1,171.2 1010.3,171.6 1015.5,172.0 1020.7,172.4 1026.0,172.8 1031.4,173.2 1036.8,173.6 1042.2,174.0 1047.7,174.5 1053.3,174.9 1058.9,175.3 1064.5,175.8 1070.2,176.2 1075.9,176.6 1081.7,177.1 1087.5,177.5 1093.3,178.0 1099.2,178.4 1105.2,178.9 1111.2,179.4 1117.2,179.8 1123.3,180.3 1129.5,180.8 1135.7,181.2 1141.9,181.7 1148.2,182.2 1154.5,182.7 1160.9,183.2 1167.3,183.7 1173.8,184.2 1180.3,184.7 1186.8,185.2 1193.4,185.7 1200.1,186.2 1206.8,186.7" fill="none" stroke="#8b008b" stroke-width="2.8" shape-rendering="crispEdges"/><polyline points="1213.5,186.9 1220.3,186.9 1227.1,188.0 1234.0,189.5 1240.9,189.4 1247.9,189.1 1254.9,190.7 1262.0,193.0 1269.1,191.8 1276.3,193.0 1283.5,192.6 1290.7,194.4 1298.0,194.2 1305.4,193.5 1312.8,194.6 1320.2,196.2 1327.7,197.0 1335.2,198.1 1342.8,197.7 1350.4,200.3 1358.1,200.3 1365.8,200.2 1373.5,201.8 1381.4,201.6 1389.2,202.9 1397.1,201.5" fill="none" stroke="none" marker-start="url(#m23)" marker-mid="url(#m23)" marker-end="url(#m23)"/><polyline points="731.7,155.0 736.3,154.4 741.7,155.3 744.7,154.7 751.2,155.7 764.3,157.5 766.4,152.9 768.5,152.5 775.1,157.2 779.8,153.7 784.6,153.7 787.1,154.5 792.2,158.7 800.2,156.0 808.6,156.6 811.5,155.5 814.5,160.1 820.5,160.3 826.7,161.4 839.7,161.9 849.9,159.3 864.2,164.2 867.9,165.5 883.1,166.4 887.0,162.6 891.0,163.0 895.0,166.3 903.1,167.2 911.5,164.5 924.3,165.4 928.7,165.6 937.6,166.2 942.1,170.2 946.7,166.2 951.3,171.3 956.0,166.7 960.7,168.0 965.4,168.7 1020.7,172.3 1042.2,178.7 1053.3,179.1 1064.5,175.3 1075.9,176.3 1087.5,181.8 1093.3,177.1 1099.2,178.7 1105.2,178.8 1117.2,183.7 1129.5,185.0 1148.2,186.8 1160.9,183.0" fill="none" stroke="none" marker-start="url(#wd)" marker-mid="url(#wd)" marker-end="url(#wd)"/><polyline points="722.2,153.5 724.6,153.5 726.9,154.5 729.6,154.1 733.9,150.0 738.9,154.2 747.8,151.2 754.7,155.8 758.4,152.2 762.3,157.0 770.7,152.6 772.9,153.7 777.4,154.4 782.2,154.3 789.6,155.0 794.8,159.4 797.5,159.6 802.9,155.3 805.8,155.3 817.4,156.5 823.6,156.8 829.9,156.8 833.1,162.0 836.4,158.7 843.0,159.5 846.4,159.0 853.4,163.1 857.0,163.8 860.5,160.8 871.6,164.7 875.4,161.8 879.2,166.1 899.0,163.4 907.3,163.4 915.7,163.8 920.0,169.4 933.1,169.5 970.2,173.0 975.1,169.4 980.0,173.2 984.9,173.4 989.9,170.4 994.9,170.7 1000.0,170.2 1005.1,170.5 1010.3,171.0 1015.5,175.6 1026.0,173.2 1031.4,177.8 1036.8,177.1 1047.7,179.0 1058.9,179.7 1070.2,179.9 1081.7,181.8 1111.2,178.5 1123.3,179.9 1135.7,185.9 1141.9,185.1 1154.5,186.6 1167.3,183.3 1173.8,188.9 1180.3,188.5 1186.8,185.0 1193.4,190.2 1200.1,186.1 1206.8,188.5" fill="none" stroke="none" marker-start="url(#wu)" marker-mid="url(#wu)" marker-end="url(#wu)"/><polyline points="722.2,151.4 722.7,151.4 723.3,151.5 723.9,151.5 724.6,151.6 725.3,151.6 726.1,151.7 726.9,151.8 727.8,151.8 728.7,151.9 729.6,152.0 730.6,152.0 731.7,152.1 732.8,152.2 733.9,152.3 735.1,152.4 736.3,152.5 737.6,152.6 738.9,152.7 740.3,152.8 741.7,152.9 743.2,153.0 744.7,153.1 746.2,153.3 747.8,153.4 749.5,153.5 751.2,153.6 752.9,153.8 754.7,153.9 756.5,154.0 758.4,154.2 760.4,154.3 762.3,154.5 764.3,154.6 766.4,154.8 768.5,155.0 770.7,155.1 772.9,155.3 775.1,155.5 777.4,155.7 779.8,155.8 782.2,156.0 784.6,156.2 787.1,156.4 789.6,156.6 792.2,156.8 794.8,157.0 797.5,157.2 800.2,157.4 802.9,157.6 805.8,157.8 808.6,158.1 811.5,158.3 814.5,158.5 817.4,158.7 820.5,159.0 823.6,159.2 826.7,159.4 829.9,159.7 833.1,159.9 836.4,160.2 839.7,160.4 843.0,160.7 846.4,161.0 849.9,161.2 853.4,161.5 857.0,161.8 860.5,162.1 864.2,162.3 867.9,162.6 871.6,162.9 875.4,163.2 879.2,163.5 883.1,163.8 887.0,164.1 891.0,164.4 895.0,164.7 899.0,165.0 903.1,165.3 907.3,165.7 911.5,166.0 915.7,166.3 920.0,166.6 924.3,167.0 928.7,167.3 933.1,167.6 937.6,168.0 942.1,168.3 946.7,168.7 951.3,169.0 956.0,169.4 960.7,169.8 965.4,170.1 970.2,170.5 975.1,170.9 980.0,171.2 984.9,171.6 989.9,172.0 994.9,172.4 1000.0,172.8 1005.1,173.2 1010.3,173.6 1015.5,174.0 1020.7,174.4 1026.0,174.8 1031.4,175.2 1036.8,175.6 1042.2,176.0 1047.7,176.5 1053.3,176.9 1058.9,177.3 1064.5,177.8 1070.2,178.2 1075.9,178.6 1081.7,179.1 1087.5,179.5 1093.3,180.0 1099.2,180.4 1105.2,180.9 1111.2,181.4 1117.2,181.8 1123.3,182.3 1129.5,182.8 1135.7,183.2 1141.9,183.7 1148.2,184.2 1154.5,184.7 1160.9,185.2 1167.3,185.7 1173.8,186.2 1180.3,186.7 1186.8,187.2 1193.4,187.7 1200.1,188.2 1206.8,188.7" fill="none" stroke="#ffff00" stroke-width="2.8" shape-rendering="crispEdges"/><polyline points="1213.5,189.7 1220.3,190.5 1227.1,189.5 1234.0,190.5 1240.9,191.1 1247.9,192.4 1254.9,194.4 1262.0,194.7 1269.1,193.8 1276.3,194.4 1283.5,194.5 1290.7,196.7 1298.0,196.1 1305.4,196.1 1312.8,198.7 1320.2,199.1 1327.7,198.6 1335.2,200.6 1342.8,200.8 1350.4,201.3 1358.1,203.1 1365.8,201.9 1373.5,203.3 1381.4,203.9 1389.2,203.9 1397.1,206.3" fill="none" stroke="none" marker-start="url(#m24)" marker-mid="url(#m24)" marker-end="url(#m24)"/><polyline points="722.2,153.5 733.9,154.6 736.3,154.0 744.7,158.6 747.8,159.9 758.4,156.8 764.3,157.4 770.7,157.6 772.9,157.6 777.4,161.8 779.8,161.4 787.1,162.6 792.2,158.1 797.5,159.3 802.9,164.6 805.8,160.1 817.4,161.7 820.5,164.4 823.6,164.6 826.7,161.4 833.1,166.5 849.9,167.9 857.0,167.8 860.5,164.9 864.2,169.2 871.6,169.7 875.4,169.2 879.2,164.9 887.0,166.7 891.0,167.1 895.0,166.7 937.6,175.0 942.1,175.4 960.7,176.0 980.0,177.5 984.9,177.9 1000.0,178.6 1020.7,176.0 1026.0,176.1 1031.4,177.3 1053.3,182.7 1058.9,179.1 1075.9,185.4 1093.3,181.5 1105.2,186.9 1111.2,187.5 1117.2,187.7 1123.3,183.9 1129.5,184.5 1141.9,189.9 1154.5,186.0 1167.3,187.1 1180.3,193.6 1186.8,193.3" fill="none" stroke="none" marker-start="url(#wd)" marker-mid="url(#wd)" marker-end="url(#wd)"/><polyline points="724.6,157.9 726.9,157.3 729.6,154.0 731.7,154.7 738.9,158.7 741.7,158.5 751.2,160.3 754.7,156.0 762.3,160.6 766.4,156.4 768.5,156.6 775.1,162.1 782.2,162.2 784.6,158.2 789.6,163.4 794.8,163.0 800.2,163.3 808.6,164.8 811.5,161.1 814.5,160.2 829.9,162.5 836.4,166.8 839.7,166.1 843.0,166.7 846.4,166.8 853.4,167.3 867.9,165.5 883.1,169.6 899.0,171.5 903.1,170.8 907.3,172.2 911.5,171.8 915.7,169.3 920.0,169.2 924.3,168.4 928.7,174.2 933.1,170.1 946.7,174.9 951.3,174.7 956.0,176.2 965.4,172.8 970.2,173.4 975.1,178.0 989.9,174.4 994.9,178.0 1005.1,175.5 1010.3,175.0 1015.5,176.6 1036.8,182.3 1042.2,181.9 1047.7,178.6 1064.5,183.9 1070.2,179.8 1081.7,181.7 1087.5,186.5 1099.2,182.2 1135.7,190.3 1148.2,189.8 1160.9,191.2 1173.8,192.2 1193.4,193.3 1200.1,195.2 1206.8,191.4" fill="none" stroke="none" marker-start="url(#wu)" marker-mid="url(#wu)" marker-end="url(#wu)"/><polyline points="722.2,155.6 722.7,155.6 723.3,155.7 723.9,155.7 724.6,155.8 725.3,155.8 726.1,155.9 726.9,156.0 727.8,156.0 728.7,156.1 729.6,156.2 730.6,156.2 731.7,156.3 732.8,156.4 733.9,156.5 735.1,156.6 736.3,156.7 737.6,156.8 738.9,156.9 740.3,157.0 741.7,157.1 743.2,157.2 744.7,157.3 746.2,157.5 747.8,157.6 749.5,157.7 751.2,157.8 752.9,158.0 754.7,158.1 756.5,158.2 758.4,158.4 760.4,158.5 762.3,158.7 764.3,158.8 766.4,159.0 768.5,159.2 770.7,159.3 772.9,159.5 775.1,159.7 777.4,159.9 779.8,160.0 782.2,160.2 784.6,160.4 787.1,160.6 789.6,160.8 792.2,161.0 794.8,161.2 797.5,161.4 800.2,161.6 802.9,161.8 805.8,162.0 808.6,162.3 811.5,162.5 814.5,162.7 817.4,162.9 820.5,163.2 823.6,163.4 826.7,163.6 829.9,163.9 833.1,164.1 836.4,164.4 839.7,164.6 843.0,164.9 846.4,165.2 849.9,165.4 853.4,165.7 857.0,166.0 860.5,166.3 864.2,166.5 867.9,166.8 871.6,167.1 875.4,167.4 879.2,167.7 883.1,168.0 887.0,168.3 891.0,168.6 895.0,168.9 899.0,169.2 903.1,169.5 907.3,169.9 911.5,170.2 915.7,170.5 920.0,170.8 924.3,171.2 928.7,171.5 933.1,171.8 937.6,172.2 942.1,172.5 946.7,172.9 951.3,173.2 956.0,173.6 960.7,174.0 965.4,174.3 970.2,174.7 975.1,175.1 980.0,175.4 984.9,175.8 989.9,176.2 994.9,176.6 1000.0,177.0 1005.1,177.4 1010.3,177.8 1015.5,178.2 1020.7,178.6 1026.0,179.0 1031.4,179.4 1036.8,179.8 1042.2,180.2 1047.7,180.7 1053.3,181.1 1058.9,181.5 1064.5,182.0 1070.2,182.4 1075.9,182.8 1081.7,183.3 1087.5,183.7 1093.3,184.2 1099.2,184.6 1105.2,185.1 1111.2,185.6 1117.2,186.0 1123.3,186.5 1129.5,187.0 1135.7,187.4 1141.9,187.9 1148.2,188.4 1154.5,188.9 1160.9,189.4 1167.3,189.9 1173.8,190.4 1180.3,190.9 1186.8,191.4 1193.4,191.9 1200.1,192.4 1206.8,192.9" fill="none" stroke="#556b2f" stroke-width="2.8" shape-rendering="crispEdges"/><polyline points="1213.5,192.2 1220.3,193.5 1227.1,195.9 1234.0,194.9 1240.9,194.8 1247.9,195.3 1254.9,198.3 1262.0,197.8 1269.1,199.2 1276.3,198.8 1283.5,198.6 1290.7,198.9 1298.0,199.5 1305.4,200.2 1312.8,201.8 1320.2,201.4 1327.7,204.4 1335.2,205.3 1342.8,205.1 1350.4,206.9 1358.1,206.4 1365.8,207.8 1373.5,208.1 1381.4,207.7 1389.2,209.8 1397.1,209.8" fill="none" stroke="none" marker-start="url(#m25)" marker-mid="url(#m25)" marker-end="url(#m25)"/><polyline points="722.2,158.2 726.9,162.9 738.9,164.5 747.8,164.4 758.4,166.5 766.4,162.3 768.5,166.1 775.1,162.3 777.4,163.9 779.8,163.6 787.1,163.2 792.2,164.8 797.5,165.4 800.2,165.5 805.8,165.0 808.6,165.3 811.5,170.5 817.4,166.7 823.6,166.4 829.9,171.7 836.4,167.7 846.4,167.8 857.0,173.0 871.6,175.1 875.4,171.1 879.2,170.6 883.1,174.9 907.3,173.0 911.5,177.7 924.3,173.6 928.7,175.1 937.6,175.8 942.1,179.9 960.7,181.2 965.4,182.2 970.2,178.0 975.1,179.1 980.0,182.8 989.9,180.3 1000.0,179.9 1005.1,185.6 1010.3,180.2 1020.7,185.6 1031.4,182.8 1047.7,187.3 1058.9,185.5 1070.2,185.5 1081.7,185.8 1105.2,188.9 1129.5,194.6 1135.7,191.4 1141.9,190.5 1148.2,195.2 1167.3,193.2 1180.3,198.7 1186.8,193.9 1193.4,199.8 1200.1,196.2 1206.8,198.8" fill="none" stroke="none" marker-start="url(#wd)" marker-mid="url(#wd)" marker-end="url(#wd)"/><polyline points="724.6,163.6 729.6,163.3 731.7,164.1 733.9,159.7 736.3,160.6 741.7,164.2 744.7,160.1 751.2,160.6 754.7,165.2 762.3,165.7 764.3,165.8 770.7,162.0 772.9,162.1 782.2,167.7 784.6,167.9 789.6,168.6 794.8,164.4 802.9,165.5 814.5,165.2 820.5,170.8 826.7,166.2 833.1,167.0 839.7,168.4 843.0,171.5 849.9,169.3 853.4,173.8 860.5,173.7 864.2,170.2 867.9,173.7 887.0,172.2 891.0,175.6 895.0,171.3 899.0,173.1 903.1,173.4 915.7,173.0 920.0,178.0 933.1,174.3 946.7,179.6 951.3,180.8 956.0,177.1 984.9,183.0 994.9,179.3 1015.5,181.7 1026.0,185.6 1036.8,183.1 1042.2,183.7 1053.3,188.6 1064.5,189.9 1075.9,189.5 1087.5,191.1 1093.3,187.7 1099.2,187.1 1111.2,188.3 1117.2,192.9 1123.3,190.0 1154.5,196.3 1160.9,196.0 1173.8,197.8" fill="none" stroke="none" marker-start="url(#wu)" marker-mid="url(#wu)" marker-end="url(#wu)"/><polyline points="722.2,160.9 722.7,160.9 723.3,161.0 723.9,161.0 724.6,161.1 725.3,161.1 726.1,161.2 726.9,161.3 727.8,161.3 728.7,161.4 729.6,161.5 730.6,161.5 731.7,161.6 732.8,161.7 733.9,161.8 735.1,161.9 736.3,162.0 737.6,162.1 738.9,162.2 740.3,162.3 741.7,162.4 743.2,162.5 744.7,162.6 746.2,162.8 747.8,162.9 749.5,163.0 751.2,163.1 752.9,163.3 754.7,163.4 756.5,163.5 758.4,163.7 760.4,163.8 762.3,164.0 764.3,164.1 766.4,164.3 768.5,164.5 770.7,164.6 772.9,164.8 775.1,165.0 777.4,165.2 779.8,165.3 782.2,165.5 784.6,165.7 787.1,165.9 789.6,166.1 792.2,166.3 794.8,166.5 797.5,166.7 800.2,166.9 802.9,167.1 805.8,167.3 808.6,167.6 811.5,167.8 814.5,168.0 817.4,168.2 820.5,168.5 823.6,168.7 826.7,168.9 829.9,169.2 833.1,169.4 836.4,169.7 839.7,169.9 843.0,170.2 846.4,170.5 849.9,170.7 853.4,171.0 857.0,171.3 860.5,171.6 864.2,171.8 867.9,172.1 871.6,172.4 875.4,172.7 879.2,173.0 883.1,173.3 887.0,173.6 891.0,173.9 895.0,174.2 899.0,174.5 903.1,174.8 907.3,175.2 911.5,175.5 915.7,175.8 920.0,176.1 924.3,176.5 928.7,176.8 933.1,177.1 937.6,177.5 942.1,177.8 946.7,178.2 951.3,178.5 956.0,178.9 960.7,179.3 965.4,179.6 970.2,180.0 975.1,180.4 980.0,180.7 984.9,181.1 989.9,181.5 994.9,181.9 1000.0,182.3 1005.1,182.7 1010.3,183.1 1015.5,183.5 1020.7,183.9 1026.0,184.3 1031.4,184.7 1036.8,185.1 1042.2,185.5 1047.7,186.0 1053.3,186.4 1058.9,186.8 1064.5,187.3 1070.2,187.7 1075.9,188.1 1081.7,188.6 1087.5,189.0 1093.3,189.5 1099.2,189.9 1105.2,190.4 1111.2,190.9 1117.2,191.3 1123.3,191.8 1129.5,192.3 1135.7,192.7 1141.9,193.2 1148.2,193.7 1154.5,194.2 1160.9,194.7 1167.3,195.2 1173.8,195.7 1180.3,196.2 1186.8,196.7 1193.4,197.2 1200.1,197.7 1206.8,198.2" fill="none" stroke="#ff8c00" stroke-width="2.8" shape-rendering="crispEdges"/><polyline points="1213.5,200.3 1220.3,199.4 1227.1,201.5 1234.0,201.2 1240.9,202.5 1247.9,200.2 1254.9,202.5 1262.0,203.1 1269.1,203.6 1276.3,205.1 1283.5,205.7 1290.7,207.0 1298.0,204.9 1305.4,205.7 1312.8,207.8 1320.2,206.5 1327.7,207.1 1335.2,208.7 1342.8,211.4 1350.4,212.1 1358.1,209.8 1365.8,212.9 1373.5,211.4 1381.4,214.6 1389.2,212.7 1397.1,214.8" fill="none" stroke="none" marker-start="url(#m26)" marker-mid="url(#m26)" marker-end="url(#m26)"/><polyline points="722.2,166.9 724.6,164.6 726.9,164.2 729.6,164.1 731.7,167.7 733.9,168.6 736.3,165.0 738.9,165.3 741.7,164.6 744.7,165.3 747.8,170.1 751.2,170.3 754.7,169.9 758.4,171.1 762.3,166.2 764.3,166.6 766.4,171.7 768.5,167.5 770.7,167.3 772.9,171.8 775.1,172.4 777.4,172.5 779.8,171.7 782.2,168.8 784.6,168.8 787.1,168.4 789.6,172.1 792.2,173.8 794.8,170.0 797.5,168.8 800.2,174.2 802.9,169.5 805.8,170.4 808.6,170.6 811.5,169.8 814.5,171.3 817.4,174.7 820.5,175.0 823.6,175.2 826.7,171.4 829.9,171.4 833.1,172.1 836.4,175.8 839.7,177.3 843.0,176.7 846.4,177.3 849.9,177.8 853.4,173.1 857.0,178.1 860.5,177.9 864.2,174.2 867.9,179.1 871.6,179.2 875.4,175.9 879.2,175.9 883.1,179.5 887.0,176.4 891.0,180.9 895.0,181.6 899.0,181.3 903.1,182.4 907.3,177.4 911.5,181.9 915.7,182.0 920.0,178.4 924.3,179.0 928.7,180.0 933.1,179.3 937.6,180.3 942.1,180.0 946.7,181.3 951.3,181.5 956.0,186.4 960.7,182.4 965.4,182.2 970.2,186.6 975.1,183.9 980.0,183.5 984.9,184.1 989.9,187.9 994.9,184.3 1000.0,188.5 1005.1,189.2 1010.3,190.3 1015.5,186.3 1020.7,186.6 1026.0,191.9 1031.4,192.2 1036.8,187.1 1042.2,188.1 1047.7,189.2 1053.3,193.1 1058.9,189.8 1064.5,194.0 1070.2,191.1 1075.9,191.3 1081.7,191.4 1087.5,192.0 1093.3,196.2 1099.2,193.5 1105.2,197.9 1111.2,198.1 1117.2,193.4 1123.3,194.2 1129.5,194.6 1135.7,195.7 1141.9,200.0 1148.2,201.1 1154.5,197.0 1160.9,202.0 1167.3,198.5 1173.8,199.0 1180.3,202.9 1186.8,204.1 1193.4,199.4 1200.1,204.6 1206.8,201.6" fill="none" stroke="none" marker-start="url(#m27)" marker-mid="url(#m27)" marker-end="url(#m27)"/><polyline points="722.2,165.7 722.7,165.7 723.3,165.8 723.9,165.8 724.6,165.9 725.3,165.9 726.1,166.0 726.9,166.1 727.8,166.1 728.7,166.2 729.6,166.3 730.6,166.3 731.7,166.4 732.8,166.5 733.9,166.6 735.1,166.7 736.3,166.8 737.6,166.9 738.9,167.0 740.3,167.1 741.7,167.2 743.2,167.3 744.7,167.4 746.2,167.6 747.8,167.7 749.5,167.8 751.2,167.9 752.9,168.1 754.7,168.2 756.5,168.3 758.4,168.5 760.4,168.6 762.3,168.8 764.3,168.9 766.4,169.1 768.5,169.3 770.7,169.4 772.9,169.6 775.1,169.8 777.4,170.0 779.8,170.1 782.2,170.3 784.6,170.5 787.1,170.7 789.6,170.9 792.2,171.1 794.8,171.3 797.5,171.5 800.2,171.7 802.9,171.9 805.8,172.1 808.6,172.4 811.5,172.6 814.5,172.8 817.4,173.0 820.5,173.3 823.6,173.5 826.7,173.7 829.9,174.0 833.1,174.2 836.4,174.5 839.7,174.7 843.0,175.0 846.4,175.3 849.9,175.5 853.4,175.8 857.0,176.1 860.5,176.4 864.2,176.6 867.9,176.9 871.6,177.2 875.4,177.5 879.2,177.8 883.1,178.1 887.0,178.4 891.0,178.7 895.0,179.0 899.0,179.3 903.1,179.6 907.3,180.0 911.5,180.3 915.7,180.6 920.0,180.9 924.3,181.3 928.7,181.6 933.1,181.9 937.6,182.3 942.1,182.6 946.7,183.0 951.3,183.3 956.0,183.7 960.7,184.1 965.4,184.4 970.2,184.8 975.1,185.2 980.0,185.5 984.9,185.9 989.9,186.3 994.9,186.7 1000.0,187.1 1005.1,187.5 1010.3,187.9 1015.5,188.3 1020.7,188.7 1026.0,189.1 1031.4,189.5 1036.8,189.9 1042.2,190.3 1047.7,190.8 1053.3,191.2 1058.9,191.6 1064.5,192.1 1070.2,192.5 1075.9,192.9 1081.7,193.4 1087.5,193.8 1093.3,194.3 1099.2,194.7 1105.2,195.2 1111.2,195.7 1117.2,196.1 1123.3,196.6 1129.5,197.1 1135.7,197.5 1141.9,198.0 1148.2,198.5 1154.5,199.0 1160.9,199.5 1167.3,200.0 1173.8,200.5 1180.3,201.0 1186.8,201.5 1193.4,202.0 1200.1,202.5 1206.8,203.0" fill="none" stroke="#9932cc" stroke-width="2.8" shape-rendering="crispEdges"/><polyline points="1213.5,203.6 1220.3,205.5 1227.1,205.3 1234.0,206.8 1240.9,207.1 1247.9,206.6 1254.9,205.7 1262.0,206.4 1269.1,208.7 1276.3,210.1 1283.5,209.1 1290.7,209.1 1298.0,211.8 1305.4,211.7 1312.8,212.1 1320.2,211.7 1327.7,213.7 1335.2,214.4 1342.8,215.5 1350.4,216.8 1358.1,214.8 1365.8,217.9 1373.5,216.9 1381.4,217.9 1389.2,218.3 1397.1,220.5" fill="none" stroke="none" marker-start="url(#m27)" marker-mid="url(#m27)" marker-end="url(#m27)"/><polyline points="722.2,168.4 724.6,173.4 726.9,173.6 729.6,173.8 731.7,168.9 733.9,173.3 736.3,170.0 738.9,173.7 741.7,170.6 744.7,170.0 747.8,171.5 751.2,170.1 754.7,171.1 758.4,175.3 762.3,175.1 764.3,176.9 766.4,172.9 768.5,171.9 770.7,173.0 772.9,176.9 775.1,176.6 777.4,177.8 779.8,177.7 782.2,172.9 784.6,177.2 787.1,174.2 789.6,173.9 792.2,173.4 794.8,177.6 797.5,173.7 800.2,178.3 802.9,174.9 805.8,178.5 808.6,179.2 811.5,180.4 814.5,180.1 817.4,176.4 820.5,177.0 823.6,175.8 826.7,176.1 829.9,176.5 833.1,177.8 836.4,176.8 839.7,177.4 843.0,178.4 846.4,178.9 849.9,178.0 853.4,178.4 857.0,179.0 860.5,182.9 864.2,183.8 867.9,183.4 871.6,184.2 875.4,185.2 879.2,181.2 883.1,181.2 887.0,182.0 891.0,185.8 895.0,181.6 899.0,187.3 903.1,182.3 907.3,183.3 911.5,184.1 915.7,188.3 920.0,183.9 924.3,184.3 928.7,185.0 933.1,184.2 937.6,185.2 942.1,186.2 946.7,186.7 951.3,190.2 956.0,186.4 960.7,190.7 965.4,187.5 970.2,188.5 975.1,188.9 980.0,188.8 984.9,193.0 989.9,188.6 994.9,193.2 1000.0,194.1 1005.1,195.2 1010.3,191.8 1015.5,195.8 1020.7,196.3 1026.0,192.2 1031.4,197.1 1036.8,192.9 1042.2,197.3 1047.7,193.8 1053.3,199.0 1058.9,194.8 1064.5,198.8 1070.2,199.4 1075.9,196.0 1081.7,196.4 1087.5,201.6 1093.3,197.9 1099.2,202.3 1105.2,201.6 1111.2,202.1 1117.2,199.8 1123.3,200.1 1129.5,204.6 1135.7,200.0 1141.9,205.4 1148.2,206.0 1154.5,201.8 1160.9,202.3 1167.3,207.6 1173.8,208.2 1180.3,203.5 1186.8,204.8 1193.4,204.4 1200.1,206.4 1206.8,206.6 1213.5,210.2" fill="none" stroke="none" marker-start="url(#m28)" marker-mid="url(#m28)" marker-end="url(#m28)"/><polyline points="722.2,170.8 722.7,170.8 723.3,170.9 723.9,170.9 724.6,171.0 725.3,171.0 726.1,171.1 726.9,171.2 727.8,171.2 728.7,171.3 729.6,171.4 730.6,171.4 731.7,171.5 732.8,171.6 733.9,171.7 735.1,171.8 736.3,171.9 737.6,172.0 738.9,172.1 740.3,172.2 741.7,172.3 743.2,172.4 744.7,172.5 746.2,172.7 747.8,172.8 749.5,172.9 751.2,173.0 752.9,173.2 754.7,173.3 756.5,173.4 758.4,173.6 760.4,173.7 762.3,173.9 764.3,174.0 766.4,174.2 768.5,174.4 770.7,174.5 772.9,174.7 775.1,174.9 777.4,175.1 779.8,175.2 782.2,175.4 784.6,175.6 787.1,175.8 789.6,176.0 792.2,176.2 794.8,176.4 797.5,176.6 800.2,176.8 802.9,177.0 805.8,177.2 808.6,177.5 811.5,177.7 814.5,177.9 817.4,178.1 820.5,178.4 823.6,178.6 826.7,178.8 829.9,179.1 833.1,179.3 836.4,179.6 839.7,179.8 843.0,180.1 846.4,180.4 849.9,180.6 853.4,180.9 857.0,181.2 860.5,181.5 864.2,181.7 867.9,182.0 871.6,182.3 875.4,182.6 879.2,182.9 883.1,183.2 887.0,183.5 891.0,183.8 895.0,184.1 899.0,184.4 903.1,184.7 907.3,185.1 911.5,185.4 915.7,185.7 920.0,186.0 924.3,186.4 928.7,186.7 933.1,187.0 937.6,187.4 942.1,187.7 946.7,188.1 951.3,188.4 956.0,188.8 960.7,189.2 965.4,189.5 970.2,189.9 975.1,190.3 980.0,190.6 984.9,191.0 989.9,191.4 994.9,191.8 1000.0,192.2 1005.1,192.6 1010.3,193.0 1015.5,193.4 1020.7,193.8 1026.0,194.2 1031.4,194.6 1036.8,195.0 1042.2,195.4 1047.7,195.9 1053.3,196.3 1058.9,196.7 1064.5,197.2 1070.2,197.6 1075.9,198.0 1081.7,198.5 1087.5,198.9 1093.3,199.4 1099.2,199.8 1105.2,200.3 1111.2,200.8 1117.2,201.2 1123.3,201.7 1129.5,202.2 1135.7,202.6 1141.9,203.1 1148.2,203.6 1154.5,204.1 1160.9,204.6 1167.3,205.1 1173.8,205.6 1180.3,206.1 1186.8,206.6 1193.4,207.1 1200.1,207.6 1206.8,208.1 1213.5,208.7" fill="none" stroke="#e9967a" stroke-width="2.8" shape-rendering="crispEdges"/><polyline points="1220.3,208.4 1227.1,209.7 1234.0,209.3 1240.9,212.5 1247.9,211.7 1254.9,213.5 1262.0,212.2 1269.1,213.4 1276.3,213.4 1283.5,215.1 1290.7,216.1 1298.0,216.3 1305.4,217.0 1312.8,216.7 1320.2,219.4 1327.7,217.1 1335.2,218.2 1342.8,220.5 1350.4,222.1 1358.1,222.4 1365.8,221.2 1373.5,224.1 1381.4,223.2 1389.2,224.2 1397.1,225.2" fill="none" stroke="none" marker-start="url(#m28)" marker-mid="url(#m28)" marker-end="url(#m28)"/></g><g clip-path="url(#c1)"><path d="M729 58V238M1399 58V238" stroke="#ff0000" stroke-width="2" stroke-dasharray="6 2 2 2 2 2"/></g><text x="733" y="70" fill="#f00" font-family="Liberation Sans" font-weight="bold" font-size="10.5px">Start</text><text x="1377" y="70" fill="#f00" font-family="Liberation Sans" font-weight="bold" font-size="10.5px">End</text><path d="M714.5 60V233 M710 217.5H714 M706 195.5H714 M710 178.5H714 M710 164.5H714 M710 152.5H714 M706 142.5H714 M710 133.5H714 M710 125.5H714 M710 117.5H714 M706 111.5H714 M710 104.5H714 M710 99.5H714 M710 93.5H714 M706 88.5H714 M710 84.5H714 M710 79.5H714 M710 75.5H714 M706 71.5H714 M710 68.5H714 M710 64.5H714 M710 61.5H714 M723 242.5H1404 M756.5 242V246 M793.5 242V248 M830.5 242V246 M868.5 242V250 M905.5 242V246 M942.5 242V248 M979.5 242V246 M1016.5 242V250 M1053.5 242V246 M1091.5 242V248 M1128.5 242V246 M1165.5 242V250 M1202.5 242V246 M1239.5 242V248 M1276.5 242V246 M1314.5 242V250 M1351.5 242V246 M1388.5 242V248" stroke="#000" stroke-width="1" fill="none"/><text x="701" y="76.3" text-anchor="end" font-family="Liberation Sans" font-size="12.3px" fill="#000">0.0001</text><text x="701" y="93.5" text-anchor="end" font-family="Liberation Sans" font-size="12.3px" fill="#000">8e-05</text><text x="701" y="115.6" text-anchor="end" font-family="Liberation Sans" font-size="12.3px" fill="#000">6e-05</text><text x="701" y="146.7" text-anchor="end" font-family="Liberation Sans" font-size="12.3px" fill="#000">4e-05</text><text x="701" y="200.0" text-anchor="end" font-family="Liberation Sans" font-size="12.3px" fill="#000">2e-05</text><text x="869.0" y="263" text-anchor="middle" font-family="Liberation Sans" font-size="12.3px" fill="#000">0.002</text><text x="1017.7" y="263" text-anchor="middle" font-family="Liberation Sans" font-size="12.3px" fill="#000">0.004</text><text x="1166.4" y="263" text-anchor="middle" font-family="Liberation Sans" font-size="12.3px" fill="#000">0.006</text><text x="1315.1" y="263" text-anchor="middle" font-family="Liberation Sans" font-size="12.3px" fill="#000">0.008</text><text x="1064.5" y="281" text-anchor="middle" font-family="Liberation Sans" font-weight="bold" font-size="14px" letter-spacing="0.15" fill="#000">q^2 [1/Angstrom^2]</text><text transform="translate(659,146.5) rotate(-90)" text-anchor="middle" font-family="Liberation Sans" font-weight="bold" font-size="14px" letter-spacing="0.3" fill="#000">Intensity [a.u.] (log scale)</text><rect x="701" y="310" width="720" height="184" fill="#fff"/><rect x="703" y="312" width="720" height="180" fill="#000"/><rect x="701" y="494" width="720" height="2" fill="#bcbcbc"/><g clip-path="url(#c2)"><path d="M722.5 312V492 M759.5 312V492 M796.5 312V492 M833.5 312V492 M870.5 312V492 M907.5 312V492 M944.5 312V492 M981.5 312V492 M1018.5 312V492 M1055.5 312V492 M1092.5 312V492 M1129.5 312V492 M1166.5 312V492 M1203.5 312V492 M1240.5 312V492 M1277.5 312V492 M1314.5 312V492 M1351.5 312V492 M1388.5 312V492 M703 478.5H1404 M703 463.5H1404 M703 447.5H1404 M703 432.5H1404 M703 416.5H1404 M703 401.5H1404 M703 385.5H1404 M703 369.5H1404 M703 354.5H1404 M703 338.5H1404 M703 323.5H1404" stroke="#d0d0d0" stroke-width="1" stroke-dasharray="3 3"/></g><g clip-path="url(#c2)"><rect x="703" y="400" width="701" height="3" fill="#8b0000"/><rect x="725" y="346" width="2" height="50" fill="#ffff00"/><rect x="725" y="396" width="2" height="12" fill="#556b2f"/><rect x="725" y="408" width="2" height="30" fill="#ff8c00"/><rect x="725" y="438" width="2" height="40" fill="#fff8dc"/><rect x="728" y="359" width="2" height="40" fill="#ffff00"/><rect x="727" y="400" width="3" height="50" fill="#e9967a"/><rect x="727" y="450" width="2" height="20" fill="#556b2f"/><rect x="729" y="349" width="3" height="52" fill="#8b008b"/><rect x="729" y="401" width="3" height="58" fill="#f4a07a"/><rect x="730" y="367" width="2" height="44" fill="#a9a9a9"/><rect x="730" y="411" width="2" height="18" fill="#ff8c00"/><rect x="731" y="368" width="2" height="58" fill="#9932cc"/><rect x="732" y="377" width="2" height="22" fill="#ff8c00"/><rect x="732" y="399" width="2" height="27" fill="#e9967a"/><rect x="733" y="369" width="3" height="36" fill="#008b8b"/><rect x="733" y="405" width="3" height="24" fill="#8b008b"/><rect x="734" y="367" width="3" height="24" fill="#556b2f"/><rect x="734" y="391" width="3" height="30" fill="#8b008b"/><rect x="735" y="378" width="3" height="39" fill="#e9967a"/><rect x="736" y="388" width="3" height="10" fill="#9932cc"/><rect x="736" y="398" width="3" height="21" fill="#e9967a"/><rect x="737" y="362" width="2" height="72" fill="#ff8c00"/><rect x="738" y="391" width="3" height="28" fill="#e9967a"/><rect x="738" y="419" width="3" height="5" fill="#f4a07a"/><rect x="739" y="387" width="3" height="21" fill="#556b2f"/><rect x="739" y="408" width="3" height="4" fill="#e9967a"/><rect x="739" y="412" width="3" height="1" fill="#008b8b"/><rect x="740" y="391" width="3" height="3" fill="#ff8c00"/><rect x="740" y="394" width="3" height="14" fill="#ff8c00"/><rect x="742" y="383" width="2" height="4" fill="#e9967a"/><rect x="742" y="387" width="2" height="37" fill="#9932cc"/><rect x="743" y="383" width="2" height="30" fill="#556b2f"/><rect x="743" y="413" width="2" height="5" fill="#f4a07a"/><rect x="744" y="388" width="2" height="7" fill="#9932cc"/><rect x="744" y="395" width="2" height="11" fill="#556b2f"/><rect x="746" y="390" width="2" height="1" fill="#ff8c00"/><rect x="746" y="390" width="2" height="21" fill="#a9a9a9"/><rect x="747" y="394" width="3" height="3" fill="#9932cc"/><rect x="747" y="397" width="3" height="7" fill="#ff8c00"/><rect x="747" y="404" width="3" height="11" fill="#9932cc"/><rect x="749" y="388" width="3" height="7" fill="#ff8c00"/><rect x="749" y="395" width="3" height="17" fill="#f4a07a"/><rect x="750" y="395" width="2" height="19" fill="#ff8c00"/><rect x="752" y="388" width="3" height="16" fill="#ff8c00"/><rect x="752" y="404" width="3" height="5" fill="#9932cc"/><rect x="754" y="395" width="2" height="2" fill="#e9967a"/><rect x="754" y="397" width="2" height="15" fill="#e9967a"/><rect x="755" y="391" width="2" height="17" fill="#9932cc"/><rect x="755" y="408" width="2" height="2" fill="#556b2f"/><rect x="755" y="410" width="2" height="2" fill="#9932cc"/><rect x="757" y="396" width="2" height="3" fill="#8b008b"/><rect x="757" y="399" width="2" height="10" fill="#ff8c00"/><rect x="759" y="392" width="2" height="5" fill="#ff8c00"/><rect x="759" y="397" width="2" height="12" fill="#ff8c00"/><rect x="761" y="392" width="3" height="2" fill="#e9967a"/><rect x="761" y="394" width="3" height="6" fill="#a9a9a9"/><rect x="761" y="400" width="3" height="5" fill="#f4a07a"/><rect x="762" y="392" width="2" height="19" fill="#008b8b"/><rect x="764" y="395" width="3" height="2" fill="#e9967a"/><rect x="764" y="397" width="3" height="12" fill="#e9967a"/><rect x="764" y="409" width="3" height="2" fill="#e9967a"/><rect x="766" y="394" width="3" height="11" fill="#9932cc"/><rect x="766" y="405" width="3" height="2" fill="#f4a07a"/><rect x="768" y="393" width="3" height="11" fill="#9932cc"/><rect x="768" y="404" width="3" height="1" fill="#ff8c00"/><rect x="768" y="404" width="3" height="5" fill="#f4a07a"/><rect x="770" y="390" width="3" height="1" fill="#ff8c00"/><rect x="770" y="391" width="3" height="18" fill="#ff8c00"/><rect x="772" y="395" width="2" height="5" fill="#f4a07a"/><rect x="772" y="400" width="2" height="4" fill="#f4a07a"/><rect x="775" y="395" width="2" height="3" fill="#556b2f"/><rect x="775" y="398" width="2" height="8" fill="#9932cc"/><rect x="777" y="392" width="2" height="3" fill="#ff8c00"/><rect x="777" y="395" width="2" height="12" fill="#e9967a"/><rect x="779" y="396" width="3" height="14" fill="#e9967a"/><rect x="779" y="410" width="3" height="1" fill="#a9a9a9"/><rect x="781" y="392" width="3" height="4" fill="#556b2f"/><rect x="781" y="396" width="3" height="13" fill="#ff8c00"/><rect x="784" y="393" width="3" height="6" fill="#8b008b"/><rect x="784" y="399" width="3" height="11" fill="#9932cc"/><rect x="786" y="396" width="2" height="10" fill="#9932cc"/><rect x="788" y="394" width="3" height="5" fill="#e9967a"/><rect x="788" y="399" width="3" height="6" fill="#ff8c00"/><rect x="791" y="396" width="2" height="11" fill="#e9967a"/><rect x="791" y="407" width="2" height="1" fill="#ff8c00"/><rect x="793" y="394" width="3" height="2" fill="#e9967a"/><rect x="793" y="396" width="3" height="7" fill="#f4a07a"/><rect x="793" y="403" width="3" height="7" fill="#f4a07a"/><rect x="796" y="395" width="2" height="4" fill="#008b8b"/><rect x="796" y="399" width="2" height="6" fill="#a9a9a9"/><rect x="796" y="405" width="2" height="1" fill="#e9967a"/><rect x="798" y="394" width="2" height="12" fill="#f4a07a"/><rect x="801" y="396" width="2" height="8" fill="#9932cc"/><rect x="801" y="404" width="2" height="1" fill="#f4a07a"/><rect x="804" y="397" width="2" height="12" fill="#e9967a"/><rect x="804" y="409" width="2" height="1" fill="#fff8dc"/><rect x="806" y="396" width="2" height="8" fill="#9932cc"/><rect x="806" y="404" width="2" height="4" fill="#a9a9a9"/><rect x="809" y="392" width="2" height="2" fill="#ff8c00"/><rect x="809" y="394" width="2" height="13" fill="#e9967a"/><rect x="812" y="397" width="2" height="2" fill="#ff8c00"/><rect x="812" y="399" width="2" height="8" fill="#9932cc"/><rect x="815" y="394" width="2" height="1" fill="#556b2f"/><rect x="815" y="395" width="2" height="10" fill="#9932cc"/><rect x="815" y="405" width="2" height="1" fill="#9932cc"/><rect x="818" y="396" width="2" height="12" fill="#00ffff"/><rect x="821" y="394" width="2" height="11" fill="#8b008b"/><rect x="824" y="396" width="2" height="6" fill="#a9a9a9"/><rect x="824" y="402" width="2" height="7" fill="#ffff00"/><rect x="827" y="395" width="2" height="4" fill="#ffff00"/><rect x="827" y="399" width="2" height="14" fill="#f4a07a"/><rect x="830" y="394" width="2" height="7" fill="#9932cc"/><rect x="830" y="401" width="2" height="6" fill="#f4a07a"/><rect x="833" y="396" width="2" height="7" fill="#8b008b"/><rect x="833" y="403" width="2" height="6" fill="#e9967a"/><rect x="836" y="395" width="2" height="1" fill="#e9967a"/><rect x="836" y="396" width="2" height="6" fill="#0000ff"/><rect x="836" y="402" width="2" height="3" fill="#a9a9a9"/><rect x="839" y="394" width="2" height="3" fill="#e9967a"/><rect x="839" y="397" width="2" height="10" fill="#556b2f"/><rect x="843" y="395" width="2" height="10" fill="#00ffff"/><rect x="843" y="405" width="2" height="1" fill="#ff8c00"/><rect x="846" y="397" width="2" height="11" fill="#ff8c00"/><rect x="849" y="393" width="2" height="11" fill="#e9967a"/><rect x="849" y="404" width="2" height="1" fill="#556b2f"/><rect x="853" y="395" width="2" height="2" fill="#556b2f"/><rect x="853" y="397" width="2" height="7" fill="#f4a07a"/><rect x="853" y="404" width="2" height="4" fill="#ff8c00"/><rect x="856" y="393" width="2" height="11" fill="#00ffff"/><rect x="860" y="395" width="2" height="14" fill="#00ffff"/><rect x="863" y="397" width="2" height="3" fill="#556b2f"/><rect x="863" y="400" width="2" height="4" fill="#e9967a"/><rect x="867" y="392" width="2" height="8" fill="#ffff00"/><rect x="867" y="400" width="2" height="8" fill="#9932cc"/><rect x="870" y="397" width="2" height="4" fill="#8b008b"/><rect x="870" y="401" width="2" height="5" fill="#00ffff"/><rect x="870" y="406" width="2" height="3" fill="#9932cc"/><rect x="874" y="393" width="2" height="2" fill="#f4a07a"/><rect x="874" y="395" width="2" height="13" fill="#e9967a"/><rect x="878" y="397" width="2" height="7" fill="#ff8c00"/><rect x="878" y="404" width="2" height="1" fill="#ff8c00"/><rect x="881" y="393" width="2" height="2" fill="#9932cc"/><rect x="881" y="395" width="2" height="9" fill="#fff8dc"/><rect x="885" y="394" width="2" height="10" fill="#ff8c00"/><rect x="885" y="404" width="2" height="4" fill="#9932cc"/><rect x="889" y="394" width="2" height="8" fill="#e9967a"/><rect x="889" y="402" width="2" height="2" fill="#9932cc"/><rect x="893" y="396" width="2" height="13" fill="#556b2f"/><rect x="897" y="396" width="2" height="3" fill="#9932cc"/><rect x="897" y="399" width="2" height="3" fill="#e9967a"/><rect x="897" y="402" width="2" height="2" fill="#ff8c00"/><rect x="901" y="398" width="2" height="5" fill="#556b2f"/><rect x="901" y="403" width="2" height="3" fill="#008b8b"/><rect x="905" y="393" width="2" height="6" fill="#9932cc"/><rect x="905" y="399" width="2" height="8" fill="#8b008b"/><rect x="909" y="395" width="2" height="3" fill="#9932cc"/><rect x="909" y="398" width="2" height="6" fill="#556b2f"/><rect x="913" y="395" width="2" height="10" fill="#e9967a"/><rect x="917" y="397" width="2" height="5" fill="#00ffff"/><rect x="917" y="402" width="2" height="5" fill="#9932cc"/><rect x="921" y="393" width="2" height="1" fill="#ffff00"/><rect x="921" y="394" width="2" height="12" fill="#556b2f"/><rect x="926" y="397" width="2" height="7" fill="#f4a07a"/><rect x="930" y="397" width="2" height="4" fill="#f4a07a"/><rect x="930" y="401" width="2" height="5" fill="#ff8c00"/><rect x="934" y="394" width="2" height="12" fill="#ff8c00"/><rect x="939" y="396" width="2" height="6" fill="#e9967a"/><rect x="939" y="402" width="2" height="1" fill="#008b8b"/><rect x="939" y="403" width="2" height="3" fill="#9932cc"/><rect x="943" y="396" width="2" height="2" fill="#9932cc"/><rect x="943" y="398" width="2" height="10" fill="#e9967a"/><rect x="947" y="395" width="2" height="4" fill="#ff8c00"/><rect x="947" y="399" width="2" height="8" fill="#ffff00"/><rect x="952" y="395" width="2" height="10" fill="#008b8b"/><rect x="952" y="405" width="2" height="1" fill="#e9967a"/><rect x="956" y="395" width="2" height="10" fill="#9932cc"/><rect x="956" y="405" width="2" height="1" fill="#556b2f"/><rect x="961" y="395" width="2" height="9" fill="#e9967a"/><rect x="966" y="394" width="2" height="14" fill="#ff8c00"/><rect x="970" y="393" width="2" height="8" fill="#e9967a"/><rect x="970" y="401" width="2" height="2" fill="#a9a9a9"/><rect x="970" y="403" width="2" height="2" fill="#e9967a"/><rect x="975" y="395" width="2" height="8" fill="#ffff00"/><rect x="975" y="403" width="2" height="7" fill="#e9967a"/><rect x="980" y="388" width="2" height="22" fill="#a9a9a9"/><rect x="985" y="394" width="2" height="2" fill="#9932cc"/><rect x="985" y="396" width="2" height="10" fill="#e9967a"/><rect x="990" y="394" width="2" height="3" fill="#e9967a"/><rect x="990" y="397" width="2" height="8" fill="#9932cc"/><rect x="995" y="397" width="2" height="8" fill="#e9967a"/><rect x="999" y="397" width="2" height="7" fill="#ffff00"/><rect x="1004" y="392" width="2" height="1" fill="#556b2f"/><rect x="1004" y="393" width="2" height="11" fill="#e9967a"/><rect x="1010" y="396" width="2" height="13" fill="#e9967a"/><rect x="1015" y="396" width="2" height="9" fill="#00ffff"/><rect x="1015" y="405" width="2" height="3" fill="#9932cc"/><rect x="1020" y="396" width="2" height="8" fill="#0000ff"/><rect x="1025" y="395" width="2" height="1" fill="#00ffff"/><rect x="1025" y="396" width="2" height="12" fill="#00ffff"/><rect x="1025" y="408" width="2" height="2" fill="#9932cc"/><rect x="1030" y="393" width="2" height="6" fill="#f4a07a"/><rect x="1030" y="399" width="2" height="1" fill="#e9967a"/><rect x="1030" y="400" width="2" height="6" fill="#556b2f"/><rect x="1035" y="396" width="2" height="9" fill="#0000ff"/><rect x="1041" y="396" width="2" height="9" fill="#ffff00"/><rect x="1041" y="405" width="2" height="3" fill="#9932cc"/><rect x="1046" y="397" width="2" height="2" fill="#a9a9a9"/><rect x="1046" y="399" width="2" height="10" fill="#fff8dc"/><rect x="1051" y="393" width="2" height="3" fill="#e9967a"/><rect x="1051" y="396" width="2" height="15" fill="#556b2f"/><rect x="1057" y="389" width="2" height="22" fill="#f4a07a"/><rect x="1057" y="411" width="2" height="1" fill="#e9967a"/><rect x="1057" y="412" width="2" height="1" fill="#ffff00"/><rect x="1062" y="391" width="2" height="7" fill="#f4a07a"/><rect x="1062" y="398" width="2" height="7" fill="#8b008b"/><rect x="1062" y="405" width="2" height="3" fill="#e9967a"/><rect x="1068" y="394" width="2" height="2" fill="#9932cc"/><rect x="1068" y="396" width="2" height="12" fill="#fff8dc"/><rect x="1068" y="408" width="2" height="1" fill="#9932cc"/><rect x="1074" y="390" width="2" height="11" fill="#8b008b"/><rect x="1074" y="401" width="2" height="8" fill="#fff8dc"/><rect x="1079" y="391" width="2" height="19" fill="#556b2f"/><rect x="1085" y="393" width="2" height="14" fill="#9932cc"/><rect x="1091" y="392" width="2" height="6" fill="#e9967a"/><rect x="1091" y="398" width="2" height="10" fill="#ffff00"/><rect x="1091" y="408" width="2" height="2" fill="#f4a07a"/><rect x="1096" y="389" width="2" height="10" fill="#9932cc"/><rect x="1096" y="399" width="2" height="9" fill="#556b2f"/><rect x="1096" y="408" width="2" height="11" fill="#8b008b"/><rect x="1102" y="391" width="2" height="16" fill="#f4a07a"/><rect x="1102" y="407" width="2" height="4" fill="#9932cc"/><rect x="1108" y="390" width="2" height="11" fill="#e9967a"/><rect x="1108" y="401" width="2" height="8" fill="#e9967a"/><rect x="1108" y="409" width="2" height="3" fill="#ff8c00"/><rect x="1114" y="393" width="2" height="9" fill="#ff8c00"/><rect x="1114" y="402" width="2" height="1" fill="#f4a07a"/><rect x="1114" y="402" width="2" height="9" fill="#9932cc"/><rect x="1120" y="384" width="2" height="16" fill="#e9967a"/><rect x="1120" y="400" width="2" height="6" fill="#0000ff"/><rect x="1120" y="406" width="2" height="8" fill="#e9967a"/><rect x="1126" y="390" width="2" height="6" fill="#f4a07a"/><rect x="1126" y="396" width="2" height="4" fill="#fff8dc"/><rect x="1126" y="400" width="2" height="5" fill="#9932cc"/><rect x="1132" y="392" width="2" height="8" fill="#e9967a"/><rect x="1132" y="400" width="2" height="8" fill="#9932cc"/><rect x="1138" y="394" width="2" height="3" fill="#9932cc"/><rect x="1138" y="397" width="2" height="14" fill="#fff8dc"/><rect x="1144" y="395" width="2" height="3" fill="#fff8dc"/><rect x="1144" y="398" width="2" height="4" fill="#00ffff"/><rect x="1144" y="402" width="2" height="5" fill="#f4a07a"/><rect x="1150" y="393" width="2" height="14" fill="#0000ff"/><rect x="1156" y="389" width="2" height="14" fill="#008b8b"/><rect x="1156" y="403" width="2" height="10" fill="#e9967a"/><rect x="1163" y="392" width="2" height="1" fill="#fff8dc"/><rect x="1163" y="393" width="2" height="4" fill="#00ffff"/><rect x="1163" y="397" width="2" height="16" fill="#fff8dc"/><rect x="1169" y="396" width="2" height="8" fill="#ff8c00"/><rect x="1169" y="404" width="2" height="4" fill="#f4a07a"/><rect x="1175" y="393" width="2" height="2" fill="#f4a07a"/><rect x="1175" y="395" width="2" height="4" fill="#a9a9a9"/><rect x="1175" y="399" width="2" height="6" fill="#e9967a"/><rect x="1182" y="394" width="2" height="2" fill="#556b2f"/><rect x="1182" y="396" width="2" height="7" fill="#f4a07a"/><rect x="1182" y="403" width="2" height="5" fill="#e9967a"/><rect x="1188" y="394" width="2" height="17" fill="#8b008b"/><rect x="1195" y="394" width="2" height="18" fill="#e9967a"/><rect x="1201" y="395" width="2" height="17" fill="#f4a07a"/><rect x="1201" y="412" width="2" height="1" fill="#8b008b"/><rect x="1208" y="394" width="2" height="15" fill="#0000ff"/><rect x="1214" y="388" width="2" height="18" fill="#9932cc"/><rect x="1214" y="406" width="2" height="8" fill="#008b8b"/><rect x="1221" y="388" width="2" height="7" fill="#00ffff"/><rect x="1221" y="395" width="2" height="8" fill="#e9967a"/><rect x="1221" y="403" width="2" height="3" fill="#9932cc"/><rect x="1228" y="392" width="2" height="1" fill="#fff8dc"/><rect x="1228" y="392" width="2" height="17" fill="#e9967a"/><rect x="1228" y="409" width="2" height="6" fill="#9932cc"/><rect x="1234" y="391" width="2" height="18" fill="#008b8b"/><rect x="1241" y="395" width="2" height="8" fill="#556b2f"/><rect x="1241" y="403" width="2" height="3" fill="#9932cc"/><rect x="1248" y="392" width="2" height="7" fill="#ffff00"/><rect x="1248" y="399" width="2" height="10" fill="#00ffff"/><rect x="1255" y="387" width="2" height="10" fill="#f4a07a"/><rect x="1255" y="397" width="2" height="8" fill="#9932cc"/><rect x="1262" y="385" width="2" height="13" fill="#0000ff"/><rect x="1262" y="398" width="2" height="6" fill="#556b2f"/><rect x="1262" y="404" width="2" height="10" fill="#0000ff"/><rect x="1269" y="387" width="2" height="1" fill="#556b2f"/><rect x="1269" y="388" width="2" height="3" fill="#e9967a"/><rect x="1269" y="391" width="2" height="20" fill="#a9a9a9"/><rect x="1276" y="392" width="2" height="14" fill="#fff8dc"/><rect x="1283" y="387" width="2" height="14" fill="#9932cc"/><rect x="1283" y="401" width="2" height="6" fill="#ffff00"/><rect x="1290" y="393" width="2" height="1" fill="#9932cc"/><rect x="1290" y="394" width="2" height="11" fill="#008b8b"/><rect x="1290" y="405" width="2" height="3" fill="#9932cc"/><rect x="1297" y="389" width="2" height="13" fill="#ff8c00"/><rect x="1297" y="402" width="2" height="14" fill="#f4a07a"/><rect x="1304" y="386" width="2" height="12" fill="#e9967a"/><rect x="1304" y="398" width="2" height="15" fill="#e9967a"/><rect x="1304" y="413" width="2" height="2" fill="#e9967a"/><rect x="1312" y="393" width="2" height="22" fill="#ff8c00"/><rect x="1312" y="415" width="2" height="1" fill="#9932cc"/><rect x="1319" y="394" width="2" height="1" fill="#e9967a"/><rect x="1319" y="395" width="2" height="18" fill="#e9967a"/><rect x="1326" y="385" width="2" height="8" fill="#9932cc"/><rect x="1326" y="393" width="2" height="19" fill="#008b8b"/><rect x="1334" y="394" width="2" height="1" fill="#9932cc"/><rect x="1334" y="395" width="2" height="18" fill="#ff8c00"/><rect x="1341" y="393" width="2" height="21" fill="#f4a07a"/><rect x="1348" y="388" width="2" height="1" fill="#556b2f"/><rect x="1348" y="389" width="2" height="18" fill="#a9a9a9"/><rect x="1356" y="384" width="2" height="6" fill="#e9967a"/><rect x="1356" y="390" width="2" height="7" fill="#556b2f"/><rect x="1356" y="397" width="2" height="9" fill="#9932cc"/><rect x="1363" y="389" width="2" height="27" fill="#e9967a"/><rect x="1363" y="416" width="2" height="1" fill="#008b8b"/><rect x="1371" y="383" width="2" height="7" fill="#e9967a"/><rect x="1371" y="390" width="2" height="30" fill="#fff8dc"/><rect x="1379" y="389" width="2" height="7" fill="#9932cc"/><rect x="1379" y="396" width="2" height="16" fill="#9932cc"/><rect x="1386" y="385" width="2" height="25" fill="#a9a9a9"/><rect x="1386" y="410" width="2" height="4" fill="#008b8b"/><rect x="1394" y="387" width="2" height="22" fill="#8b008b"/><rect x="1402" y="387" width="2" height="18" fill="#556b2f"/><rect x="1402" y="405" width="2" height="10" fill="#a9a9a9"/><rect x="766" y="377" width="3" height="24" fill="#ff8c00"/><path d="M733 312V492M1399 312V492" stroke="#ff0000" stroke-width="2" stroke-dasharray="6 2 2 2 2 2"/></g><text x="736" y="324" fill="#f00" font-family="Liberation Sans" font-weight="bold" font-size="10.5px">Start</text><text x="1377" y="324" fill="#f00" font-family="Liberation Sans" font-weight="bold" font-size="10.5px">End</text><path d="M698.5 315V487 M694 478.5H698 M690 463.5H698 M694 447.5H698 M690 432.5H698 M694 416.5H698 M690 401.5H698 M694 385.5H698 M690 369.5H698 M694 354.5H698 M690 338.5H698 M694 323.5H698 M707 496.5H1404 M722.5 496V504 M759.5 496V500 M796.5 496V502 M833.5 496V500 M870.5 496V504 M907.5 496V500 M944.5 496V502 M981.5 496V500 M1018.5 496V504 M1055.5 496V500 M1092.5 496V502 M1129.5 496V500 M1166.5 496V504 M1203.5 496V500 M1240.5 496V502 M1277.5 496V500 M1314.5 496V504 M1351.5 496V500 M1388.5 496V502" stroke="#000" stroke-width="1" fill="none"/><text x="686" y="342.8" text-anchor="end" font-family="Liberation Sans" font-size="12.3px" fill="#000">0.2</text><text x="686" y="373.9" text-anchor="end" font-family="Liberation Sans" font-size="12.3px" fill="#000">0.1</text><text x="686" y="405.0" text-anchor="end" font-family="Liberation Sans" font-size="12.3px" fill="#000">0</text><text x="686" y="436.1" text-anchor="end" font-family="Liberation Sans" font-size="12.3px" fill="#000">-0.1</text><text x="686" y="467.2" text-anchor="end" font-family="Liberation Sans" font-size="12.3px" fill="#000">-0.2</text><text x="723.8" y="517" text-anchor="middle" font-family="Liberation Sans" font-size="12.3px" fill="#000">0</text><text x="871.8" y="517" text-anchor="middle" font-family="Liberation Sans" font-size="12.3px" fill="#000">0.002</text><text x="1019.8" y="517" text-anchor="middle" font-family="Liberation Sans" font-size="12.3px" fill="#000">0.004</text><text x="1167.8" y="517" text-anchor="middle" font-family="Liberation Sans" font-size="12.3px" fill="#000">0.006</text><text x="1315.8" y="517" text-anchor="middle" font-family="Liberation Sans" font-size="12.3px" fill="#000">0.008</text><text x="1064.5" y="535" text-anchor="middle" font-family="Liberation Sans" font-weight="bold" font-size="14px" letter-spacing="0.15" fill="#000">q^2 [1/Angstrom^2]</text><text transform="translate(659,401) rotate(-90)" text-anchor="middle" font-family="Liberation Sans" font-weight="bold" font-size="14px" letter-spacing="0.3" fill="#000">Intensity [a.u.] (log scale)</text></svg>
<div style="position:absolute;left:636px;top:552px;width:12px;height:12px;border-radius:50%;background:#fff;border:1px solid;border-color:#444 #fff #fff #444;box-shadow:inset 1px 1px 0 #808080"><div style="position:absolute;left:3px;top:3px;width:4px;height:4px;border-radius:50%;background:#000"></div></div>
<div style="position:absolute;left:654px;top:549px;white-space:pre;font-size:14px;line-height:18px;letter-spacing:-0.05px">Difference</div>
<div style="position:absolute;left:901px;top:552px;width:12px;height:12px;border-radius:50%;background:#fff;border:1px solid;border-color:#444 #fff #fff #444;box-shadow:inset 1px 1px 0 #808080"></div>
<div style="position:absolute;left:919px;top:549px;white-space:pre;font-size:14px;line-height:18px;letter-spacing:0.2px">Standard deviation</div>
<div style="position:absolute;left:1166px;top:552px;width:12px;height:12px;border-radius:50%;background:#fff;border:1px solid;border-color:#444 #fff #fff #444;box-shadow:inset 1px 1px 0 #808080"></div>
<div style="position:absolute;left:1184px;top:549px;white-space:pre;font-size:14px;line-height:18px;letter-spacing:0.2px">Percent</div>
<div class="b" style="left:707px;top:569px;width:80px;height:22px;line-height:20px;color:#000;">&lt;</div>
<div style="position:absolute;left:787px;top:569px;width:492px;height:21px;border-top:2px solid #7c7c7c;border-left:1px solid #7c7c7c;border-bottom:2px solid #8a8a8a;border-right:1px solid #e0e0e0;
background:linear-gradient(to right,#c0c0c0 0,#c0c0c0 14px,#c4c4c4 15px,#d6d6d6 105px,#dedede 106px,#c6c6c6 249px,#bcbcbc 250px,#a2a2a2 394px,#9c9c9c 395px,#8c8c8c 480px,#868686 481px,#868686 100%)"></div>
<div style="position:absolute;left:802px;top:571px;width:1px;height:17px;background:#e8e8e8"></div>
<div style="position:absolute;left:892px;top:571px;width:1px;height:17px;background:#e8e8e8"></div>
<div style="position:absolute;left:1036px;top:571px;width:1px;height:17px;background:#e8e8e8"></div>
<div style="position:absolute;left:1181px;top:571px;width:1px;height:17px;background:#e8e8e8"></div>
<div style="position:absolute;left:1268px;top:571px;width:1px;height:17px;background:#e8e8e8"></div>
<div style="position:absolute;left:787px;top:571px;width:492px;height:1px;background:#e4e4e4"></div>
<div class="b" style="left:1280px;top:569px;width:80px;height:22px;line-height:20px;color:#000;">&gt;</div>
<div style="position:absolute;left:1376px;top:568px;white-space:pre;line-height:20px;letter-spacing:0.1px">0.0000</div>
<div style="position:absolute;left:638px;top:589px;width:794px;height:16px;line-height:16px;text-align:center;white-space:pre;font-weight:bold;line-height:16px;letter-spacing:0.1px">Guinier</div>
<div class="b" style="left:636px;top:605px;width:39px;height:22px;line-height:20px;color:red;text-shadow:1px 1px 0 rgba(255,255,255,0.85);">3D</div>
<div class="b" style="left:675px;top:605px;width:146px;height:22px;line-height:20px;color:red;text-shadow:1px 1px 0 rgba(255,255,255,0.85);">Concentration reference</div>
<div class="b" style="left:821px;top:605px;width:80px;height:22px;line-height:20px;color:#000;">Rg plot</div>
<div class="b" style="left:901px;top:605px;width:103px;height:22px;line-height:20px;color:#000;">Approx. MW plot</div>
<div class="b" style="left:1004px;top:605px;width:79px;height:22px;line-height:20px;color:#000;">Residuals</div>
<div class="b" style="left:1083px;top:605px;width:108px;height:22px;line-height:20px;color:red;text-shadow:1px 1px 0 rgba(255,255,255,0.85);">CorMap Analysis</div>
<div class="b" style="left:1191px;top:605px;width:80px;height:22px;line-height:20px;color:red;text-shadow:1px 1px 0 rgba(255,255,255,0.85);">Save Plots</div>
<div class="b" style="left:1271px;top:605px;width:80px;height:22px;line-height:20px;color:#000;">Cancel</div>
<div class="b" style="left:1351px;top:605px;width:79px;height:22px;line-height:20px;color:red;text-shadow:1px 1px 0 rgba(255,255,255,0.85);">Keep</div>
<div class="b" style="left:636px;top:627px;width:110px;height:22px;line-height:20px;color:red;text-shadow:1px 1px 0 rgba(255,255,255,0.85);">EMG+GMG</div>
<div class="b" style="left:746px;top:627px;width:171px;height:22px;line-height:20px;color:red;text-shadow:1px 1px 0 rgba(255,255,255,0.85);">Global Gaussians</div>
<div class="b" style="left:917px;top:627px;width:172px;height:22px;line-height:20px;color:red;text-shadow:1px 1px 0 rgba(255,255,255,0.85);">Scale Analysis</div>
<div class="b" style="left:1089px;top:627px;width:171px;height:22px;line-height:20px;color:#000;">Trial make I(q)</div>
<div class="b" style="left:1260px;top:627px;width:170px;height:22px;line-height:20px;color:red;text-shadow:1px 1px 0 rgba(255,255,255,0.85);">Guinier</div>
<div style="position:absolute;left:636px;top:649px;width:59px;height:1px;background:#008080"></div>
<div style="position:absolute;left:636px;top:669px;width:59px;height:2px;background:#008080"></div>
<div style="position:absolute;left:637px;top:653px;width:12px;height:12px;background:#fff;border-top:1px solid #000;border-left:1px solid #000;border-right:1px solid #e8e8e8;border-bottom:1px solid #e8e8e8;box-shadow:inset 1px 1px 0 #808080"></div>
<div style="position:absolute;left:655px;top:650px;white-space:pre;line-height:18px;letter-spacing:0.1px">Scroll</div>
<div style="position:absolute;left:696px;top:651px;white-space:pre;line-height:18px;letter-spacing:0.1px">q range:</div>
<div style="position:absolute;left:745px;top:650px;width:90px;height:21px;background:#ff0000;border-top:2px solid #000;border-left:2px solid #000;border-right:1px solid #fff;border-bottom:1px solid #fff;text-align:center;line-height:18px;white-space:pre;letter-spacing:0.2px">0.0121313</div>
<div style="position:absolute;left:835px;top:650px;width:89px;height:21px;background:#ff0000;border-top:2px solid #000;border-left:2px solid #000;border-right:1px solid #fff;border-bottom:1px solid #fff;text-align:center;line-height:18px;white-space:pre;letter-spacing:0.2px">0.0956254</div>
<div style="position:absolute;left:929px;top:651px;white-space:pre;line-height:18px;letter-spacing:0.1px">plot extension:</div>
<div style="position:absolute;left:1013px;top:650px;width:89px;height:21px;background:#fff;border-top:2px solid #000;border-left:2px solid #000;border-right:1px solid #fff;border-bottom:1px solid #fff;text-align:center;line-height:18px;white-space:pre;letter-spacing:0.2px">0.0001</div>
<div style="position:absolute;left:1102px;top:650px;width:90px;height:21px;background:#fff;border-top:2px solid #000;border-left:2px solid #000;border-right:1px solid #fff;border-bottom:1px solid #fff;text-align:center;line-height:18px;white-space:pre;letter-spacing:0.2px">5e-05</div>
<div style="position:absolute;left:1193px;top:649px;width:148px;height:1px;background:#008080"></div>
<div style="position:absolute;left:1193px;top:669px;width:148px;height:2px;background:#008080"></div>
<div style="position:absolute;left:1194px;top:654px;width:12px;height:12px;background:#fff;border-top:1px solid #000;border-left:1px solid #000;border-right:1px solid #e8e8e8;border-bottom:1px solid #e8e8e8;box-shadow:inset 1px 1px 0 #808080"><svg width="10" height="10" style="position:absolute;left:0;top:0"><path d="M1.5 4.5L4 7.5L8.5 1.5" stroke="#000" stroke-width="2" fill="none"/></svg></div>
<div style="position:absolute;left:1211px;top:651px;white-space:pre;line-height:18px;letter-spacing:0.1px">SD</div>
<div style="position:absolute;left:1237px;top:654px;width:12px;height:12px;background:#fff;border-top:1px solid #000;border-left:1px solid #000;border-right:1px solid #e8e8e8;border-bottom:1px solid #e8e8e8;box-shadow:inset 1px 1px 0 #808080"><svg width="10" height="10" style="position:absolute;left:0;top:0"><path d="M1.5 4.5L4 7.5L8.5 1.5" stroke="#000" stroke-width="2" fill="none"/></svg></div>
<div style="position:absolute;left:1255px;top:651px;white-space:pre;line-height:18px;letter-spacing:0.1px">qmax*Rg limit:</div>
<div style="position:absolute;left:1341px;top:650px;width:89px;height:21px;background:#fff;border-top:2px solid #000;border-left:2px solid #000;border-right:1px solid #fff;border-bottom:1px solid #fff;text-align:center;line-height:18px;white-space:pre;letter-spacing:0.2px">1.2</div>
<div style="position:absolute;left:655px;top:671px;white-space:pre;font-weight:bold;font-size:14px;line-height:17px;letter-spacing:0.24px">Avg. 33 curves  qmax*Rg 1.196 [1.191:1.200]  Rg 14.8 (0.2) [14.5:15.3]  I0 6.74e-05 (2.54e-05) [2.78e-05:1.03e-04</div>
<div style="position:absolute;left:636px;top:689px;width:794px;height:17px;line-height:17px;text-align:center;white-space:pre;font-weight:bold;font-size:14px;line-height:17px;letter-spacing:0.24px">MW[RT] Avg.  1.35e+04 (83.97) [1.336e+04:1.375e+04]</div>
<div style="position:absolute;left:1404px;top:0px;width:30px;height:733px;background:#d6d3d1"></div>
<div style="position:absolute;left:1429px;top:0px;width:5px;height:1px;background:#000"></div>
<div style="position:absolute;left:1431px;top:1px;width:3px;height:1px;background:#000"></div>
<div style="position:absolute;left:1432px;top:2px;width:2px;height:2px;background:#000"></div>
<div style="position:absolute;left:0px;top:729px;width:1404px;height:3px;background:#d6d3d1"></div>
<div style="position:absolute;left:4px;top:732px;width:1400px;height:1px;background:#5a9fd0"></div>
<div style="position:absolute;left:0px;top:729px;width:2px;height:4px;background:#000"></div>
<div style="position:absolute;left:2px;top:731px;width:2px;height:2px;background:#000"></div>
<svg width="60" height="24" style="position:absolute;left:0;top:0" viewBox="0 0 60 24">
<defs><linearGradient id="bg1" x1="0" y1="0" x2="0" y2="1"><stop offset="0" stop-color="#fafafa"/><stop offset="0.6" stop-color="#e4e4e4"/><stop offset="1" stop-color="#bdbdbd"/></linearGradient></defs>
<path d="M0 0H4V1H2V2H1V4H0Z" fill="#000"/>
<path d="M9 17.5A5.5 5.5 0 0 1 10 7.5" stroke="#f39a1e" stroke-width="1.6" fill="none"/>
<path d="M18.5 8A5.5 5.5 0 0 1 17.5 17" stroke="#f5c060" stroke-width="0.8" fill="none" opacity="0.7"/>
<path d="M8.5 5 L13.5 11.5" stroke="#8c8c8c" stroke-width="2.8"/>
<path d="M19.5 5 L14.5 11.5" stroke="#9a9a9a" stroke-width="2.4"/>
<path d="M13.5 11.5 L19 18.5" stroke="#4e4320" stroke-width="3"/>
<path d="M14.5 11.5 L9 18.5" stroke="#6a5a22" stroke-width="2.6"/>
<circle cx="36.2" cy="11.7" r="7.2" fill="#9a9a9a"/>
<circle cx="36" cy="11.2" r="6.3" fill="url(#bg1)"/>
<circle cx="36" cy="11" r="0.9" fill="#222"/>
</svg>
<svg width="40" height="24" style="position:absolute;left:1364px;top:0" viewBox="1364 0 40 24">
<defs><linearGradient id="bg2" x1="0" y1="0" x2="0" y2="1"><stop offset="0" stop-color="#fafafa"/><stop offset="0.6" stop-color="#e4e4e4"/><stop offset="1" stop-color="#bdbdbd"/></linearGradient></defs>
<circle cx="1373.5" cy="11.5" r="7" fill="#a8a8a8"/>
<circle cx="1373.5" cy="11.2" r="6.3" fill="url(#bg2)"/>
<path d="M1370.8 10 L1373.5 12.7 L1376.2 10" stroke="#333" stroke-width="1.3" fill="none"/>
<circle cx="1396.5" cy="11.5" r="7" fill="#a8a8a8"/>
<circle cx="1396.5" cy="11.2" r="6.3" fill="url(#bg2)"/>
<path d="M1393.8 12.5 L1396.5 9.8 L1399.2 12.5" stroke="#333" stroke-width="1.3" fill="none"/>
</svg>
</body></html>
